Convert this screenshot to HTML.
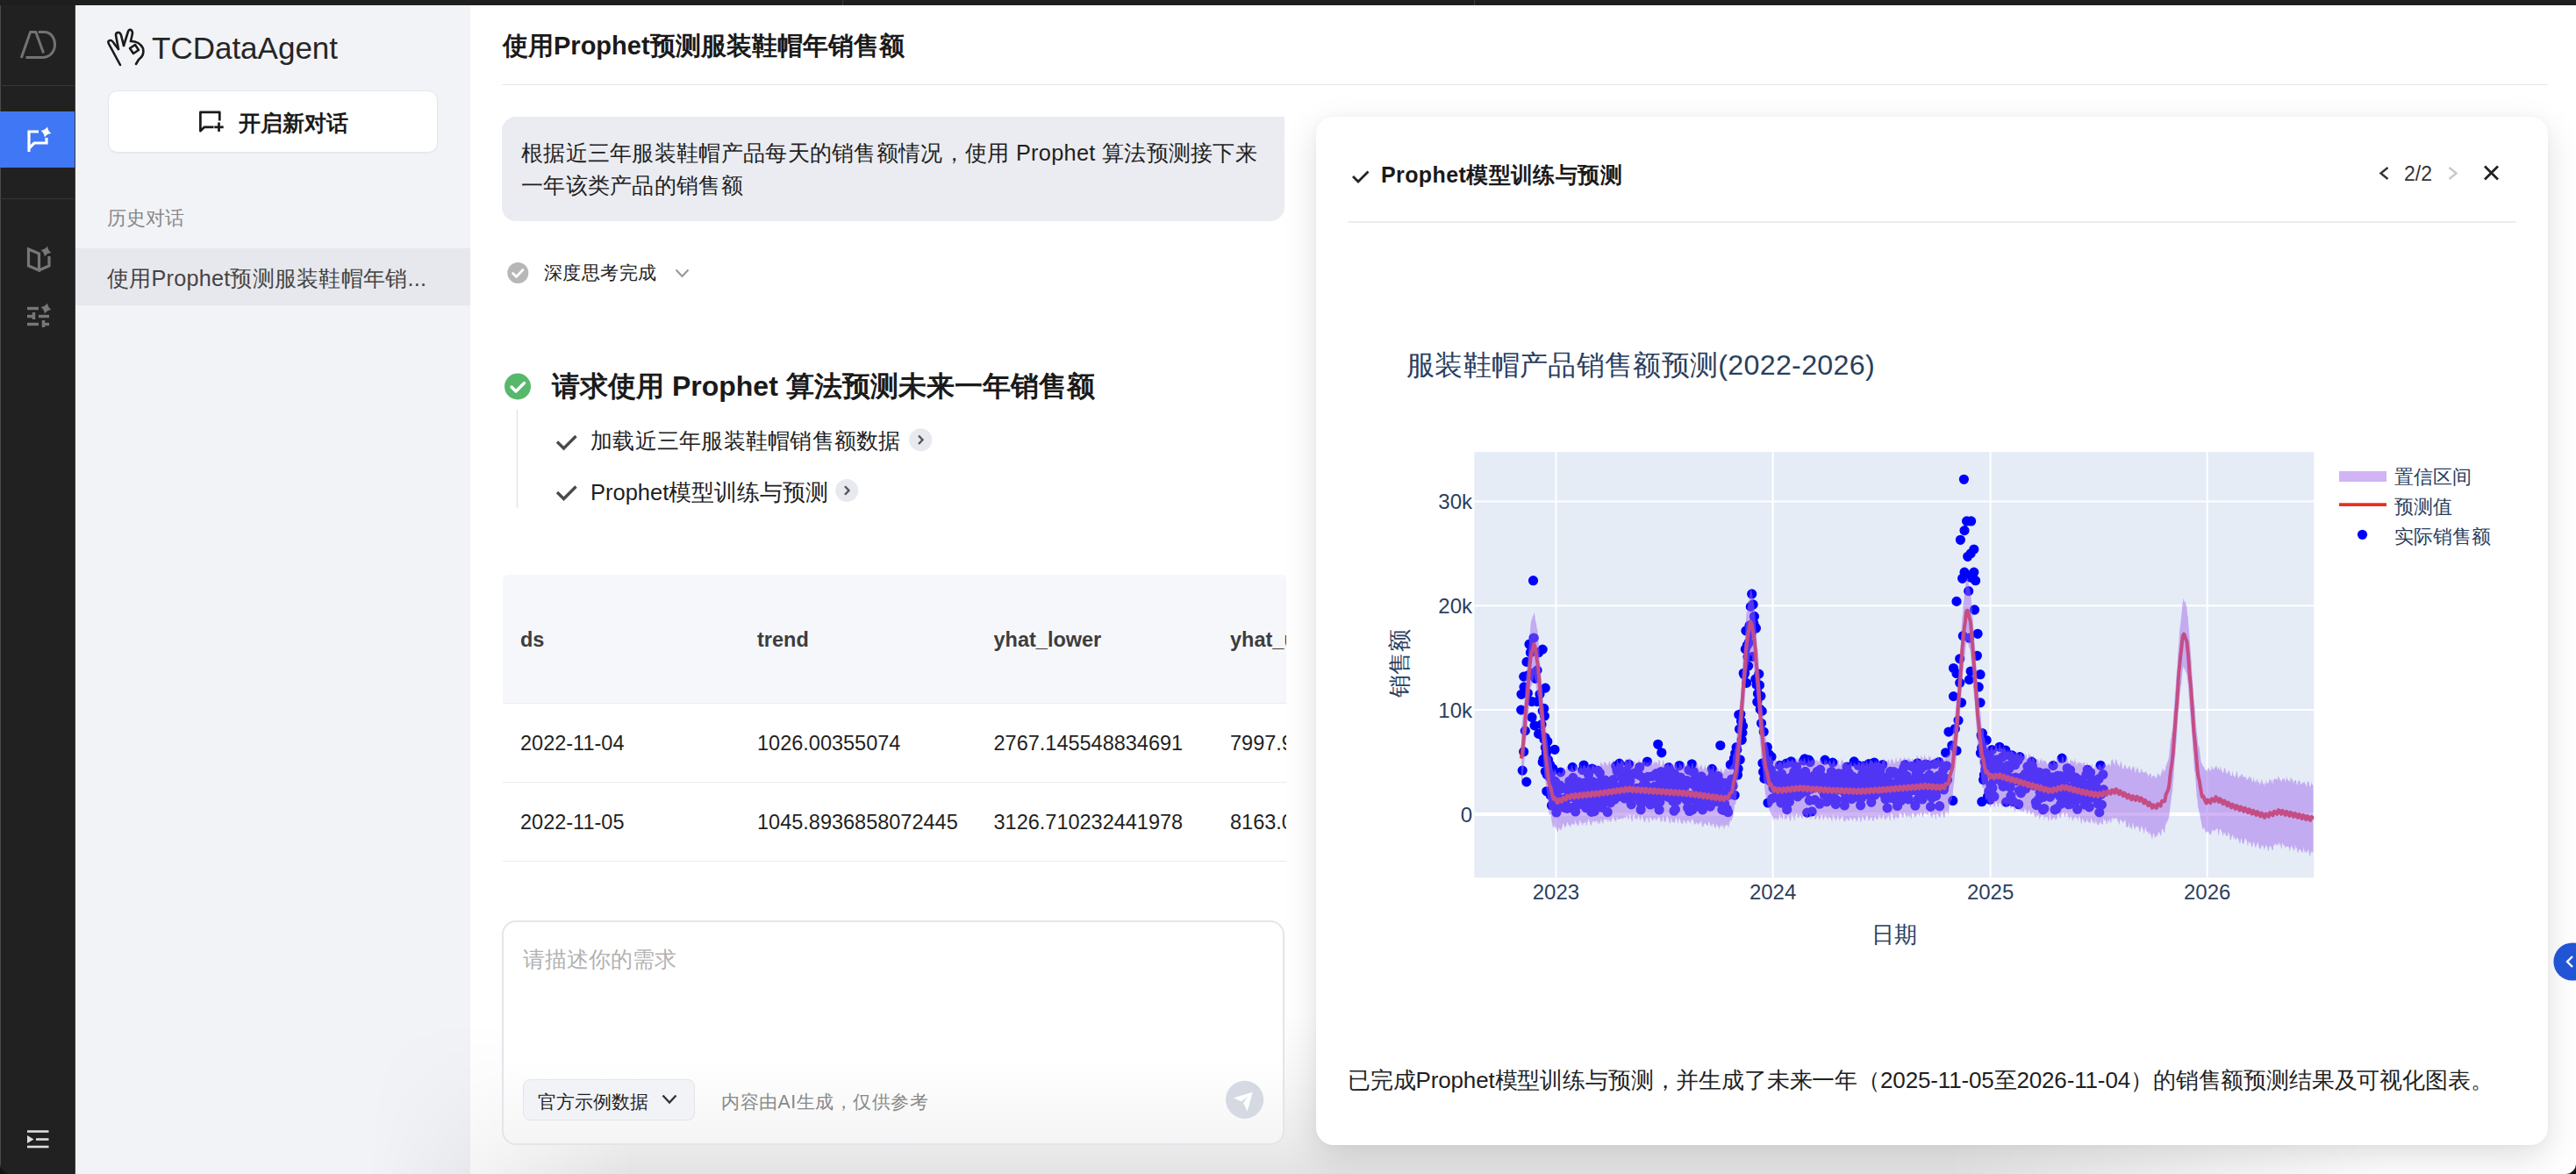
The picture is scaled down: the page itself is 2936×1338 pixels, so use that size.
<!DOCTYPE html>
<html><head><meta charset="utf-8">
<style>
*{box-sizing:border-box;margin:0;padding:0}
html,body{width:2936px;height:1338px;overflow:hidden;background:#fff;font-family:"Liberation Sans",sans-serif;color:#1f1f1f}
.abs{position:absolute}
#topbar{left:0;top:0;width:2936px;height:6px;background:#1e1e1e}
#rail{left:0;top:6px;width:86px;height:1332px;background:#212121;border-right:1px solid #3a3a3a;border-left:1px solid #4a4a4a}
#panel{left:86px;top:6px;width:450px;height:1332px;background:#f2f3f7}
.t{position:absolute;white-space:nowrap;line-height:1}
</style></head>
<body>
<div id="topbar" class="abs"></div>
<div class="abs" style="left:960px;top:0;width:1px;height:6px;background:#3a3a3a"></div>
<div class="abs" style="left:1680px;top:0;width:1px;height:6px;background:#3a3a3a"></div>
<div id="rail" class="abs"></div>
<!-- rail icons -->
<svg class="abs" style="left:0;top:0" width="86" height="1338" viewBox="0 0 86 1338">
  <!-- AD logo -->
  <g fill="none" stroke="#737373" stroke-width="3" stroke-linejoin="round">
    <path d="M24.3 66 L34.6 36.6 H40.8 L49.6 60.6"/>
    <path d="M43.8 36.6 H50 C58.5 36.6 62.5 43.5 62.5 51 C62.5 59 56.5 65.6 48.5 65.6 H29.5"/>
  </g>
  <line x1="0" y1="97.5" x2="85" y2="97.5" stroke="#353535" stroke-width="1"/>
  <rect x="0" y="127" width="85" height="64" fill="#4077f5"/>
  <!-- chat icon -->
  <path d="M33 173 V150 H44 M53 157 V163 H39 L33 169" fill="none" stroke="#fff" stroke-width="3.2" stroke-linejoin="miter"/>
  <path d="M52.5 144.3 Q54.2 148.8 58.7 150.5 Q54.2 152.2 52.5 156.7 Q50.8 152.2 46.3 150.5 Q50.8 148.8 52.5 144.3Z" fill="#fff" transform="rotate(15 52.5 150.5)"/>
  <line x1="0" y1="226.5" x2="85" y2="226.5" stroke="#353535" stroke-width="1"/>
  <!-- book icon -->
  <path d="M32.5 284 L44.5 289 V308 L32.5 303Z M44.5 308 L56 303 V292" fill="none" stroke="#777" stroke-width="3.2" stroke-linejoin="miter"/>
  <path d="M52.5 280.3 Q54.2 284.8 58.7 286.5 Q54.2 288.2 52.5 292.7 Q50.8 288.2 46.3 286.5 Q50.8 284.8 52.5 280.3Z" fill="#777" transform="rotate(15 52.5 286.5)"/>
  <!-- sliders icon -->
  <g stroke="#777" stroke-width="3.4">
    <line x1="31" y1="351.5" x2="44" y2="351.5"/>
    <line x1="31" y1="360.5" x2="39" y2="360.5"/><line x1="44" y1="360.5" x2="56" y2="360.5"/>
    <line x1="31" y1="369.5" x2="44" y2="369.5"/><line x1="49" y1="369.5" x2="56" y2="369.5"/>
    <line x1="38.5" y1="356" x2="38.5" y2="364"/><line x1="49.5" y1="365" x2="49.5" y2="373"/>
  </g>
  <path d="M52.5 345.3 Q54.2 349.8 58.7 351.5 Q54.2 353.2 52.5 357.7 Q50.8 353.2 46.3 351.5 Q50.8 349.8 52.5 345.3Z" fill="#777" transform="rotate(15 52.5 351.5)"/>
  <!-- bottom icon -->
  <g stroke="#dedede" stroke-width="2.6">
    <line x1="31" y1="1289.5" x2="55.5" y2="1289.5"/>
    <line x1="41" y1="1298.5" x2="55.5" y2="1298.5"/>
    <line x1="31" y1="1307" x2="55.5" y2="1307"/>
  </g>
  <path d="M31 1294 L38.5 1298.5 L31 1303Z" fill="#dedede"/>
</svg>
<div id="panel" class="abs"></div>
<!-- panel content -->
<svg class="abs" style="left:120px;top:30px" width="50" height="50" viewBox="120 30 50 50">
  <g fill="none" stroke="#1a1a1a" stroke-width="2.6" stroke-linecap="round" stroke-linejoin="round">
    <path d="M137 74 L124 50 Q122 46 126 46 Q128 46 131 51 L135 56"/>
    <path d="M135 56 L132 40 Q132 37 135 37 Q137 37 138 40 L141 52"/>
    <path d="M141 52 L146 36 Q147 33 149 34 Q151 35 151 38 L149 47"/>
    <path d="M149 47 Q159 47 163 55 Q165 63 158 68 L155 73"/>
    <path d="M148 55 L154 51 L158 57 L152 61Z"/>
  </g>
</svg>
<div class="t" style="left:173px;top:37px;font-size:35px;color:#262626;letter-spacing:0px">TCDataAgent</div>

<div class="abs" style="left:123px;top:103px;width:376px;height:71px;background:#fff;border:1px solid #e6e7ec;border-radius:11px;box-shadow:0 1px 2px rgba(0,0,0,0.04)"></div>
<svg class="abs" style="left:225px;top:124px" width="32" height="30" viewBox="225 124 32 30">
  <path d="M243.5 144.8 H233 L228.4 149.2 V127.8 H250.3 V137.5" fill="none" stroke="#1a1a1a" stroke-width="2.7" stroke-linejoin="round"/>
  <path d="M244.3 144.8 H254.7 M249.5 139.6 V150" fill="none" stroke="#1a1a1a" stroke-width="2.7"/>
</svg>
<div class="t" style="left:272px;top:128px;font-size:25px;font-weight:bold;color:#1a1a1a">开启新对话</div>

<div class="t" style="left:122px;top:238.5px;font-size:21.5px;color:#888">历史对话</div>
<div class="abs" style="left:86px;top:283px;width:450px;height:65px;background:#e7e8ed"></div>
<div class="t" style="left:122px;top:305px;font-size:25.2px;letter-spacing:0.25px;color:#444">使用Prophet预测服装鞋帽年销...</div>

<!-- main -->
<div class="t" style="left:573px;top:38px;font-size:29px;font-weight:bold;color:#1a1a1a">使用Prophet预测服装鞋帽年销售额</div>
<div class="abs" style="left:572px;top:96px;width:2332px;height:1px;background:#e7e7ee"></div>

<!-- bottom shadow overlay -->
<div class="abs" style="left:420px;top:1160px;width:2300px;height:178px;background:linear-gradient(to bottom, rgba(0,0,0,0) 0%, rgba(0,0,0,0.03) 40%, rgba(0,0,0,0.075) 78%, rgba(0,0,0,0.11) 100%);-webkit-mask-image:linear-gradient(to right, transparent 0px, #000 300px, #000 1800px, transparent 2300px);pointer-events:none"></div>
<div class="abs" style="left:572px;top:133px;width:892px;height:119px;background:#ebecf1;border-radius:16px 0 16px 16px"></div>
<div class="t" style="left:594px;top:156px;font-size:25.3px;letter-spacing:0.3px;line-height:37px;color:#1f1f1f;white-space:normal;width:860px">根据近三年服装鞋帽产品每天的销售额情况，使用 Prophet 算法预测接下来<br>一年该类产品的销售额</div>

<svg class="abs" style="left:576px;top:297px" width="220" height="30" viewBox="576 297 220 30">
  <circle cx="590.3" cy="311" r="12" fill="#b7b7b7"/>
  <path d="M584.5 311.5 L588.5 315.5 L596 307.5" fill="none" stroke="#fff" stroke-width="2.6" stroke-linecap="round" stroke-linejoin="round"/>
  <path d="M770.5 307.5 L777.5 315 L784.5 307.5" fill="none" stroke="#999" stroke-width="2.2"/>
</svg>
<div class="t" style="left:620px;top:299.5px;font-size:21.2px;letter-spacing:0.4px;color:#222">深度思考完成</div>

<svg class="abs" style="left:570px;top:420px" width="500" height="170" viewBox="570 420 500 170">
  <circle cx="590" cy="440.5" r="15" fill="#57b86c"/>
  <path d="M583 441 L588 446 L597.5 436.5" fill="none" stroke="#fff" stroke-width="3.4" stroke-linecap="round" stroke-linejoin="round"/>
  <line x1="589.5" y1="467" x2="589.5" y2="579" stroke="#e4e4ea" stroke-width="1.5"/>
  <path d="M635 503.5 L642.5 511 L656.5 497" fill="none" stroke="#4a4a4a" stroke-width="3.4"/>
  <path d="M635 561 L642.5 568.5 L656.5 554.5" fill="none" stroke="#4a4a4a" stroke-width="3.4"/>
  <circle cx="1049.3" cy="501.3" r="13" fill="#e8e9ee"/>
  <path d="M1047 496.5 L1051.5 501.3 L1047 506" fill="none" stroke="#555" stroke-width="2.4"/>
  <circle cx="965.2" cy="559" r="13" fill="#e8e9ee"/>
  <path d="M963 554.2 L967.5 559 L963 563.8" fill="none" stroke="#555" stroke-width="2.4"/>
</svg>
<div class="t" style="left:629px;top:424px;font-size:32px;font-weight:bold;color:#1a1a1a">请求使用 Prophet 算法预测未来一年销售额</div>
<div class="t" style="left:673px;top:490px;font-size:25px;letter-spacing:0.25px;color:#1f1f1f">加载近三年服装鞋帽销售额数据</div>
<div class="t" style="left:673px;top:549px;font-size:25.5px;color:#1f1f1f">Prophet模型训练与预测</div>

<!-- table -->
<div class="abs" style="left:573px;top:655px;width:893px;height:330px;overflow:hidden">
  <div class="abs" style="left:0;top:0;width:893px;height:146px;background:#f6f7fb;border-radius:6px 6px 0 0"></div>
  <div class="abs" style="left:0;top:146px;width:893px;height:1px;background:#ebebf0"></div>
  <div class="abs" style="left:0;top:236px;width:893px;height:1px;background:#ebebf0"></div>
  <div class="abs" style="left:0;top:326px;width:893px;height:1px;background:#ebebf0"></div>
  <div class="t" style="left:20px;top:63px;font-size:23.5px;font-weight:bold;color:#3d3d3d">ds</div>
  <div class="t" style="left:290px;top:63px;font-size:23.5px;font-weight:bold;color:#3d3d3d">trend</div>
  <div class="t" style="left:559.5px;top:63px;font-size:23.5px;font-weight:bold;color:#3d3d3d">yhat_lower</div>
  <div class="t" style="left:829px;top:63px;font-size:23.5px;font-weight:bold;color:#3d3d3d">yhat_upper</div>
  <div class="t" style="left:20px;top:181px;font-size:23.5px;color:#1f1f1f">2022-11-04</div>
  <div class="t" style="left:290px;top:181px;font-size:23.5px;color:#1f1f1f">1026.00355074</div>
  <div class="t" style="left:559.5px;top:181px;font-size:23.5px;color:#1f1f1f">2767.145548834691</div>
  <div class="t" style="left:829px;top:181px;font-size:23.5px;color:#1f1f1f">7997.912345</div>
  <div class="t" style="left:20px;top:271px;font-size:23.5px;color:#1f1f1f">2022-11-05</div>
  <div class="t" style="left:290px;top:271px;font-size:23.5px;color:#1f1f1f">1045.8936858072445</div>
  <div class="t" style="left:559.5px;top:271px;font-size:23.5px;color:#1f1f1f">3126.710232441978</div>
  <div class="t" style="left:829px;top:271px;font-size:23.5px;color:#1f1f1f">8163.012345</div>
</div>

<!-- input -->
<div class="abs" style="left:572px;top:1049px;width:892px;height:256px;background:linear-gradient(to bottom,#fff 0%,#fff 62%,#f9f9f9 85%,#f5f5f5 100%);border:2px solid #e3e5eb;border-radius:16px"></div>
<div class="t" style="left:596px;top:1081px;font-size:25px;color:#b2b2b2">请描述你的需求</div>
<div class="abs" style="left:596px;top:1230px;width:196px;height:47px;background:#f2f3f7;border:1px solid #e3e4ea;border-radius:8px"></div>
<div class="t" style="left:613px;top:1244.5px;font-size:21px;color:#1f1f1f">官方示例数据</div>
<svg class="abs" style="left:750px;top:1244px" width="26" height="20" viewBox="750 1244 26 20">
  <path d="M755.5 1248.5 L763 1256.5 L770.5 1248.5" fill="none" stroke="#333" stroke-width="2.4"/>
</svg>
<div class="t" style="left:822px;top:1244.5px;font-size:21.2px;letter-spacing:0.5px;color:#888">内容由AI生成，仅供参考</div>
<svg class="abs" style="left:1396px;top:1231px" width="46" height="46" viewBox="1396 1231 46 46">
  <circle cx="1418.6" cy="1253.35" r="21.6" fill="#d5dae2"/>
  <path d="M1427.7 1244.7 L1405.9 1251.3 L1414.6 1255.2 L1422.9 1249.2 L1417 1257 L1421.7 1266.5 Z" fill="#fff"/>
</svg>

<!-- right card -->
<div class="abs" style="left:1500px;top:133px;width:1404px;height:1172px;background:#fff;border-radius:20px;box-shadow:0 14px 40px rgba(0,0,0,0.13), 0 0 10px rgba(0,0,0,0.03)"></div>
<svg class="abs" style="left:1536px;top:185px" width="30" height="30" viewBox="1536 185 30 30">
  <path d="M1542 201 L1548 207 L1559.5 195.5" fill="none" stroke="#222" stroke-width="2.8"/>
</svg>
<div class="t" style="left:1574px;top:187px;font-size:25px;letter-spacing:0.4px;font-weight:bold;color:#1a1a1a">Prophet模型训练与预测</div>
<svg class="abs" style="left:2700px;top:180px" width="160" height="36" viewBox="2700 180 160 36">
  <path d="M2721.5 191 L2713.5 197.5 L2721.5 204" fill="none" stroke="#333" stroke-width="2.4"/>
  <path d="M2791.5 191 L2799.5 197.5 L2791.5 204" fill="none" stroke="#c8c8c8" stroke-width="2.4"/>
  <path d="M2832 189.5 L2847 204.5 M2847 189.5 L2832 204.5" fill="none" stroke="#222" stroke-width="2.8"/>
</svg>
<div class="t" style="left:2740px;top:187px;font-size:23px;color:#333">2/2</div>
<div class="abs" style="left:1536px;top:252px;width:1332px;height:2px;background:#ebebf2"></div>

<svg class="abs" style="left:1500px;top:300px" width="1404" height="800" viewBox="1500 300 1404 800">
<text x="1603" y="427" font-family="Liberation Sans,sans-serif" font-size="32.2" letter-spacing="0.3" fill="#2a3f5f">服装鞋帽产品销售额预测(2022-2026)</text>
<defs><clipPath id="pc"><rect x="1680.4" y="515" width="956.8" height="485.3"/></clipPath></defs>
<rect x="1680.4" y="515" width="956.8" height="485.3" fill="#e5ecf6"/>
<line x1="1773.4" y1="515" x2="1773.4" y2="1000.3" stroke="#fff" stroke-width="2"/>
<line x1="2020.6" y1="515" x2="2020.6" y2="1000.3" stroke="#fff" stroke-width="2"/>
<line x1="2268.6" y1="515" x2="2268.6" y2="1000.3" stroke="#fff" stroke-width="2"/>
<line x1="2515.7" y1="515" x2="2515.7" y2="1000.3" stroke="#fff" stroke-width="2"/>
<line x1="1680.4" y1="571.4" x2="2637.2" y2="571.4" stroke="#fff" stroke-width="2"/>
<line x1="1680.4" y1="690.2" x2="2637.2" y2="690.2" stroke="#fff" stroke-width="2"/>
<line x1="1680.4" y1="809.0" x2="2637.2" y2="809.0" stroke="#fff" stroke-width="2"/>
<line x1="1680.4" y1="928.0" x2="2637.2" y2="928.0" stroke="#fff" stroke-width="4"/>
<g clip-path="url(#pc)">
<path d="M1753.5,865.1a5.6,5.6 0 1,0 11.2,0a5.6,5.6 0 1,0 -11.2,0M1754.1,807.4a5.6,5.6 0 1,0 11.2,0a5.6,5.6 0 1,0 -11.2,0M1754.8,816a5.6,5.6 0 1,0 11.2,0a5.6,5.6 0 1,0 -11.2,0M1755.5,840.6a5.6,5.6 0 1,0 11.2,0a5.6,5.6 0 1,0 -11.2,0M1756.2,852.6a5.6,5.6 0 1,0 11.2,0a5.6,5.6 0 1,0 -11.2,0M1756.8,857.8a5.6,5.6 0 1,0 11.2,0a5.6,5.6 0 1,0 -11.2,0M1757.5,882.8a5.6,5.6 0 1,0 11.2,0a5.6,5.6 0 1,0 -11.2,0M1758.2,845.1a5.6,5.6 0 1,0 11.2,0a5.6,5.6 0 1,0 -11.2,0M1758.9,865.9a5.6,5.6 0 1,0 11.2,0a5.6,5.6 0 1,0 -11.2,0M1759.5,874.8a5.6,5.6 0 1,0 11.2,0a5.6,5.6 0 1,0 -11.2,0M1760.2,882.3a5.6,5.6 0 1,0 11.2,0a5.6,5.6 0 1,0 -11.2,0M1760.9,871.4a5.6,5.6 0 1,0 11.2,0a5.6,5.6 0 1,0 -11.2,0M1761.6,882.4a5.6,5.6 0 1,0 11.2,0a5.6,5.6 0 1,0 -11.2,0M1762.3,881.3a5.6,5.6 0 1,0 11.2,0a5.6,5.6 0 1,0 -11.2,0M1762.9,918a5.6,5.6 0 1,0 11.2,0a5.6,5.6 0 1,0 -11.2,0M1763.6,892.2a5.6,5.6 0 1,0 11.2,0a5.6,5.6 0 1,0 -11.2,0M1764.3,875.9a5.6,5.6 0 1,0 11.2,0a5.6,5.6 0 1,0 -11.2,0M1765,914.5a5.6,5.6 0 1,0 11.2,0a5.6,5.6 0 1,0 -11.2,0M1765.6,907.6a5.6,5.6 0 1,0 11.2,0a5.6,5.6 0 1,0 -11.2,0M1766.3,890.2a5.6,5.6 0 1,0 11.2,0a5.6,5.6 0 1,0 -11.2,0M1767,890.8a5.6,5.6 0 1,0 11.2,0a5.6,5.6 0 1,0 -11.2,0M1767.7,897.7a5.6,5.6 0 1,0 11.2,0a5.6,5.6 0 1,0 -11.2,0M1768.3,925.9a5.6,5.6 0 1,0 11.2,0a5.6,5.6 0 1,0 -11.2,0M1769,902.2a5.6,5.6 0 1,0 11.2,0a5.6,5.6 0 1,0 -11.2,0M1769.7,921.9a5.6,5.6 0 1,0 11.2,0a5.6,5.6 0 1,0 -11.2,0M1770.4,920.5a5.6,5.6 0 1,0 11.2,0a5.6,5.6 0 1,0 -11.2,0M1771.1,898a5.6,5.6 0 1,0 11.2,0a5.6,5.6 0 1,0 -11.2,0M1771.7,910.3a5.6,5.6 0 1,0 11.2,0a5.6,5.6 0 1,0 -11.2,0M1772.4,895.2a5.6,5.6 0 1,0 11.2,0a5.6,5.6 0 1,0 -11.2,0M1773.1,880.1a5.6,5.6 0 1,0 11.2,0a5.6,5.6 0 1,0 -11.2,0M1773.8,897.6a5.6,5.6 0 1,0 11.2,0a5.6,5.6 0 1,0 -11.2,0M1774.4,898.9a5.6,5.6 0 1,0 11.2,0a5.6,5.6 0 1,0 -11.2,0M1775.1,919.4a5.6,5.6 0 1,0 11.2,0a5.6,5.6 0 1,0 -11.2,0M1775.8,913.1a5.6,5.6 0 1,0 11.2,0a5.6,5.6 0 1,0 -11.2,0M1776.5,918.9a5.6,5.6 0 1,0 11.2,0a5.6,5.6 0 1,0 -11.2,0M1777.1,912.1a5.6,5.6 0 1,0 11.2,0a5.6,5.6 0 1,0 -11.2,0M1777.8,920.6a5.6,5.6 0 1,0 11.2,0a5.6,5.6 0 1,0 -11.2,0M1778.5,915.5a5.6,5.6 0 1,0 11.2,0a5.6,5.6 0 1,0 -11.2,0M1779.2,909.8a5.6,5.6 0 1,0 11.2,0a5.6,5.6 0 1,0 -11.2,0M1779.9,918.5a5.6,5.6 0 1,0 11.2,0a5.6,5.6 0 1,0 -11.2,0M1780.5,921.4a5.6,5.6 0 1,0 11.2,0a5.6,5.6 0 1,0 -11.2,0M1781.2,920.7a5.6,5.6 0 1,0 11.2,0a5.6,5.6 0 1,0 -11.2,0M1781.9,896.3a5.6,5.6 0 1,0 11.2,0a5.6,5.6 0 1,0 -11.2,0M1782.6,902.4a5.6,5.6 0 1,0 11.2,0a5.6,5.6 0 1,0 -11.2,0M1783.2,890.3a5.6,5.6 0 1,0 11.2,0a5.6,5.6 0 1,0 -11.2,0M1783.9,890.8a5.6,5.6 0 1,0 11.2,0a5.6,5.6 0 1,0 -11.2,0M1784.6,908a5.6,5.6 0 1,0 11.2,0a5.6,5.6 0 1,0 -11.2,0M1785.3,891.6a5.6,5.6 0 1,0 11.2,0a5.6,5.6 0 1,0 -11.2,0M1786,920.7a5.6,5.6 0 1,0 11.2,0a5.6,5.6 0 1,0 -11.2,0M1786.6,874.4a5.6,5.6 0 1,0 11.2,0a5.6,5.6 0 1,0 -11.2,0M1787.3,886.4a5.6,5.6 0 1,0 11.2,0a5.6,5.6 0 1,0 -11.2,0M1788,906.8a5.6,5.6 0 1,0 11.2,0a5.6,5.6 0 1,0 -11.2,0M1788.7,920.6a5.6,5.6 0 1,0 11.2,0a5.6,5.6 0 1,0 -11.2,0M1789.3,897.6a5.6,5.6 0 1,0 11.2,0a5.6,5.6 0 1,0 -11.2,0M1790,925a5.6,5.6 0 1,0 11.2,0a5.6,5.6 0 1,0 -11.2,0M1790.7,911.2a5.6,5.6 0 1,0 11.2,0a5.6,5.6 0 1,0 -11.2,0M1791.4,891a5.6,5.6 0 1,0 11.2,0a5.6,5.6 0 1,0 -11.2,0M1792,901.2a5.6,5.6 0 1,0 11.2,0a5.6,5.6 0 1,0 -11.2,0M1792.7,910.1a5.6,5.6 0 1,0 11.2,0a5.6,5.6 0 1,0 -11.2,0M1793.4,891.1a5.6,5.6 0 1,0 11.2,0a5.6,5.6 0 1,0 -11.2,0M1794.1,916.5a5.6,5.6 0 1,0 11.2,0a5.6,5.6 0 1,0 -11.2,0M1794.8,895.8a5.6,5.6 0 1,0 11.2,0a5.6,5.6 0 1,0 -11.2,0M1795.4,906.8a5.6,5.6 0 1,0 11.2,0a5.6,5.6 0 1,0 -11.2,0M1796.1,912.4a5.6,5.6 0 1,0 11.2,0a5.6,5.6 0 1,0 -11.2,0M1796.8,895.4a5.6,5.6 0 1,0 11.2,0a5.6,5.6 0 1,0 -11.2,0M1797.5,916.5a5.6,5.6 0 1,0 11.2,0a5.6,5.6 0 1,0 -11.2,0M1798.1,877.6a5.6,5.6 0 1,0 11.2,0a5.6,5.6 0 1,0 -11.2,0M1798.8,909.8a5.6,5.6 0 1,0 11.2,0a5.6,5.6 0 1,0 -11.2,0M1799.5,872a5.6,5.6 0 1,0 11.2,0a5.6,5.6 0 1,0 -11.2,0M1800.2,914.5a5.6,5.6 0 1,0 11.2,0a5.6,5.6 0 1,0 -11.2,0M1800.8,892a5.6,5.6 0 1,0 11.2,0a5.6,5.6 0 1,0 -11.2,0M1801.5,917.7a5.6,5.6 0 1,0 11.2,0a5.6,5.6 0 1,0 -11.2,0M1802.2,920.7a5.6,5.6 0 1,0 11.2,0a5.6,5.6 0 1,0 -11.2,0M1802.9,901a5.6,5.6 0 1,0 11.2,0a5.6,5.6 0 1,0 -11.2,0M1803.6,892a5.6,5.6 0 1,0 11.2,0a5.6,5.6 0 1,0 -11.2,0M1804.2,916.2a5.6,5.6 0 1,0 11.2,0a5.6,5.6 0 1,0 -11.2,0M1804.9,882.8a5.6,5.6 0 1,0 11.2,0a5.6,5.6 0 1,0 -11.2,0M1805.6,910.7a5.6,5.6 0 1,0 11.2,0a5.6,5.6 0 1,0 -11.2,0M1806.3,899a5.6,5.6 0 1,0 11.2,0a5.6,5.6 0 1,0 -11.2,0M1806.9,896.7a5.6,5.6 0 1,0 11.2,0a5.6,5.6 0 1,0 -11.2,0M1807.6,894.5a5.6,5.6 0 1,0 11.2,0a5.6,5.6 0 1,0 -11.2,0M1808.3,925.4a5.6,5.6 0 1,0 11.2,0a5.6,5.6 0 1,0 -11.2,0M1809,876.1a5.6,5.6 0 1,0 11.2,0a5.6,5.6 0 1,0 -11.2,0M1809.6,890.8a5.6,5.6 0 1,0 11.2,0a5.6,5.6 0 1,0 -11.2,0M1810.3,905.1a5.6,5.6 0 1,0 11.2,0a5.6,5.6 0 1,0 -11.2,0M1811,914.3a5.6,5.6 0 1,0 11.2,0a5.6,5.6 0 1,0 -11.2,0M1811.7,924.6a5.6,5.6 0 1,0 11.2,0a5.6,5.6 0 1,0 -11.2,0M1812.4,920.8a5.6,5.6 0 1,0 11.2,0a5.6,5.6 0 1,0 -11.2,0M1813,892.8a5.6,5.6 0 1,0 11.2,0a5.6,5.6 0 1,0 -11.2,0M1813.7,902.4a5.6,5.6 0 1,0 11.2,0a5.6,5.6 0 1,0 -11.2,0M1814.4,913.5a5.6,5.6 0 1,0 11.2,0a5.6,5.6 0 1,0 -11.2,0M1815.1,906a5.6,5.6 0 1,0 11.2,0a5.6,5.6 0 1,0 -11.2,0M1815.7,878.4a5.6,5.6 0 1,0 11.2,0a5.6,5.6 0 1,0 -11.2,0M1816.4,905.4a5.6,5.6 0 1,0 11.2,0a5.6,5.6 0 1,0 -11.2,0M1817.1,909.6a5.6,5.6 0 1,0 11.2,0a5.6,5.6 0 1,0 -11.2,0M1817.8,881.3a5.6,5.6 0 1,0 11.2,0a5.6,5.6 0 1,0 -11.2,0M1818.5,890.8a5.6,5.6 0 1,0 11.2,0a5.6,5.6 0 1,0 -11.2,0M1819.1,896.8a5.6,5.6 0 1,0 11.2,0a5.6,5.6 0 1,0 -11.2,0M1819.8,906.5a5.6,5.6 0 1,0 11.2,0a5.6,5.6 0 1,0 -11.2,0M1820.5,920.4a5.6,5.6 0 1,0 11.2,0a5.6,5.6 0 1,0 -11.2,0M1821.2,916.2a5.6,5.6 0 1,0 11.2,0a5.6,5.6 0 1,0 -11.2,0M1821.8,907.5a5.6,5.6 0 1,0 11.2,0a5.6,5.6 0 1,0 -11.2,0M1822.5,902.1a5.6,5.6 0 1,0 11.2,0a5.6,5.6 0 1,0 -11.2,0M1823.2,891.6a5.6,5.6 0 1,0 11.2,0a5.6,5.6 0 1,0 -11.2,0M1823.9,889.2a5.6,5.6 0 1,0 11.2,0a5.6,5.6 0 1,0 -11.2,0M1824.5,894.4a5.6,5.6 0 1,0 11.2,0a5.6,5.6 0 1,0 -11.2,0M1825.2,895.5a5.6,5.6 0 1,0 11.2,0a5.6,5.6 0 1,0 -11.2,0M1825.9,913.3a5.6,5.6 0 1,0 11.2,0a5.6,5.6 0 1,0 -11.2,0M1826.6,925.5a5.6,5.6 0 1,0 11.2,0a5.6,5.6 0 1,0 -11.2,0M1827.3,905.5a5.6,5.6 0 1,0 11.2,0a5.6,5.6 0 1,0 -11.2,0M1827.9,908.9a5.6,5.6 0 1,0 11.2,0a5.6,5.6 0 1,0 -11.2,0M1828.6,905a5.6,5.6 0 1,0 11.2,0a5.6,5.6 0 1,0 -11.2,0M1829.3,900.6a5.6,5.6 0 1,0 11.2,0a5.6,5.6 0 1,0 -11.2,0M1830,914.8a5.6,5.6 0 1,0 11.2,0a5.6,5.6 0 1,0 -11.2,0M1830.6,914.1a5.6,5.6 0 1,0 11.2,0a5.6,5.6 0 1,0 -11.2,0M1831.3,901a5.6,5.6 0 1,0 11.2,0a5.6,5.6 0 1,0 -11.2,0M1832,896.2a5.6,5.6 0 1,0 11.2,0a5.6,5.6 0 1,0 -11.2,0M1832.7,904.1a5.6,5.6 0 1,0 11.2,0a5.6,5.6 0 1,0 -11.2,0M1833.3,888.6a5.6,5.6 0 1,0 11.2,0a5.6,5.6 0 1,0 -11.2,0M1834,899.2a5.6,5.6 0 1,0 11.2,0a5.6,5.6 0 1,0 -11.2,0M1834.7,911.1a5.6,5.6 0 1,0 11.2,0a5.6,5.6 0 1,0 -11.2,0M1835.4,897.7a5.6,5.6 0 1,0 11.2,0a5.6,5.6 0 1,0 -11.2,0M1836.1,873.2a5.6,5.6 0 1,0 11.2,0a5.6,5.6 0 1,0 -11.2,0M1836.7,906.3a5.6,5.6 0 1,0 11.2,0a5.6,5.6 0 1,0 -11.2,0M1837.4,878.5a5.6,5.6 0 1,0 11.2,0a5.6,5.6 0 1,0 -11.2,0M1838.1,875.9a5.6,5.6 0 1,0 11.2,0a5.6,5.6 0 1,0 -11.2,0M1838.8,875a5.6,5.6 0 1,0 11.2,0a5.6,5.6 0 1,0 -11.2,0M1839.4,907.7a5.6,5.6 0 1,0 11.2,0a5.6,5.6 0 1,0 -11.2,0M1840.1,870.2a5.6,5.6 0 1,0 11.2,0a5.6,5.6 0 1,0 -11.2,0M1840.8,896.7a5.6,5.6 0 1,0 11.2,0a5.6,5.6 0 1,0 -11.2,0M1841.5,899.9a5.6,5.6 0 1,0 11.2,0a5.6,5.6 0 1,0 -11.2,0M1842.1,897a5.6,5.6 0 1,0 11.2,0a5.6,5.6 0 1,0 -11.2,0M1842.8,885.9a5.6,5.6 0 1,0 11.2,0a5.6,5.6 0 1,0 -11.2,0M1843.5,894.1a5.6,5.6 0 1,0 11.2,0a5.6,5.6 0 1,0 -11.2,0M1844.2,898.2a5.6,5.6 0 1,0 11.2,0a5.6,5.6 0 1,0 -11.2,0M1844.9,879.3a5.6,5.6 0 1,0 11.2,0a5.6,5.6 0 1,0 -11.2,0M1845.5,907.5a5.6,5.6 0 1,0 11.2,0a5.6,5.6 0 1,0 -11.2,0M1846.2,910a5.6,5.6 0 1,0 11.2,0a5.6,5.6 0 1,0 -11.2,0M1846.9,882.3a5.6,5.6 0 1,0 11.2,0a5.6,5.6 0 1,0 -11.2,0M1847.6,883.8a5.6,5.6 0 1,0 11.2,0a5.6,5.6 0 1,0 -11.2,0M1848.2,879.2a5.6,5.6 0 1,0 11.2,0a5.6,5.6 0 1,0 -11.2,0M1848.9,909.8a5.6,5.6 0 1,0 11.2,0a5.6,5.6 0 1,0 -11.2,0M1849.6,881.4a5.6,5.6 0 1,0 11.2,0a5.6,5.6 0 1,0 -11.2,0M1850.3,890.4a5.6,5.6 0 1,0 11.2,0a5.6,5.6 0 1,0 -11.2,0M1850.9,871.1a5.6,5.6 0 1,0 11.2,0a5.6,5.6 0 1,0 -11.2,0M1851.6,909.9a5.6,5.6 0 1,0 11.2,0a5.6,5.6 0 1,0 -11.2,0M1852.3,890.2a5.6,5.6 0 1,0 11.2,0a5.6,5.6 0 1,0 -11.2,0M1853,897.9a5.6,5.6 0 1,0 11.2,0a5.6,5.6 0 1,0 -11.2,0M1853.7,916.9a5.6,5.6 0 1,0 11.2,0a5.6,5.6 0 1,0 -11.2,0M1854.3,906.2a5.6,5.6 0 1,0 11.2,0a5.6,5.6 0 1,0 -11.2,0M1855,881.9a5.6,5.6 0 1,0 11.2,0a5.6,5.6 0 1,0 -11.2,0M1855.7,902a5.6,5.6 0 1,0 11.2,0a5.6,5.6 0 1,0 -11.2,0M1856.4,903a5.6,5.6 0 1,0 11.2,0a5.6,5.6 0 1,0 -11.2,0M1857,881.6a5.6,5.6 0 1,0 11.2,0a5.6,5.6 0 1,0 -11.2,0M1857.7,880.9a5.6,5.6 0 1,0 11.2,0a5.6,5.6 0 1,0 -11.2,0M1858.4,882a5.6,5.6 0 1,0 11.2,0a5.6,5.6 0 1,0 -11.2,0M1859.1,907.6a5.6,5.6 0 1,0 11.2,0a5.6,5.6 0 1,0 -11.2,0M1859.8,898.4a5.6,5.6 0 1,0 11.2,0a5.6,5.6 0 1,0 -11.2,0M1860.4,881.8a5.6,5.6 0 1,0 11.2,0a5.6,5.6 0 1,0 -11.2,0M1861.1,902.4a5.6,5.6 0 1,0 11.2,0a5.6,5.6 0 1,0 -11.2,0M1861.8,904.1a5.6,5.6 0 1,0 11.2,0a5.6,5.6 0 1,0 -11.2,0M1862.5,883.4a5.6,5.6 0 1,0 11.2,0a5.6,5.6 0 1,0 -11.2,0M1863.1,874.5a5.6,5.6 0 1,0 11.2,0a5.6,5.6 0 1,0 -11.2,0M1863.8,912.8a5.6,5.6 0 1,0 11.2,0a5.6,5.6 0 1,0 -11.2,0M1864.5,922.8a5.6,5.6 0 1,0 11.2,0a5.6,5.6 0 1,0 -11.2,0M1865.2,916.1a5.6,5.6 0 1,0 11.2,0a5.6,5.6 0 1,0 -11.2,0M1865.8,907.6a5.6,5.6 0 1,0 11.2,0a5.6,5.6 0 1,0 -11.2,0M1866.5,896.1a5.6,5.6 0 1,0 11.2,0a5.6,5.6 0 1,0 -11.2,0M1867.2,886.6a5.6,5.6 0 1,0 11.2,0a5.6,5.6 0 1,0 -11.2,0M1867.9,898.2a5.6,5.6 0 1,0 11.2,0a5.6,5.6 0 1,0 -11.2,0M1868.6,907a5.6,5.6 0 1,0 11.2,0a5.6,5.6 0 1,0 -11.2,0M1869.2,896.2a5.6,5.6 0 1,0 11.2,0a5.6,5.6 0 1,0 -11.2,0M1869.9,909.7a5.6,5.6 0 1,0 11.2,0a5.6,5.6 0 1,0 -11.2,0M1870.6,894.8a5.6,5.6 0 1,0 11.2,0a5.6,5.6 0 1,0 -11.2,0M1871.3,903.3a5.6,5.6 0 1,0 11.2,0a5.6,5.6 0 1,0 -11.2,0M1871.9,868.1a5.6,5.6 0 1,0 11.2,0a5.6,5.6 0 1,0 -11.2,0M1872.6,885.3a5.6,5.6 0 1,0 11.2,0a5.6,5.6 0 1,0 -11.2,0M1873.3,909.2a5.6,5.6 0 1,0 11.2,0a5.6,5.6 0 1,0 -11.2,0M1874,912.3a5.6,5.6 0 1,0 11.2,0a5.6,5.6 0 1,0 -11.2,0M1874.6,902.9a5.6,5.6 0 1,0 11.2,0a5.6,5.6 0 1,0 -11.2,0M1875.3,916.9a5.6,5.6 0 1,0 11.2,0a5.6,5.6 0 1,0 -11.2,0M1876,904.8a5.6,5.6 0 1,0 11.2,0a5.6,5.6 0 1,0 -11.2,0M1876.7,905.8a5.6,5.6 0 1,0 11.2,0a5.6,5.6 0 1,0 -11.2,0M1877.4,884.8a5.6,5.6 0 1,0 11.2,0a5.6,5.6 0 1,0 -11.2,0M1878,903.9a5.6,5.6 0 1,0 11.2,0a5.6,5.6 0 1,0 -11.2,0M1878.7,909.8a5.6,5.6 0 1,0 11.2,0a5.6,5.6 0 1,0 -11.2,0M1879.4,915.6a5.6,5.6 0 1,0 11.2,0a5.6,5.6 0 1,0 -11.2,0M1880.1,910.9a5.6,5.6 0 1,0 11.2,0a5.6,5.6 0 1,0 -11.2,0M1880.7,896.1a5.6,5.6 0 1,0 11.2,0a5.6,5.6 0 1,0 -11.2,0M1881.4,899a5.6,5.6 0 1,0 11.2,0a5.6,5.6 0 1,0 -11.2,0M1882.1,881.7a5.6,5.6 0 1,0 11.2,0a5.6,5.6 0 1,0 -11.2,0M1882.8,907a5.6,5.6 0 1,0 11.2,0a5.6,5.6 0 1,0 -11.2,0M1883.4,884.8a5.6,5.6 0 1,0 11.2,0a5.6,5.6 0 1,0 -11.2,0M1884.1,848.3a5.6,5.6 0 1,0 11.2,0a5.6,5.6 0 1,0 -11.2,0M1884.8,895.2a5.6,5.6 0 1,0 11.2,0a5.6,5.6 0 1,0 -11.2,0M1885.5,923a5.6,5.6 0 1,0 11.2,0a5.6,5.6 0 1,0 -11.2,0M1886.2,914a5.6,5.6 0 1,0 11.2,0a5.6,5.6 0 1,0 -11.2,0M1886.8,887.4a5.6,5.6 0 1,0 11.2,0a5.6,5.6 0 1,0 -11.2,0M1887.5,879.6a5.6,5.6 0 1,0 11.2,0a5.6,5.6 0 1,0 -11.2,0M1888.2,857.8a5.6,5.6 0 1,0 11.2,0a5.6,5.6 0 1,0 -11.2,0M1888.9,887.5a5.6,5.6 0 1,0 11.2,0a5.6,5.6 0 1,0 -11.2,0M1889.5,901a5.6,5.6 0 1,0 11.2,0a5.6,5.6 0 1,0 -11.2,0M1890.2,900.9a5.6,5.6 0 1,0 11.2,0a5.6,5.6 0 1,0 -11.2,0M1890.9,905.8a5.6,5.6 0 1,0 11.2,0a5.6,5.6 0 1,0 -11.2,0M1891.6,884.5a5.6,5.6 0 1,0 11.2,0a5.6,5.6 0 1,0 -11.2,0M1892.3,894.4a5.6,5.6 0 1,0 11.2,0a5.6,5.6 0 1,0 -11.2,0M1892.9,903.2a5.6,5.6 0 1,0 11.2,0a5.6,5.6 0 1,0 -11.2,0M1893.6,902.7a5.6,5.6 0 1,0 11.2,0a5.6,5.6 0 1,0 -11.2,0M1894.3,888.2a5.6,5.6 0 1,0 11.2,0a5.6,5.6 0 1,0 -11.2,0M1895,891.8a5.6,5.6 0 1,0 11.2,0a5.6,5.6 0 1,0 -11.2,0M1895.6,908.4a5.6,5.6 0 1,0 11.2,0a5.6,5.6 0 1,0 -11.2,0M1896.3,874.7a5.6,5.6 0 1,0 11.2,0a5.6,5.6 0 1,0 -11.2,0M1897,895.9a5.6,5.6 0 1,0 11.2,0a5.6,5.6 0 1,0 -11.2,0M1897.7,900.2a5.6,5.6 0 1,0 11.2,0a5.6,5.6 0 1,0 -11.2,0M1898.3,878.4a5.6,5.6 0 1,0 11.2,0a5.6,5.6 0 1,0 -11.2,0M1899,882.1a5.6,5.6 0 1,0 11.2,0a5.6,5.6 0 1,0 -11.2,0M1899.7,897.7a5.6,5.6 0 1,0 11.2,0a5.6,5.6 0 1,0 -11.2,0M1900.4,890.1a5.6,5.6 0 1,0 11.2,0a5.6,5.6 0 1,0 -11.2,0M1901.1,913.1a5.6,5.6 0 1,0 11.2,0a5.6,5.6 0 1,0 -11.2,0M1901.7,908.5a5.6,5.6 0 1,0 11.2,0a5.6,5.6 0 1,0 -11.2,0M1902.4,924.2a5.6,5.6 0 1,0 11.2,0a5.6,5.6 0 1,0 -11.2,0M1903.1,882.2a5.6,5.6 0 1,0 11.2,0a5.6,5.6 0 1,0 -11.2,0M1903.8,922.4a5.6,5.6 0 1,0 11.2,0a5.6,5.6 0 1,0 -11.2,0M1904.4,887.5a5.6,5.6 0 1,0 11.2,0a5.6,5.6 0 1,0 -11.2,0M1905.1,909.1a5.6,5.6 0 1,0 11.2,0a5.6,5.6 0 1,0 -11.2,0M1905.8,912.2a5.6,5.6 0 1,0 11.2,0a5.6,5.6 0 1,0 -11.2,0M1906.5,902.7a5.6,5.6 0 1,0 11.2,0a5.6,5.6 0 1,0 -11.2,0M1907.1,897.3a5.6,5.6 0 1,0 11.2,0a5.6,5.6 0 1,0 -11.2,0M1907.8,890.9a5.6,5.6 0 1,0 11.2,0a5.6,5.6 0 1,0 -11.2,0M1908.5,872.6a5.6,5.6 0 1,0 11.2,0a5.6,5.6 0 1,0 -11.2,0M1909.2,892.3a5.6,5.6 0 1,0 11.2,0a5.6,5.6 0 1,0 -11.2,0M1909.9,886a5.6,5.6 0 1,0 11.2,0a5.6,5.6 0 1,0 -11.2,0M1910.5,907.4a5.6,5.6 0 1,0 11.2,0a5.6,5.6 0 1,0 -11.2,0M1911.2,890.7a5.6,5.6 0 1,0 11.2,0a5.6,5.6 0 1,0 -11.2,0M1911.9,899.2a5.6,5.6 0 1,0 11.2,0a5.6,5.6 0 1,0 -11.2,0M1912.6,905.9a5.6,5.6 0 1,0 11.2,0a5.6,5.6 0 1,0 -11.2,0M1913.2,898.4a5.6,5.6 0 1,0 11.2,0a5.6,5.6 0 1,0 -11.2,0M1913.9,898.4a5.6,5.6 0 1,0 11.2,0a5.6,5.6 0 1,0 -11.2,0M1914.6,895.8a5.6,5.6 0 1,0 11.2,0a5.6,5.6 0 1,0 -11.2,0M1915.3,894a5.6,5.6 0 1,0 11.2,0a5.6,5.6 0 1,0 -11.2,0M1915.9,907.7a5.6,5.6 0 1,0 11.2,0a5.6,5.6 0 1,0 -11.2,0M1916.6,911.8a5.6,5.6 0 1,0 11.2,0a5.6,5.6 0 1,0 -11.2,0M1917.3,889.7a5.6,5.6 0 1,0 11.2,0a5.6,5.6 0 1,0 -11.2,0M1918,920.6a5.6,5.6 0 1,0 11.2,0a5.6,5.6 0 1,0 -11.2,0M1918.7,906.3a5.6,5.6 0 1,0 11.2,0a5.6,5.6 0 1,0 -11.2,0M1919.3,877.6a5.6,5.6 0 1,0 11.2,0a5.6,5.6 0 1,0 -11.2,0M1920,924.5a5.6,5.6 0 1,0 11.2,0a5.6,5.6 0 1,0 -11.2,0M1920.7,910.7a5.6,5.6 0 1,0 11.2,0a5.6,5.6 0 1,0 -11.2,0M1921.4,892.8a5.6,5.6 0 1,0 11.2,0a5.6,5.6 0 1,0 -11.2,0M1922,921.5a5.6,5.6 0 1,0 11.2,0a5.6,5.6 0 1,0 -11.2,0M1922.7,870.8a5.6,5.6 0 1,0 11.2,0a5.6,5.6 0 1,0 -11.2,0M1923.4,922.8a5.6,5.6 0 1,0 11.2,0a5.6,5.6 0 1,0 -11.2,0M1924.1,879.8a5.6,5.6 0 1,0 11.2,0a5.6,5.6 0 1,0 -11.2,0M1924.8,879.4a5.6,5.6 0 1,0 11.2,0a5.6,5.6 0 1,0 -11.2,0M1925.4,889.4a5.6,5.6 0 1,0 11.2,0a5.6,5.6 0 1,0 -11.2,0M1926.1,905.9a5.6,5.6 0 1,0 11.2,0a5.6,5.6 0 1,0 -11.2,0M1926.8,896.3a5.6,5.6 0 1,0 11.2,0a5.6,5.6 0 1,0 -11.2,0M1927.5,911a5.6,5.6 0 1,0 11.2,0a5.6,5.6 0 1,0 -11.2,0M1928.1,888.2a5.6,5.6 0 1,0 11.2,0a5.6,5.6 0 1,0 -11.2,0M1928.8,915.5a5.6,5.6 0 1,0 11.2,0a5.6,5.6 0 1,0 -11.2,0M1929.5,905.1a5.6,5.6 0 1,0 11.2,0a5.6,5.6 0 1,0 -11.2,0M1930.2,889a5.6,5.6 0 1,0 11.2,0a5.6,5.6 0 1,0 -11.2,0M1930.8,918.8a5.6,5.6 0 1,0 11.2,0a5.6,5.6 0 1,0 -11.2,0M1931.5,906.8a5.6,5.6 0 1,0 11.2,0a5.6,5.6 0 1,0 -11.2,0M1932.2,897.2a5.6,5.6 0 1,0 11.2,0a5.6,5.6 0 1,0 -11.2,0M1932.9,918.2a5.6,5.6 0 1,0 11.2,0a5.6,5.6 0 1,0 -11.2,0M1933.6,884.9a5.6,5.6 0 1,0 11.2,0a5.6,5.6 0 1,0 -11.2,0M1934.2,897.3a5.6,5.6 0 1,0 11.2,0a5.6,5.6 0 1,0 -11.2,0M1934.9,922.8a5.6,5.6 0 1,0 11.2,0a5.6,5.6 0 1,0 -11.2,0M1935.6,904.8a5.6,5.6 0 1,0 11.2,0a5.6,5.6 0 1,0 -11.2,0M1936.3,913.1a5.6,5.6 0 1,0 11.2,0a5.6,5.6 0 1,0 -11.2,0M1936.9,909.1a5.6,5.6 0 1,0 11.2,0a5.6,5.6 0 1,0 -11.2,0M1937.6,899.5a5.6,5.6 0 1,0 11.2,0a5.6,5.6 0 1,0 -11.2,0M1938.3,911.2a5.6,5.6 0 1,0 11.2,0a5.6,5.6 0 1,0 -11.2,0M1939,889.5a5.6,5.6 0 1,0 11.2,0a5.6,5.6 0 1,0 -11.2,0M1939.6,913.6a5.6,5.6 0 1,0 11.2,0a5.6,5.6 0 1,0 -11.2,0M1940.3,891.4a5.6,5.6 0 1,0 11.2,0a5.6,5.6 0 1,0 -11.2,0M1941,903.8a5.6,5.6 0 1,0 11.2,0a5.6,5.6 0 1,0 -11.2,0M1941.7,889.1a5.6,5.6 0 1,0 11.2,0a5.6,5.6 0 1,0 -11.2,0M1942.4,908.6a5.6,5.6 0 1,0 11.2,0a5.6,5.6 0 1,0 -11.2,0M1943,909.1a5.6,5.6 0 1,0 11.2,0a5.6,5.6 0 1,0 -11.2,0M1943.7,919.1a5.6,5.6 0 1,0 11.2,0a5.6,5.6 0 1,0 -11.2,0M1944.4,896.7a5.6,5.6 0 1,0 11.2,0a5.6,5.6 0 1,0 -11.2,0M1945.1,892.7a5.6,5.6 0 1,0 11.2,0a5.6,5.6 0 1,0 -11.2,0M1945.7,876.5a5.6,5.6 0 1,0 11.2,0a5.6,5.6 0 1,0 -11.2,0M1946.4,883.8a5.6,5.6 0 1,0 11.2,0a5.6,5.6 0 1,0 -11.2,0M1947.1,898.5a5.6,5.6 0 1,0 11.2,0a5.6,5.6 0 1,0 -11.2,0M1947.8,905.7a5.6,5.6 0 1,0 11.2,0a5.6,5.6 0 1,0 -11.2,0M1948.4,898.7a5.6,5.6 0 1,0 11.2,0a5.6,5.6 0 1,0 -11.2,0M1949.1,905.6a5.6,5.6 0 1,0 11.2,0a5.6,5.6 0 1,0 -11.2,0M1949.8,886.1a5.6,5.6 0 1,0 11.2,0a5.6,5.6 0 1,0 -11.2,0M1950.5,891.6a5.6,5.6 0 1,0 11.2,0a5.6,5.6 0 1,0 -11.2,0M1951.2,913.6a5.6,5.6 0 1,0 11.2,0a5.6,5.6 0 1,0 -11.2,0M1951.8,912a5.6,5.6 0 1,0 11.2,0a5.6,5.6 0 1,0 -11.2,0M1952.5,884.7a5.6,5.6 0 1,0 11.2,0a5.6,5.6 0 1,0 -11.2,0M1953.2,900.4a5.6,5.6 0 1,0 11.2,0a5.6,5.6 0 1,0 -11.2,0M1953.9,909.1a5.6,5.6 0 1,0 11.2,0a5.6,5.6 0 1,0 -11.2,0M1954.5,890.5a5.6,5.6 0 1,0 11.2,0a5.6,5.6 0 1,0 -11.2,0M1955.2,849.5a5.6,5.6 0 1,0 11.2,0a5.6,5.6 0 1,0 -11.2,0M1955.9,906.7a5.6,5.6 0 1,0 11.2,0a5.6,5.6 0 1,0 -11.2,0M1956.6,909.6a5.6,5.6 0 1,0 11.2,0a5.6,5.6 0 1,0 -11.2,0M1957.2,922.8a5.6,5.6 0 1,0 11.2,0a5.6,5.6 0 1,0 -11.2,0M1957.9,893.2a5.6,5.6 0 1,0 11.2,0a5.6,5.6 0 1,0 -11.2,0M1958.6,923.4a5.6,5.6 0 1,0 11.2,0a5.6,5.6 0 1,0 -11.2,0M1959.3,915.3a5.6,5.6 0 1,0 11.2,0a5.6,5.6 0 1,0 -11.2,0M1960,916a5.6,5.6 0 1,0 11.2,0a5.6,5.6 0 1,0 -11.2,0M1960.6,892.6a5.6,5.6 0 1,0 11.2,0a5.6,5.6 0 1,0 -11.2,0M1961.3,904.1a5.6,5.6 0 1,0 11.2,0a5.6,5.6 0 1,0 -11.2,0M1962,903.6a5.6,5.6 0 1,0 11.2,0a5.6,5.6 0 1,0 -11.2,0M1962.7,922.1a5.6,5.6 0 1,0 11.2,0a5.6,5.6 0 1,0 -11.2,0M1963.3,906.8a5.6,5.6 0 1,0 11.2,0a5.6,5.6 0 1,0 -11.2,0M1964,925.7a5.6,5.6 0 1,0 11.2,0a5.6,5.6 0 1,0 -11.2,0M1964.7,898.9a5.6,5.6 0 1,0 11.2,0a5.6,5.6 0 1,0 -11.2,0M1965.4,894.7a5.6,5.6 0 1,0 11.2,0a5.6,5.6 0 1,0 -11.2,0M1966.1,899.8a5.6,5.6 0 1,0 11.2,0a5.6,5.6 0 1,0 -11.2,0M1966.7,871.4a5.6,5.6 0 1,0 11.2,0a5.6,5.6 0 1,0 -11.2,0M1967.4,890a5.6,5.6 0 1,0 11.2,0a5.6,5.6 0 1,0 -11.2,0M1968.1,888.1a5.6,5.6 0 1,0 11.2,0a5.6,5.6 0 1,0 -11.2,0M1968.8,894.3a5.6,5.6 0 1,0 11.2,0a5.6,5.6 0 1,0 -11.2,0M1969.4,895.9a5.6,5.6 0 1,0 11.2,0a5.6,5.6 0 1,0 -11.2,0M1970.1,870.1a5.6,5.6 0 1,0 11.2,0a5.6,5.6 0 1,0 -11.2,0M1970.8,864.4a5.6,5.6 0 1,0 11.2,0a5.6,5.6 0 1,0 -11.2,0M1971.5,906.3a5.6,5.6 0 1,0 11.2,0a5.6,5.6 0 1,0 -11.2,0M1972.1,858.5a5.6,5.6 0 1,0 11.2,0a5.6,5.6 0 1,0 -11.2,0M1972.8,865.4a5.6,5.6 0 1,0 11.2,0a5.6,5.6 0 1,0 -11.2,0M1973.5,851.7a5.6,5.6 0 1,0 11.2,0a5.6,5.6 0 1,0 -11.2,0M1974.2,854.4a5.6,5.6 0 1,0 11.2,0a5.6,5.6 0 1,0 -11.2,0M1974.9,883.2a5.6,5.6 0 1,0 11.2,0a5.6,5.6 0 1,0 -11.2,0M1975.5,876.3a5.6,5.6 0 1,0 11.2,0a5.6,5.6 0 1,0 -11.2,0M1976.2,814.5a5.6,5.6 0 1,0 11.2,0a5.6,5.6 0 1,0 -11.2,0M1976.9,831a5.6,5.6 0 1,0 11.2,0a5.6,5.6 0 1,0 -11.2,0M1977.6,865.8a5.6,5.6 0 1,0 11.2,0a5.6,5.6 0 1,0 -11.2,0M1978.2,813.8a5.6,5.6 0 1,0 11.2,0a5.6,5.6 0 1,0 -11.2,0M1978.9,822a5.6,5.6 0 1,0 11.2,0a5.6,5.6 0 1,0 -11.2,0M1979.6,843.3a5.6,5.6 0 1,0 11.2,0a5.6,5.6 0 1,0 -11.2,0M1980.3,835.2a5.6,5.6 0 1,0 11.2,0a5.6,5.6 0 1,0 -11.2,0M1980.9,827.4a5.6,5.6 0 1,0 11.2,0a5.6,5.6 0 1,0 -11.2,0M1981.6,767.3a5.6,5.6 0 1,0 11.2,0a5.6,5.6 0 1,0 -11.2,0M1982.3,768.9a5.6,5.6 0 1,0 11.2,0a5.6,5.6 0 1,0 -11.2,0M1983,767.2a5.6,5.6 0 1,0 11.2,0a5.6,5.6 0 1,0 -11.2,0M1983.7,739.9a5.6,5.6 0 1,0 11.2,0a5.6,5.6 0 1,0 -11.2,0M1984.3,718.9a5.6,5.6 0 1,0 11.2,0a5.6,5.6 0 1,0 -11.2,0M1985,778.4a5.6,5.6 0 1,0 11.2,0a5.6,5.6 0 1,0 -11.2,0M1985.7,735.5a5.6,5.6 0 1,0 11.2,0a5.6,5.6 0 1,0 -11.2,0M1986.4,748.6a5.6,5.6 0 1,0 11.2,0a5.6,5.6 0 1,0 -11.2,0M1987,759a5.6,5.6 0 1,0 11.2,0a5.6,5.6 0 1,0 -11.2,0M1987.7,732.3a5.6,5.6 0 1,0 11.2,0a5.6,5.6 0 1,0 -11.2,0M1988.4,712.9a5.6,5.6 0 1,0 11.2,0a5.6,5.6 0 1,0 -11.2,0M1989.1,713.5a5.6,5.6 0 1,0 11.2,0a5.6,5.6 0 1,0 -11.2,0M1989.7,691.4a5.6,5.6 0 1,0 11.2,0a5.6,5.6 0 1,0 -11.2,0M1990.4,722.1a5.6,5.6 0 1,0 11.2,0a5.6,5.6 0 1,0 -11.2,0M1991.1,676.9a5.6,5.6 0 1,0 11.2,0a5.6,5.6 0 1,0 -11.2,0M1991.8,748.3a5.6,5.6 0 1,0 11.2,0a5.6,5.6 0 1,0 -11.2,0M1992.5,689a5.6,5.6 0 1,0 11.2,0a5.6,5.6 0 1,0 -11.2,0M1993.1,709.9a5.6,5.6 0 1,0 11.2,0a5.6,5.6 0 1,0 -11.2,0M1993.8,702.4a5.6,5.6 0 1,0 11.2,0a5.6,5.6 0 1,0 -11.2,0M1994.5,714a5.6,5.6 0 1,0 11.2,0a5.6,5.6 0 1,0 -11.2,0M1995.2,773.9a5.6,5.6 0 1,0 11.2,0a5.6,5.6 0 1,0 -11.2,0M1995.8,715.9a5.6,5.6 0 1,0 11.2,0a5.6,5.6 0 1,0 -11.2,0M1996.5,780.4a5.6,5.6 0 1,0 11.2,0a5.6,5.6 0 1,0 -11.2,0M1997.2,800a5.6,5.6 0 1,0 11.2,0a5.6,5.6 0 1,0 -11.2,0M1997.9,790.6a5.6,5.6 0 1,0 11.2,0a5.6,5.6 0 1,0 -11.2,0M1998.6,782.1a5.6,5.6 0 1,0 11.2,0a5.6,5.6 0 1,0 -11.2,0M1999.2,768.1a5.6,5.6 0 1,0 11.2,0a5.6,5.6 0 1,0 -11.2,0M1999.9,780.9a5.6,5.6 0 1,0 11.2,0a5.6,5.6 0 1,0 -11.2,0M2000.6,808.4a5.6,5.6 0 1,0 11.2,0a5.6,5.6 0 1,0 -11.2,0M2001.3,793.3a5.6,5.6 0 1,0 11.2,0a5.6,5.6 0 1,0 -11.2,0M2001.9,824.3a5.6,5.6 0 1,0 11.2,0a5.6,5.6 0 1,0 -11.2,0M2002.6,810.4a5.6,5.6 0 1,0 11.2,0a5.6,5.6 0 1,0 -11.2,0M2003.3,869.8a5.6,5.6 0 1,0 11.2,0a5.6,5.6 0 1,0 -11.2,0M2004,879.7a5.6,5.6 0 1,0 11.2,0a5.6,5.6 0 1,0 -11.2,0M2004.6,834a5.6,5.6 0 1,0 11.2,0a5.6,5.6 0 1,0 -11.2,0M2005.3,887.4a5.6,5.6 0 1,0 11.2,0a5.6,5.6 0 1,0 -11.2,0M2006,870.4a5.6,5.6 0 1,0 11.2,0a5.6,5.6 0 1,0 -11.2,0M2006.7,871.7a5.6,5.6 0 1,0 11.2,0a5.6,5.6 0 1,0 -11.2,0M2007.4,881.6a5.6,5.6 0 1,0 11.2,0a5.6,5.6 0 1,0 -11.2,0M2008,881.9a5.6,5.6 0 1,0 11.2,0a5.6,5.6 0 1,0 -11.2,0M2008.7,851.5a5.6,5.6 0 1,0 11.2,0a5.6,5.6 0 1,0 -11.2,0M2009.4,915a5.6,5.6 0 1,0 11.2,0a5.6,5.6 0 1,0 -11.2,0M2010.1,868.8a5.6,5.6 0 1,0 11.2,0a5.6,5.6 0 1,0 -11.2,0M2010.7,859.6a5.6,5.6 0 1,0 11.2,0a5.6,5.6 0 1,0 -11.2,0M2011.4,889.7a5.6,5.6 0 1,0 11.2,0a5.6,5.6 0 1,0 -11.2,0M2012.1,890.2a5.6,5.6 0 1,0 11.2,0a5.6,5.6 0 1,0 -11.2,0M2012.8,877.1a5.6,5.6 0 1,0 11.2,0a5.6,5.6 0 1,0 -11.2,0M2013.4,862.4a5.6,5.6 0 1,0 11.2,0a5.6,5.6 0 1,0 -11.2,0M2014.1,910.1a5.6,5.6 0 1,0 11.2,0a5.6,5.6 0 1,0 -11.2,0M2014.8,892.4a5.6,5.6 0 1,0 11.2,0a5.6,5.6 0 1,0 -11.2,0M2015.5,898.3a5.6,5.6 0 1,0 11.2,0a5.6,5.6 0 1,0 -11.2,0M2016.2,888.5a5.6,5.6 0 1,0 11.2,0a5.6,5.6 0 1,0 -11.2,0M2016.8,893.1a5.6,5.6 0 1,0 11.2,0a5.6,5.6 0 1,0 -11.2,0M2017.5,883.7a5.6,5.6 0 1,0 11.2,0a5.6,5.6 0 1,0 -11.2,0M2018.2,899.8a5.6,5.6 0 1,0 11.2,0a5.6,5.6 0 1,0 -11.2,0M2018.9,894.1a5.6,5.6 0 1,0 11.2,0a5.6,5.6 0 1,0 -11.2,0M2019.5,905.5a5.6,5.6 0 1,0 11.2,0a5.6,5.6 0 1,0 -11.2,0M2020.2,906.6a5.6,5.6 0 1,0 11.2,0a5.6,5.6 0 1,0 -11.2,0M2020.9,900.1a5.6,5.6 0 1,0 11.2,0a5.6,5.6 0 1,0 -11.2,0M2021.6,898.3a5.6,5.6 0 1,0 11.2,0a5.6,5.6 0 1,0 -11.2,0M2022.2,910.2a5.6,5.6 0 1,0 11.2,0a5.6,5.6 0 1,0 -11.2,0M2022.9,872.4a5.6,5.6 0 1,0 11.2,0a5.6,5.6 0 1,0 -11.2,0M2023.6,896.9a5.6,5.6 0 1,0 11.2,0a5.6,5.6 0 1,0 -11.2,0M2024.3,915.1a5.6,5.6 0 1,0 11.2,0a5.6,5.6 0 1,0 -11.2,0M2025,882a5.6,5.6 0 1,0 11.2,0a5.6,5.6 0 1,0 -11.2,0M2025.6,908.2a5.6,5.6 0 1,0 11.2,0a5.6,5.6 0 1,0 -11.2,0M2026.3,889.1a5.6,5.6 0 1,0 11.2,0a5.6,5.6 0 1,0 -11.2,0M2027,893.8a5.6,5.6 0 1,0 11.2,0a5.6,5.6 0 1,0 -11.2,0M2027.7,890.4a5.6,5.6 0 1,0 11.2,0a5.6,5.6 0 1,0 -11.2,0M2028.3,892.3a5.6,5.6 0 1,0 11.2,0a5.6,5.6 0 1,0 -11.2,0M2029,903.5a5.6,5.6 0 1,0 11.2,0a5.6,5.6 0 1,0 -11.2,0M2029.7,896.2a5.6,5.6 0 1,0 11.2,0a5.6,5.6 0 1,0 -11.2,0M2030.4,870.1a5.6,5.6 0 1,0 11.2,0a5.6,5.6 0 1,0 -11.2,0M2031.1,922.6a5.6,5.6 0 1,0 11.2,0a5.6,5.6 0 1,0 -11.2,0M2031.7,892.2a5.6,5.6 0 1,0 11.2,0a5.6,5.6 0 1,0 -11.2,0M2032.4,887.4a5.6,5.6 0 1,0 11.2,0a5.6,5.6 0 1,0 -11.2,0M2033.1,908.5a5.6,5.6 0 1,0 11.2,0a5.6,5.6 0 1,0 -11.2,0M2033.8,913.9a5.6,5.6 0 1,0 11.2,0a5.6,5.6 0 1,0 -11.2,0M2034.4,868.9a5.6,5.6 0 1,0 11.2,0a5.6,5.6 0 1,0 -11.2,0M2035.1,902.1a5.6,5.6 0 1,0 11.2,0a5.6,5.6 0 1,0 -11.2,0M2035.8,867.8a5.6,5.6 0 1,0 11.2,0a5.6,5.6 0 1,0 -11.2,0M2036.5,885.2a5.6,5.6 0 1,0 11.2,0a5.6,5.6 0 1,0 -11.2,0M2037.1,891.8a5.6,5.6 0 1,0 11.2,0a5.6,5.6 0 1,0 -11.2,0M2037.8,887.1a5.6,5.6 0 1,0 11.2,0a5.6,5.6 0 1,0 -11.2,0M2038.5,885.9a5.6,5.6 0 1,0 11.2,0a5.6,5.6 0 1,0 -11.2,0M2039.2,879.6a5.6,5.6 0 1,0 11.2,0a5.6,5.6 0 1,0 -11.2,0M2039.9,890.5a5.6,5.6 0 1,0 11.2,0a5.6,5.6 0 1,0 -11.2,0M2040.5,892.7a5.6,5.6 0 1,0 11.2,0a5.6,5.6 0 1,0 -11.2,0M2041.2,889.7a5.6,5.6 0 1,0 11.2,0a5.6,5.6 0 1,0 -11.2,0M2041.9,873.9a5.6,5.6 0 1,0 11.2,0a5.6,5.6 0 1,0 -11.2,0M2042.6,881.9a5.6,5.6 0 1,0 11.2,0a5.6,5.6 0 1,0 -11.2,0M2043.2,907.8a5.6,5.6 0 1,0 11.2,0a5.6,5.6 0 1,0 -11.2,0M2043.9,903.9a5.6,5.6 0 1,0 11.2,0a5.6,5.6 0 1,0 -11.2,0M2044.6,891.5a5.6,5.6 0 1,0 11.2,0a5.6,5.6 0 1,0 -11.2,0M2045.3,902.7a5.6,5.6 0 1,0 11.2,0a5.6,5.6 0 1,0 -11.2,0M2045.9,896.7a5.6,5.6 0 1,0 11.2,0a5.6,5.6 0 1,0 -11.2,0M2046.6,904.9a5.6,5.6 0 1,0 11.2,0a5.6,5.6 0 1,0 -11.2,0M2047.3,896.3a5.6,5.6 0 1,0 11.2,0a5.6,5.6 0 1,0 -11.2,0M2048,888.1a5.6,5.6 0 1,0 11.2,0a5.6,5.6 0 1,0 -11.2,0M2048.7,881.5a5.6,5.6 0 1,0 11.2,0a5.6,5.6 0 1,0 -11.2,0M2049.3,895.8a5.6,5.6 0 1,0 11.2,0a5.6,5.6 0 1,0 -11.2,0M2050,866.9a5.6,5.6 0 1,0 11.2,0a5.6,5.6 0 1,0 -11.2,0M2050.7,892.8a5.6,5.6 0 1,0 11.2,0a5.6,5.6 0 1,0 -11.2,0M2051.4,864.8a5.6,5.6 0 1,0 11.2,0a5.6,5.6 0 1,0 -11.2,0M2052,879.4a5.6,5.6 0 1,0 11.2,0a5.6,5.6 0 1,0 -11.2,0M2052.7,887.4a5.6,5.6 0 1,0 11.2,0a5.6,5.6 0 1,0 -11.2,0M2053.4,902.2a5.6,5.6 0 1,0 11.2,0a5.6,5.6 0 1,0 -11.2,0M2054.1,926.1a5.6,5.6 0 1,0 11.2,0a5.6,5.6 0 1,0 -11.2,0M2054.7,896.7a5.6,5.6 0 1,0 11.2,0a5.6,5.6 0 1,0 -11.2,0M2055.4,889.7a5.6,5.6 0 1,0 11.2,0a5.6,5.6 0 1,0 -11.2,0M2056.1,866.2a5.6,5.6 0 1,0 11.2,0a5.6,5.6 0 1,0 -11.2,0M2056.8,912.3a5.6,5.6 0 1,0 11.2,0a5.6,5.6 0 1,0 -11.2,0M2057.5,868.5a5.6,5.6 0 1,0 11.2,0a5.6,5.6 0 1,0 -11.2,0M2058.1,899.2a5.6,5.6 0 1,0 11.2,0a5.6,5.6 0 1,0 -11.2,0M2058.8,886.7a5.6,5.6 0 1,0 11.2,0a5.6,5.6 0 1,0 -11.2,0M2059.5,924.9a5.6,5.6 0 1,0 11.2,0a5.6,5.6 0 1,0 -11.2,0M2060.2,890.5a5.6,5.6 0 1,0 11.2,0a5.6,5.6 0 1,0 -11.2,0M2060.8,897.6a5.6,5.6 0 1,0 11.2,0a5.6,5.6 0 1,0 -11.2,0M2061.5,884.4a5.6,5.6 0 1,0 11.2,0a5.6,5.6 0 1,0 -11.2,0M2062.2,893.6a5.6,5.6 0 1,0 11.2,0a5.6,5.6 0 1,0 -11.2,0M2062.9,911.7a5.6,5.6 0 1,0 11.2,0a5.6,5.6 0 1,0 -11.2,0M2063.5,884a5.6,5.6 0 1,0 11.2,0a5.6,5.6 0 1,0 -11.2,0M2064.2,885.7a5.6,5.6 0 1,0 11.2,0a5.6,5.6 0 1,0 -11.2,0M2064.9,884.6a5.6,5.6 0 1,0 11.2,0a5.6,5.6 0 1,0 -11.2,0M2065.6,879.4a5.6,5.6 0 1,0 11.2,0a5.6,5.6 0 1,0 -11.2,0M2066.3,879a5.6,5.6 0 1,0 11.2,0a5.6,5.6 0 1,0 -11.2,0M2066.9,895.5a5.6,5.6 0 1,0 11.2,0a5.6,5.6 0 1,0 -11.2,0M2067.6,915a5.6,5.6 0 1,0 11.2,0a5.6,5.6 0 1,0 -11.2,0M2068.3,916.2a5.6,5.6 0 1,0 11.2,0a5.6,5.6 0 1,0 -11.2,0M2069,877.1a5.6,5.6 0 1,0 11.2,0a5.6,5.6 0 1,0 -11.2,0M2069.6,883.4a5.6,5.6 0 1,0 11.2,0a5.6,5.6 0 1,0 -11.2,0M2070.3,892.1a5.6,5.6 0 1,0 11.2,0a5.6,5.6 0 1,0 -11.2,0M2071,900.3a5.6,5.6 0 1,0 11.2,0a5.6,5.6 0 1,0 -11.2,0M2071.7,895.1a5.6,5.6 0 1,0 11.2,0a5.6,5.6 0 1,0 -11.2,0M2072.4,896.4a5.6,5.6 0 1,0 11.2,0a5.6,5.6 0 1,0 -11.2,0M2073,902.2a5.6,5.6 0 1,0 11.2,0a5.6,5.6 0 1,0 -11.2,0M2073.7,905.5a5.6,5.6 0 1,0 11.2,0a5.6,5.6 0 1,0 -11.2,0M2074.4,866.1a5.6,5.6 0 1,0 11.2,0a5.6,5.6 0 1,0 -11.2,0M2075.1,890.7a5.6,5.6 0 1,0 11.2,0a5.6,5.6 0 1,0 -11.2,0M2075.7,903a5.6,5.6 0 1,0 11.2,0a5.6,5.6 0 1,0 -11.2,0M2076.4,913.7a5.6,5.6 0 1,0 11.2,0a5.6,5.6 0 1,0 -11.2,0M2077.1,907a5.6,5.6 0 1,0 11.2,0a5.6,5.6 0 1,0 -11.2,0M2077.8,888.1a5.6,5.6 0 1,0 11.2,0a5.6,5.6 0 1,0 -11.2,0M2078.4,885.9a5.6,5.6 0 1,0 11.2,0a5.6,5.6 0 1,0 -11.2,0M2079.1,896.8a5.6,5.6 0 1,0 11.2,0a5.6,5.6 0 1,0 -11.2,0M2079.8,893.5a5.6,5.6 0 1,0 11.2,0a5.6,5.6 0 1,0 -11.2,0M2080.5,899.2a5.6,5.6 0 1,0 11.2,0a5.6,5.6 0 1,0 -11.2,0M2081.2,911.3a5.6,5.6 0 1,0 11.2,0a5.6,5.6 0 1,0 -11.2,0M2081.8,879.6a5.6,5.6 0 1,0 11.2,0a5.6,5.6 0 1,0 -11.2,0M2082.5,893.1a5.6,5.6 0 1,0 11.2,0a5.6,5.6 0 1,0 -11.2,0M2083.2,869.1a5.6,5.6 0 1,0 11.2,0a5.6,5.6 0 1,0 -11.2,0M2083.9,904.3a5.6,5.6 0 1,0 11.2,0a5.6,5.6 0 1,0 -11.2,0M2084.5,896.3a5.6,5.6 0 1,0 11.2,0a5.6,5.6 0 1,0 -11.2,0M2085.2,883.2a5.6,5.6 0 1,0 11.2,0a5.6,5.6 0 1,0 -11.2,0M2085.9,899.7a5.6,5.6 0 1,0 11.2,0a5.6,5.6 0 1,0 -11.2,0M2086.6,916.5a5.6,5.6 0 1,0 11.2,0a5.6,5.6 0 1,0 -11.2,0M2087.2,911.4a5.6,5.6 0 1,0 11.2,0a5.6,5.6 0 1,0 -11.2,0M2087.9,895.3a5.6,5.6 0 1,0 11.2,0a5.6,5.6 0 1,0 -11.2,0M2088.6,889.5a5.6,5.6 0 1,0 11.2,0a5.6,5.6 0 1,0 -11.2,0M2089.3,895.8a5.6,5.6 0 1,0 11.2,0a5.6,5.6 0 1,0 -11.2,0M2090,881.7a5.6,5.6 0 1,0 11.2,0a5.6,5.6 0 1,0 -11.2,0M2090.6,882.9a5.6,5.6 0 1,0 11.2,0a5.6,5.6 0 1,0 -11.2,0M2091.3,893.3a5.6,5.6 0 1,0 11.2,0a5.6,5.6 0 1,0 -11.2,0M2092,898.2a5.6,5.6 0 1,0 11.2,0a5.6,5.6 0 1,0 -11.2,0M2092.7,900.3a5.6,5.6 0 1,0 11.2,0a5.6,5.6 0 1,0 -11.2,0M2093.3,886.8a5.6,5.6 0 1,0 11.2,0a5.6,5.6 0 1,0 -11.2,0M2094,882.1a5.6,5.6 0 1,0 11.2,0a5.6,5.6 0 1,0 -11.2,0M2094.7,894.7a5.6,5.6 0 1,0 11.2,0a5.6,5.6 0 1,0 -11.2,0M2095.4,890.5a5.6,5.6 0 1,0 11.2,0a5.6,5.6 0 1,0 -11.2,0M2096,902.3a5.6,5.6 0 1,0 11.2,0a5.6,5.6 0 1,0 -11.2,0M2096.7,918a5.6,5.6 0 1,0 11.2,0a5.6,5.6 0 1,0 -11.2,0M2097.4,910.7a5.6,5.6 0 1,0 11.2,0a5.6,5.6 0 1,0 -11.2,0M2098.1,884a5.6,5.6 0 1,0 11.2,0a5.6,5.6 0 1,0 -11.2,0M2098.8,888.8a5.6,5.6 0 1,0 11.2,0a5.6,5.6 0 1,0 -11.2,0M2099.4,874a5.6,5.6 0 1,0 11.2,0a5.6,5.6 0 1,0 -11.2,0M2100.1,896.1a5.6,5.6 0 1,0 11.2,0a5.6,5.6 0 1,0 -11.2,0M2100.8,886.2a5.6,5.6 0 1,0 11.2,0a5.6,5.6 0 1,0 -11.2,0M2101.5,880.8a5.6,5.6 0 1,0 11.2,0a5.6,5.6 0 1,0 -11.2,0M2102.1,883.5a5.6,5.6 0 1,0 11.2,0a5.6,5.6 0 1,0 -11.2,0M2102.8,903a5.6,5.6 0 1,0 11.2,0a5.6,5.6 0 1,0 -11.2,0M2103.5,897.6a5.6,5.6 0 1,0 11.2,0a5.6,5.6 0 1,0 -11.2,0M2104.2,894.1a5.6,5.6 0 1,0 11.2,0a5.6,5.6 0 1,0 -11.2,0M2104.9,910.5a5.6,5.6 0 1,0 11.2,0a5.6,5.6 0 1,0 -11.2,0M2105.5,891.7a5.6,5.6 0 1,0 11.2,0a5.6,5.6 0 1,0 -11.2,0M2106.2,885.1a5.6,5.6 0 1,0 11.2,0a5.6,5.6 0 1,0 -11.2,0M2106.9,903.9a5.6,5.6 0 1,0 11.2,0a5.6,5.6 0 1,0 -11.2,0M2107.6,867.9a5.6,5.6 0 1,0 11.2,0a5.6,5.6 0 1,0 -11.2,0M2108.2,899.2a5.6,5.6 0 1,0 11.2,0a5.6,5.6 0 1,0 -11.2,0M2108.9,898.8a5.6,5.6 0 1,0 11.2,0a5.6,5.6 0 1,0 -11.2,0M2109.6,900.4a5.6,5.6 0 1,0 11.2,0a5.6,5.6 0 1,0 -11.2,0M2110.3,908.1a5.6,5.6 0 1,0 11.2,0a5.6,5.6 0 1,0 -11.2,0M2110.9,893.5a5.6,5.6 0 1,0 11.2,0a5.6,5.6 0 1,0 -11.2,0M2111.6,897.2a5.6,5.6 0 1,0 11.2,0a5.6,5.6 0 1,0 -11.2,0M2112.3,872.3a5.6,5.6 0 1,0 11.2,0a5.6,5.6 0 1,0 -11.2,0M2113,887.1a5.6,5.6 0 1,0 11.2,0a5.6,5.6 0 1,0 -11.2,0M2113.7,888.9a5.6,5.6 0 1,0 11.2,0a5.6,5.6 0 1,0 -11.2,0M2114.3,900.4a5.6,5.6 0 1,0 11.2,0a5.6,5.6 0 1,0 -11.2,0M2115,917.8a5.6,5.6 0 1,0 11.2,0a5.6,5.6 0 1,0 -11.2,0M2115.7,900.5a5.6,5.6 0 1,0 11.2,0a5.6,5.6 0 1,0 -11.2,0M2116.4,909a5.6,5.6 0 1,0 11.2,0a5.6,5.6 0 1,0 -11.2,0M2117,881.9a5.6,5.6 0 1,0 11.2,0a5.6,5.6 0 1,0 -11.2,0M2117.7,895.6a5.6,5.6 0 1,0 11.2,0a5.6,5.6 0 1,0 -11.2,0M2118.4,873.2a5.6,5.6 0 1,0 11.2,0a5.6,5.6 0 1,0 -11.2,0M2119.1,886.9a5.6,5.6 0 1,0 11.2,0a5.6,5.6 0 1,0 -11.2,0M2119.7,886.7a5.6,5.6 0 1,0 11.2,0a5.6,5.6 0 1,0 -11.2,0M2120.4,895.8a5.6,5.6 0 1,0 11.2,0a5.6,5.6 0 1,0 -11.2,0M2121.1,894.2a5.6,5.6 0 1,0 11.2,0a5.6,5.6 0 1,0 -11.2,0M2121.8,885.6a5.6,5.6 0 1,0 11.2,0a5.6,5.6 0 1,0 -11.2,0M2122.5,882.2a5.6,5.6 0 1,0 11.2,0a5.6,5.6 0 1,0 -11.2,0M2123.1,905.4a5.6,5.6 0 1,0 11.2,0a5.6,5.6 0 1,0 -11.2,0M2123.8,889.9a5.6,5.6 0 1,0 11.2,0a5.6,5.6 0 1,0 -11.2,0M2124.5,870.5a5.6,5.6 0 1,0 11.2,0a5.6,5.6 0 1,0 -11.2,0M2125.2,899.8a5.6,5.6 0 1,0 11.2,0a5.6,5.6 0 1,0 -11.2,0M2125.8,900.2a5.6,5.6 0 1,0 11.2,0a5.6,5.6 0 1,0 -11.2,0M2126.5,903.7a5.6,5.6 0 1,0 11.2,0a5.6,5.6 0 1,0 -11.2,0M2127.2,914.3a5.6,5.6 0 1,0 11.2,0a5.6,5.6 0 1,0 -11.2,0M2127.9,879a5.6,5.6 0 1,0 11.2,0a5.6,5.6 0 1,0 -11.2,0M2128.5,895.5a5.6,5.6 0 1,0 11.2,0a5.6,5.6 0 1,0 -11.2,0M2129.2,893.4a5.6,5.6 0 1,0 11.2,0a5.6,5.6 0 1,0 -11.2,0M2129.9,873a5.6,5.6 0 1,0 11.2,0a5.6,5.6 0 1,0 -11.2,0M2130.6,869.1a5.6,5.6 0 1,0 11.2,0a5.6,5.6 0 1,0 -11.2,0M2131.3,906a5.6,5.6 0 1,0 11.2,0a5.6,5.6 0 1,0 -11.2,0M2131.9,879.8a5.6,5.6 0 1,0 11.2,0a5.6,5.6 0 1,0 -11.2,0M2132.6,886.4a5.6,5.6 0 1,0 11.2,0a5.6,5.6 0 1,0 -11.2,0M2133.3,890.5a5.6,5.6 0 1,0 11.2,0a5.6,5.6 0 1,0 -11.2,0M2134,890.6a5.6,5.6 0 1,0 11.2,0a5.6,5.6 0 1,0 -11.2,0M2134.6,898.2a5.6,5.6 0 1,0 11.2,0a5.6,5.6 0 1,0 -11.2,0M2135.3,874.3a5.6,5.6 0 1,0 11.2,0a5.6,5.6 0 1,0 -11.2,0M2136,885.1a5.6,5.6 0 1,0 11.2,0a5.6,5.6 0 1,0 -11.2,0M2136.7,889.1a5.6,5.6 0 1,0 11.2,0a5.6,5.6 0 1,0 -11.2,0M2137.4,877.6a5.6,5.6 0 1,0 11.2,0a5.6,5.6 0 1,0 -11.2,0M2138,883.4a5.6,5.6 0 1,0 11.2,0a5.6,5.6 0 1,0 -11.2,0M2138.7,890.5a5.6,5.6 0 1,0 11.2,0a5.6,5.6 0 1,0 -11.2,0M2139.4,893.1a5.6,5.6 0 1,0 11.2,0a5.6,5.6 0 1,0 -11.2,0M2140.1,871.7a5.6,5.6 0 1,0 11.2,0a5.6,5.6 0 1,0 -11.2,0M2140.7,886.2a5.6,5.6 0 1,0 11.2,0a5.6,5.6 0 1,0 -11.2,0M2141.4,894.7a5.6,5.6 0 1,0 11.2,0a5.6,5.6 0 1,0 -11.2,0M2142.1,906a5.6,5.6 0 1,0 11.2,0a5.6,5.6 0 1,0 -11.2,0M2142.8,900a5.6,5.6 0 1,0 11.2,0a5.6,5.6 0 1,0 -11.2,0M2143.4,910.8a5.6,5.6 0 1,0 11.2,0a5.6,5.6 0 1,0 -11.2,0M2144.1,895.7a5.6,5.6 0 1,0 11.2,0a5.6,5.6 0 1,0 -11.2,0M2144.8,891.9a5.6,5.6 0 1,0 11.2,0a5.6,5.6 0 1,0 -11.2,0M2145.5,920.9a5.6,5.6 0 1,0 11.2,0a5.6,5.6 0 1,0 -11.2,0M2146.2,892.9a5.6,5.6 0 1,0 11.2,0a5.6,5.6 0 1,0 -11.2,0M2146.8,885.1a5.6,5.6 0 1,0 11.2,0a5.6,5.6 0 1,0 -11.2,0M2147.5,892.7a5.6,5.6 0 1,0 11.2,0a5.6,5.6 0 1,0 -11.2,0M2148.2,909.2a5.6,5.6 0 1,0 11.2,0a5.6,5.6 0 1,0 -11.2,0M2148.9,879.5a5.6,5.6 0 1,0 11.2,0a5.6,5.6 0 1,0 -11.2,0M2149.5,904.6a5.6,5.6 0 1,0 11.2,0a5.6,5.6 0 1,0 -11.2,0M2150.2,909.3a5.6,5.6 0 1,0 11.2,0a5.6,5.6 0 1,0 -11.2,0M2150.9,907.5a5.6,5.6 0 1,0 11.2,0a5.6,5.6 0 1,0 -11.2,0M2151.6,893.7a5.6,5.6 0 1,0 11.2,0a5.6,5.6 0 1,0 -11.2,0M2152.2,881.1a5.6,5.6 0 1,0 11.2,0a5.6,5.6 0 1,0 -11.2,0M2152.9,879.7a5.6,5.6 0 1,0 11.2,0a5.6,5.6 0 1,0 -11.2,0M2153.6,893.6a5.6,5.6 0 1,0 11.2,0a5.6,5.6 0 1,0 -11.2,0M2154.3,910.9a5.6,5.6 0 1,0 11.2,0a5.6,5.6 0 1,0 -11.2,0M2155,901a5.6,5.6 0 1,0 11.2,0a5.6,5.6 0 1,0 -11.2,0M2155.6,904.6a5.6,5.6 0 1,0 11.2,0a5.6,5.6 0 1,0 -11.2,0M2156.3,895.6a5.6,5.6 0 1,0 11.2,0a5.6,5.6 0 1,0 -11.2,0M2157,918.4a5.6,5.6 0 1,0 11.2,0a5.6,5.6 0 1,0 -11.2,0M2157.7,893.8a5.6,5.6 0 1,0 11.2,0a5.6,5.6 0 1,0 -11.2,0M2158.3,887.2a5.6,5.6 0 1,0 11.2,0a5.6,5.6 0 1,0 -11.2,0M2159,896.3a5.6,5.6 0 1,0 11.2,0a5.6,5.6 0 1,0 -11.2,0M2159.7,885.4a5.6,5.6 0 1,0 11.2,0a5.6,5.6 0 1,0 -11.2,0M2160.4,904.8a5.6,5.6 0 1,0 11.2,0a5.6,5.6 0 1,0 -11.2,0M2161,912.6a5.6,5.6 0 1,0 11.2,0a5.6,5.6 0 1,0 -11.2,0M2161.7,902.5a5.6,5.6 0 1,0 11.2,0a5.6,5.6 0 1,0 -11.2,0M2162.4,879.1a5.6,5.6 0 1,0 11.2,0a5.6,5.6 0 1,0 -11.2,0M2163.1,881.6a5.6,5.6 0 1,0 11.2,0a5.6,5.6 0 1,0 -11.2,0M2163.8,900.1a5.6,5.6 0 1,0 11.2,0a5.6,5.6 0 1,0 -11.2,0M2164.4,874.8a5.6,5.6 0 1,0 11.2,0a5.6,5.6 0 1,0 -11.2,0M2165.1,896a5.6,5.6 0 1,0 11.2,0a5.6,5.6 0 1,0 -11.2,0M2165.8,871.6a5.6,5.6 0 1,0 11.2,0a5.6,5.6 0 1,0 -11.2,0M2166.5,886.7a5.6,5.6 0 1,0 11.2,0a5.6,5.6 0 1,0 -11.2,0M2167.1,900.6a5.6,5.6 0 1,0 11.2,0a5.6,5.6 0 1,0 -11.2,0M2167.8,884.4a5.6,5.6 0 1,0 11.2,0a5.6,5.6 0 1,0 -11.2,0M2168.5,904a5.6,5.6 0 1,0 11.2,0a5.6,5.6 0 1,0 -11.2,0M2169.2,903.6a5.6,5.6 0 1,0 11.2,0a5.6,5.6 0 1,0 -11.2,0M2169.8,911a5.6,5.6 0 1,0 11.2,0a5.6,5.6 0 1,0 -11.2,0M2170.5,888.4a5.6,5.6 0 1,0 11.2,0a5.6,5.6 0 1,0 -11.2,0M2171.2,893.7a5.6,5.6 0 1,0 11.2,0a5.6,5.6 0 1,0 -11.2,0M2171.9,895.1a5.6,5.6 0 1,0 11.2,0a5.6,5.6 0 1,0 -11.2,0M2172.6,900.4a5.6,5.6 0 1,0 11.2,0a5.6,5.6 0 1,0 -11.2,0M2173.2,873.3a5.6,5.6 0 1,0 11.2,0a5.6,5.6 0 1,0 -11.2,0M2173.9,896.2a5.6,5.6 0 1,0 11.2,0a5.6,5.6 0 1,0 -11.2,0M2174.6,900.6a5.6,5.6 0 1,0 11.2,0a5.6,5.6 0 1,0 -11.2,0M2175.3,874.5a5.6,5.6 0 1,0 11.2,0a5.6,5.6 0 1,0 -11.2,0M2175.9,873.1a5.6,5.6 0 1,0 11.2,0a5.6,5.6 0 1,0 -11.2,0M2176.6,889a5.6,5.6 0 1,0 11.2,0a5.6,5.6 0 1,0 -11.2,0M2177.3,918.2a5.6,5.6 0 1,0 11.2,0a5.6,5.6 0 1,0 -11.2,0M2178,900.8a5.6,5.6 0 1,0 11.2,0a5.6,5.6 0 1,0 -11.2,0M2178.7,881.6a5.6,5.6 0 1,0 11.2,0a5.6,5.6 0 1,0 -11.2,0M2179.3,890.1a5.6,5.6 0 1,0 11.2,0a5.6,5.6 0 1,0 -11.2,0M2180,869.8a5.6,5.6 0 1,0 11.2,0a5.6,5.6 0 1,0 -11.2,0M2180.7,910.8a5.6,5.6 0 1,0 11.2,0a5.6,5.6 0 1,0 -11.2,0M2181.4,883.9a5.6,5.6 0 1,0 11.2,0a5.6,5.6 0 1,0 -11.2,0M2182,902.6a5.6,5.6 0 1,0 11.2,0a5.6,5.6 0 1,0 -11.2,0M2182.7,874.1a5.6,5.6 0 1,0 11.2,0a5.6,5.6 0 1,0 -11.2,0M2183.4,890.6a5.6,5.6 0 1,0 11.2,0a5.6,5.6 0 1,0 -11.2,0M2184.1,875.8a5.6,5.6 0 1,0 11.2,0a5.6,5.6 0 1,0 -11.2,0M2184.7,899.5a5.6,5.6 0 1,0 11.2,0a5.6,5.6 0 1,0 -11.2,0M2185.4,910.9a5.6,5.6 0 1,0 11.2,0a5.6,5.6 0 1,0 -11.2,0M2186.1,908a5.6,5.6 0 1,0 11.2,0a5.6,5.6 0 1,0 -11.2,0M2186.8,901.9a5.6,5.6 0 1,0 11.2,0a5.6,5.6 0 1,0 -11.2,0M2187.5,905.7a5.6,5.6 0 1,0 11.2,0a5.6,5.6 0 1,0 -11.2,0M2188.1,872.8a5.6,5.6 0 1,0 11.2,0a5.6,5.6 0 1,0 -11.2,0M2188.8,871.2a5.6,5.6 0 1,0 11.2,0a5.6,5.6 0 1,0 -11.2,0M2189.5,886.6a5.6,5.6 0 1,0 11.2,0a5.6,5.6 0 1,0 -11.2,0M2190.2,905.6a5.6,5.6 0 1,0 11.2,0a5.6,5.6 0 1,0 -11.2,0M2190.8,894.4a5.6,5.6 0 1,0 11.2,0a5.6,5.6 0 1,0 -11.2,0M2191.5,903a5.6,5.6 0 1,0 11.2,0a5.6,5.6 0 1,0 -11.2,0M2192.2,872a5.6,5.6 0 1,0 11.2,0a5.6,5.6 0 1,0 -11.2,0M2192.9,885.2a5.6,5.6 0 1,0 11.2,0a5.6,5.6 0 1,0 -11.2,0M2193.5,883.2a5.6,5.6 0 1,0 11.2,0a5.6,5.6 0 1,0 -11.2,0M2194.2,896.3a5.6,5.6 0 1,0 11.2,0a5.6,5.6 0 1,0 -11.2,0M2194.9,919.4a5.6,5.6 0 1,0 11.2,0a5.6,5.6 0 1,0 -11.2,0M2195.6,903.7a5.6,5.6 0 1,0 11.2,0a5.6,5.6 0 1,0 -11.2,0M2196.3,909.3a5.6,5.6 0 1,0 11.2,0a5.6,5.6 0 1,0 -11.2,0M2196.9,887.3a5.6,5.6 0 1,0 11.2,0a5.6,5.6 0 1,0 -11.2,0M2197.6,888.6a5.6,5.6 0 1,0 11.2,0a5.6,5.6 0 1,0 -11.2,0M2198.3,901.3a5.6,5.6 0 1,0 11.2,0a5.6,5.6 0 1,0 -11.2,0M2199,896.5a5.6,5.6 0 1,0 11.2,0a5.6,5.6 0 1,0 -11.2,0M2199.6,870.8a5.6,5.6 0 1,0 11.2,0a5.6,5.6 0 1,0 -11.2,0M2200.3,906.7a5.6,5.6 0 1,0 11.2,0a5.6,5.6 0 1,0 -11.2,0M2201,907.1a5.6,5.6 0 1,0 11.2,0a5.6,5.6 0 1,0 -11.2,0M2201.7,895.9a5.6,5.6 0 1,0 11.2,0a5.6,5.6 0 1,0 -11.2,0M2202.3,899.9a5.6,5.6 0 1,0 11.2,0a5.6,5.6 0 1,0 -11.2,0M2203,896.6a5.6,5.6 0 1,0 11.2,0a5.6,5.6 0 1,0 -11.2,0M2203.7,884.2a5.6,5.6 0 1,0 11.2,0a5.6,5.6 0 1,0 -11.2,0M2204.4,868.5a5.6,5.6 0 1,0 11.2,0a5.6,5.6 0 1,0 -11.2,0M2205.1,918.7a5.6,5.6 0 1,0 11.2,0a5.6,5.6 0 1,0 -11.2,0M2205.7,894.9a5.6,5.6 0 1,0 11.2,0a5.6,5.6 0 1,0 -11.2,0M2206.4,892.3a5.6,5.6 0 1,0 11.2,0a5.6,5.6 0 1,0 -11.2,0M2207.1,891.5a5.6,5.6 0 1,0 11.2,0a5.6,5.6 0 1,0 -11.2,0M2207.8,893.3a5.6,5.6 0 1,0 11.2,0a5.6,5.6 0 1,0 -11.2,0M2208.4,896.2a5.6,5.6 0 1,0 11.2,0a5.6,5.6 0 1,0 -11.2,0M2209.1,877.7a5.6,5.6 0 1,0 11.2,0a5.6,5.6 0 1,0 -11.2,0M2209.8,900a5.6,5.6 0 1,0 11.2,0a5.6,5.6 0 1,0 -11.2,0M2210.5,895.7a5.6,5.6 0 1,0 11.2,0a5.6,5.6 0 1,0 -11.2,0M2211.2,891.6a5.6,5.6 0 1,0 11.2,0a5.6,5.6 0 1,0 -11.2,0M2211.8,887.1a5.6,5.6 0 1,0 11.2,0a5.6,5.6 0 1,0 -11.2,0M2212.5,891.1a5.6,5.6 0 1,0 11.2,0a5.6,5.6 0 1,0 -11.2,0M2213.2,872.9a5.6,5.6 0 1,0 11.2,0a5.6,5.6 0 1,0 -11.2,0M2213.9,888.9a5.6,5.6 0 1,0 11.2,0a5.6,5.6 0 1,0 -11.2,0M2251.8,858.3a5.6,5.6 0 1,0 11.2,0a5.6,5.6 0 1,0 -11.2,0M2252.5,837.8a5.6,5.6 0 1,0 11.2,0a5.6,5.6 0 1,0 -11.2,0M2253.1,852.2a5.6,5.6 0 1,0 11.2,0a5.6,5.6 0 1,0 -11.2,0M2253.8,835.6a5.6,5.6 0 1,0 11.2,0a5.6,5.6 0 1,0 -11.2,0M2254.5,859.1a5.6,5.6 0 1,0 11.2,0a5.6,5.6 0 1,0 -11.2,0M2255.2,843.2a5.6,5.6 0 1,0 11.2,0a5.6,5.6 0 1,0 -11.2,0M2255.8,883.1a5.6,5.6 0 1,0 11.2,0a5.6,5.6 0 1,0 -11.2,0M2256.5,858.9a5.6,5.6 0 1,0 11.2,0a5.6,5.6 0 1,0 -11.2,0M2257.2,877a5.6,5.6 0 1,0 11.2,0a5.6,5.6 0 1,0 -11.2,0M2257.9,872.4a5.6,5.6 0 1,0 11.2,0a5.6,5.6 0 1,0 -11.2,0M2258.5,874.3a5.6,5.6 0 1,0 11.2,0a5.6,5.6 0 1,0 -11.2,0M2259.2,859a5.6,5.6 0 1,0 11.2,0a5.6,5.6 0 1,0 -11.2,0M2259.9,907.7a5.6,5.6 0 1,0 11.2,0a5.6,5.6 0 1,0 -11.2,0M2260.6,872.2a5.6,5.6 0 1,0 11.2,0a5.6,5.6 0 1,0 -11.2,0M2261.3,901.9a5.6,5.6 0 1,0 11.2,0a5.6,5.6 0 1,0 -11.2,0M2261.9,862.3a5.6,5.6 0 1,0 11.2,0a5.6,5.6 0 1,0 -11.2,0M2262.6,911.3a5.6,5.6 0 1,0 11.2,0a5.6,5.6 0 1,0 -11.2,0M2263.3,895.1a5.6,5.6 0 1,0 11.2,0a5.6,5.6 0 1,0 -11.2,0M2264,902.5a5.6,5.6 0 1,0 11.2,0a5.6,5.6 0 1,0 -11.2,0M2264.6,854.7a5.6,5.6 0 1,0 11.2,0a5.6,5.6 0 1,0 -11.2,0M2265.3,897.9a5.6,5.6 0 1,0 11.2,0a5.6,5.6 0 1,0 -11.2,0M2266,878.8a5.6,5.6 0 1,0 11.2,0a5.6,5.6 0 1,0 -11.2,0M2266.7,889.2a5.6,5.6 0 1,0 11.2,0a5.6,5.6 0 1,0 -11.2,0M2267.3,907.7a5.6,5.6 0 1,0 11.2,0a5.6,5.6 0 1,0 -11.2,0M2268,885.3a5.6,5.6 0 1,0 11.2,0a5.6,5.6 0 1,0 -11.2,0M2268.7,868.7a5.6,5.6 0 1,0 11.2,0a5.6,5.6 0 1,0 -11.2,0M2269.4,880.8a5.6,5.6 0 1,0 11.2,0a5.6,5.6 0 1,0 -11.2,0M2270.1,865.9a5.6,5.6 0 1,0 11.2,0a5.6,5.6 0 1,0 -11.2,0M2270.7,884.9a5.6,5.6 0 1,0 11.2,0a5.6,5.6 0 1,0 -11.2,0M2271.4,880.8a5.6,5.6 0 1,0 11.2,0a5.6,5.6 0 1,0 -11.2,0M2272.1,886.9a5.6,5.6 0 1,0 11.2,0a5.6,5.6 0 1,0 -11.2,0M2272.8,875a5.6,5.6 0 1,0 11.2,0a5.6,5.6 0 1,0 -11.2,0M2273.4,851.3a5.6,5.6 0 1,0 11.2,0a5.6,5.6 0 1,0 -11.2,0M2274.1,873a5.6,5.6 0 1,0 11.2,0a5.6,5.6 0 1,0 -11.2,0M2274.8,876.4a5.6,5.6 0 1,0 11.2,0a5.6,5.6 0 1,0 -11.2,0M2275.5,888.8a5.6,5.6 0 1,0 11.2,0a5.6,5.6 0 1,0 -11.2,0M2276.2,892.1a5.6,5.6 0 1,0 11.2,0a5.6,5.6 0 1,0 -11.2,0M2276.8,862.7a5.6,5.6 0 1,0 11.2,0a5.6,5.6 0 1,0 -11.2,0M2277.5,896.4a5.6,5.6 0 1,0 11.2,0a5.6,5.6 0 1,0 -11.2,0M2278.2,891.4a5.6,5.6 0 1,0 11.2,0a5.6,5.6 0 1,0 -11.2,0M2278.9,880.8a5.6,5.6 0 1,0 11.2,0a5.6,5.6 0 1,0 -11.2,0M2279.5,886.3a5.6,5.6 0 1,0 11.2,0a5.6,5.6 0 1,0 -11.2,0M2280.2,855a5.6,5.6 0 1,0 11.2,0a5.6,5.6 0 1,0 -11.2,0M2280.9,914.1a5.6,5.6 0 1,0 11.2,0a5.6,5.6 0 1,0 -11.2,0M2281.6,879.3a5.6,5.6 0 1,0 11.2,0a5.6,5.6 0 1,0 -11.2,0M2282.2,872.9a5.6,5.6 0 1,0 11.2,0a5.6,5.6 0 1,0 -11.2,0M2282.9,895.7a5.6,5.6 0 1,0 11.2,0a5.6,5.6 0 1,0 -11.2,0M2283.6,889.7a5.6,5.6 0 1,0 11.2,0a5.6,5.6 0 1,0 -11.2,0M2284.3,876a5.6,5.6 0 1,0 11.2,0a5.6,5.6 0 1,0 -11.2,0M2285,860.9a5.6,5.6 0 1,0 11.2,0a5.6,5.6 0 1,0 -11.2,0M2285.6,897.2a5.6,5.6 0 1,0 11.2,0a5.6,5.6 0 1,0 -11.2,0M2286.3,907.2a5.6,5.6 0 1,0 11.2,0a5.6,5.6 0 1,0 -11.2,0M2287,870.8a5.6,5.6 0 1,0 11.2,0a5.6,5.6 0 1,0 -11.2,0M2287.7,860.9a5.6,5.6 0 1,0 11.2,0a5.6,5.6 0 1,0 -11.2,0M2288.3,886.9a5.6,5.6 0 1,0 11.2,0a5.6,5.6 0 1,0 -11.2,0M2289,913.7a5.6,5.6 0 1,0 11.2,0a5.6,5.6 0 1,0 -11.2,0M2289.7,864.8a5.6,5.6 0 1,0 11.2,0a5.6,5.6 0 1,0 -11.2,0M2290.4,888.8a5.6,5.6 0 1,0 11.2,0a5.6,5.6 0 1,0 -11.2,0M2291,871.7a5.6,5.6 0 1,0 11.2,0a5.6,5.6 0 1,0 -11.2,0M2291.7,886.1a5.6,5.6 0 1,0 11.2,0a5.6,5.6 0 1,0 -11.2,0M2292.4,888.4a5.6,5.6 0 1,0 11.2,0a5.6,5.6 0 1,0 -11.2,0M2293.1,890a5.6,5.6 0 1,0 11.2,0a5.6,5.6 0 1,0 -11.2,0M2293.8,864.7a5.6,5.6 0 1,0 11.2,0a5.6,5.6 0 1,0 -11.2,0M2294.4,866.5a5.6,5.6 0 1,0 11.2,0a5.6,5.6 0 1,0 -11.2,0M2295.1,916.7a5.6,5.6 0 1,0 11.2,0a5.6,5.6 0 1,0 -11.2,0M2295.8,901.3a5.6,5.6 0 1,0 11.2,0a5.6,5.6 0 1,0 -11.2,0M2296.5,862.7a5.6,5.6 0 1,0 11.2,0a5.6,5.6 0 1,0 -11.2,0M2297.1,889.7a5.6,5.6 0 1,0 11.2,0a5.6,5.6 0 1,0 -11.2,0M2297.8,903.8a5.6,5.6 0 1,0 11.2,0a5.6,5.6 0 1,0 -11.2,0M2298.5,886.2a5.6,5.6 0 1,0 11.2,0a5.6,5.6 0 1,0 -11.2,0M2299.2,889a5.6,5.6 0 1,0 11.2,0a5.6,5.6 0 1,0 -11.2,0M2299.8,890.3a5.6,5.6 0 1,0 11.2,0a5.6,5.6 0 1,0 -11.2,0M2300.5,896.5a5.6,5.6 0 1,0 11.2,0a5.6,5.6 0 1,0 -11.2,0M2301.2,892.7a5.6,5.6 0 1,0 11.2,0a5.6,5.6 0 1,0 -11.2,0M2301.9,892.4a5.6,5.6 0 1,0 11.2,0a5.6,5.6 0 1,0 -11.2,0M2302.6,882.1a5.6,5.6 0 1,0 11.2,0a5.6,5.6 0 1,0 -11.2,0M2303.2,898.8a5.6,5.6 0 1,0 11.2,0a5.6,5.6 0 1,0 -11.2,0M2303.9,893a5.6,5.6 0 1,0 11.2,0a5.6,5.6 0 1,0 -11.2,0M2304.6,892.4a5.6,5.6 0 1,0 11.2,0a5.6,5.6 0 1,0 -11.2,0M2305.3,873.6a5.6,5.6 0 1,0 11.2,0a5.6,5.6 0 1,0 -11.2,0M2305.9,884.7a5.6,5.6 0 1,0 11.2,0a5.6,5.6 0 1,0 -11.2,0M2306.6,889a5.6,5.6 0 1,0 11.2,0a5.6,5.6 0 1,0 -11.2,0M2307.3,880.7a5.6,5.6 0 1,0 11.2,0a5.6,5.6 0 1,0 -11.2,0M2308,883.5a5.6,5.6 0 1,0 11.2,0a5.6,5.6 0 1,0 -11.2,0M2308.6,875.5a5.6,5.6 0 1,0 11.2,0a5.6,5.6 0 1,0 -11.2,0M2309.3,884.8a5.6,5.6 0 1,0 11.2,0a5.6,5.6 0 1,0 -11.2,0M2310,868.2a5.6,5.6 0 1,0 11.2,0a5.6,5.6 0 1,0 -11.2,0M2310.7,872.8a5.6,5.6 0 1,0 11.2,0a5.6,5.6 0 1,0 -11.2,0M2311.4,889.4a5.6,5.6 0 1,0 11.2,0a5.6,5.6 0 1,0 -11.2,0M2312,895.1a5.6,5.6 0 1,0 11.2,0a5.6,5.6 0 1,0 -11.2,0M2312.7,878.4a5.6,5.6 0 1,0 11.2,0a5.6,5.6 0 1,0 -11.2,0M2313.4,884.6a5.6,5.6 0 1,0 11.2,0a5.6,5.6 0 1,0 -11.2,0M2314.1,894.4a5.6,5.6 0 1,0 11.2,0a5.6,5.6 0 1,0 -11.2,0M2314.7,914.3a5.6,5.6 0 1,0 11.2,0a5.6,5.6 0 1,0 -11.2,0M2315.4,917.6a5.6,5.6 0 1,0 11.2,0a5.6,5.6 0 1,0 -11.2,0M2316.1,885.5a5.6,5.6 0 1,0 11.2,0a5.6,5.6 0 1,0 -11.2,0M2316.8,880.2a5.6,5.6 0 1,0 11.2,0a5.6,5.6 0 1,0 -11.2,0M2317.5,880.8a5.6,5.6 0 1,0 11.2,0a5.6,5.6 0 1,0 -11.2,0M2318.1,910.7a5.6,5.6 0 1,0 11.2,0a5.6,5.6 0 1,0 -11.2,0M2318.8,880.3a5.6,5.6 0 1,0 11.2,0a5.6,5.6 0 1,0 -11.2,0M2319.5,902.8a5.6,5.6 0 1,0 11.2,0a5.6,5.6 0 1,0 -11.2,0M2320.2,888.6a5.6,5.6 0 1,0 11.2,0a5.6,5.6 0 1,0 -11.2,0M2320.8,885.9a5.6,5.6 0 1,0 11.2,0a5.6,5.6 0 1,0 -11.2,0M2321.5,903.1a5.6,5.6 0 1,0 11.2,0a5.6,5.6 0 1,0 -11.2,0M2322.2,901.2a5.6,5.6 0 1,0 11.2,0a5.6,5.6 0 1,0 -11.2,0M2322.9,922.8a5.6,5.6 0 1,0 11.2,0a5.6,5.6 0 1,0 -11.2,0M2323.5,908.3a5.6,5.6 0 1,0 11.2,0a5.6,5.6 0 1,0 -11.2,0M2324.2,921.5a5.6,5.6 0 1,0 11.2,0a5.6,5.6 0 1,0 -11.2,0M2324.9,889.2a5.6,5.6 0 1,0 11.2,0a5.6,5.6 0 1,0 -11.2,0M2325.6,892.1a5.6,5.6 0 1,0 11.2,0a5.6,5.6 0 1,0 -11.2,0M2326.3,881a5.6,5.6 0 1,0 11.2,0a5.6,5.6 0 1,0 -11.2,0M2326.9,889.6a5.6,5.6 0 1,0 11.2,0a5.6,5.6 0 1,0 -11.2,0M2327.6,904.4a5.6,5.6 0 1,0 11.2,0a5.6,5.6 0 1,0 -11.2,0M2328.3,892.4a5.6,5.6 0 1,0 11.2,0a5.6,5.6 0 1,0 -11.2,0M2329,903.5a5.6,5.6 0 1,0 11.2,0a5.6,5.6 0 1,0 -11.2,0M2329.6,888.3a5.6,5.6 0 1,0 11.2,0a5.6,5.6 0 1,0 -11.2,0M2330.3,890a5.6,5.6 0 1,0 11.2,0a5.6,5.6 0 1,0 -11.2,0M2331,908.3a5.6,5.6 0 1,0 11.2,0a5.6,5.6 0 1,0 -11.2,0M2331.7,895.4a5.6,5.6 0 1,0 11.2,0a5.6,5.6 0 1,0 -11.2,0M2332.3,895.6a5.6,5.6 0 1,0 11.2,0a5.6,5.6 0 1,0 -11.2,0M2333,901.6a5.6,5.6 0 1,0 11.2,0a5.6,5.6 0 1,0 -11.2,0M2333.7,885.8a5.6,5.6 0 1,0 11.2,0a5.6,5.6 0 1,0 -11.2,0M2334.4,872.6a5.6,5.6 0 1,0 11.2,0a5.6,5.6 0 1,0 -11.2,0M2335.1,898.4a5.6,5.6 0 1,0 11.2,0a5.6,5.6 0 1,0 -11.2,0M2335.7,898.4a5.6,5.6 0 1,0 11.2,0a5.6,5.6 0 1,0 -11.2,0M2336.4,922.8a5.6,5.6 0 1,0 11.2,0a5.6,5.6 0 1,0 -11.2,0M2337.1,896.9a5.6,5.6 0 1,0 11.2,0a5.6,5.6 0 1,0 -11.2,0M2337.8,902.1a5.6,5.6 0 1,0 11.2,0a5.6,5.6 0 1,0 -11.2,0M2338.4,921.7a5.6,5.6 0 1,0 11.2,0a5.6,5.6 0 1,0 -11.2,0M2339.1,890.9a5.6,5.6 0 1,0 11.2,0a5.6,5.6 0 1,0 -11.2,0M2339.8,884a5.6,5.6 0 1,0 11.2,0a5.6,5.6 0 1,0 -11.2,0M2340.5,902.3a5.6,5.6 0 1,0 11.2,0a5.6,5.6 0 1,0 -11.2,0M2341.1,898a5.6,5.6 0 1,0 11.2,0a5.6,5.6 0 1,0 -11.2,0M2341.8,907a5.6,5.6 0 1,0 11.2,0a5.6,5.6 0 1,0 -11.2,0M2342.5,884.4a5.6,5.6 0 1,0 11.2,0a5.6,5.6 0 1,0 -11.2,0M2343.2,916.2a5.6,5.6 0 1,0 11.2,0a5.6,5.6 0 1,0 -11.2,0M2343.9,897.8a5.6,5.6 0 1,0 11.2,0a5.6,5.6 0 1,0 -11.2,0M2344.5,864.2a5.6,5.6 0 1,0 11.2,0a5.6,5.6 0 1,0 -11.2,0M2345.2,890.3a5.6,5.6 0 1,0 11.2,0a5.6,5.6 0 1,0 -11.2,0M2345.9,885.3a5.6,5.6 0 1,0 11.2,0a5.6,5.6 0 1,0 -11.2,0M2346.6,894.6a5.6,5.6 0 1,0 11.2,0a5.6,5.6 0 1,0 -11.2,0M2347.2,910a5.6,5.6 0 1,0 11.2,0a5.6,5.6 0 1,0 -11.2,0M2347.9,895.4a5.6,5.6 0 1,0 11.2,0a5.6,5.6 0 1,0 -11.2,0M2348.6,887.8a5.6,5.6 0 1,0 11.2,0a5.6,5.6 0 1,0 -11.2,0M2349.3,905a5.6,5.6 0 1,0 11.2,0a5.6,5.6 0 1,0 -11.2,0M2350,886.9a5.6,5.6 0 1,0 11.2,0a5.6,5.6 0 1,0 -11.2,0M2350.6,875.5a5.6,5.6 0 1,0 11.2,0a5.6,5.6 0 1,0 -11.2,0M2351.3,879.2a5.6,5.6 0 1,0 11.2,0a5.6,5.6 0 1,0 -11.2,0M2352,916.8a5.6,5.6 0 1,0 11.2,0a5.6,5.6 0 1,0 -11.2,0M2352.7,909.5a5.6,5.6 0 1,0 11.2,0a5.6,5.6 0 1,0 -11.2,0M2353.3,916.6a5.6,5.6 0 1,0 11.2,0a5.6,5.6 0 1,0 -11.2,0M2354,877.6a5.6,5.6 0 1,0 11.2,0a5.6,5.6 0 1,0 -11.2,0M2354.7,884.4a5.6,5.6 0 1,0 11.2,0a5.6,5.6 0 1,0 -11.2,0M2355.4,884.2a5.6,5.6 0 1,0 11.2,0a5.6,5.6 0 1,0 -11.2,0M2356,907a5.6,5.6 0 1,0 11.2,0a5.6,5.6 0 1,0 -11.2,0M2356.7,912.4a5.6,5.6 0 1,0 11.2,0a5.6,5.6 0 1,0 -11.2,0M2357.4,896.4a5.6,5.6 0 1,0 11.2,0a5.6,5.6 0 1,0 -11.2,0M2358.1,894.4a5.6,5.6 0 1,0 11.2,0a5.6,5.6 0 1,0 -11.2,0M2358.8,905.2a5.6,5.6 0 1,0 11.2,0a5.6,5.6 0 1,0 -11.2,0M2359.4,892.1a5.6,5.6 0 1,0 11.2,0a5.6,5.6 0 1,0 -11.2,0M2360.1,886.2a5.6,5.6 0 1,0 11.2,0a5.6,5.6 0 1,0 -11.2,0M2360.8,893.1a5.6,5.6 0 1,0 11.2,0a5.6,5.6 0 1,0 -11.2,0M2361.5,911.8a5.6,5.6 0 1,0 11.2,0a5.6,5.6 0 1,0 -11.2,0M2362.1,922.2a5.6,5.6 0 1,0 11.2,0a5.6,5.6 0 1,0 -11.2,0M2362.8,900.6a5.6,5.6 0 1,0 11.2,0a5.6,5.6 0 1,0 -11.2,0M2363.5,892.5a5.6,5.6 0 1,0 11.2,0a5.6,5.6 0 1,0 -11.2,0M2364.2,898.8a5.6,5.6 0 1,0 11.2,0a5.6,5.6 0 1,0 -11.2,0M2364.8,902.1a5.6,5.6 0 1,0 11.2,0a5.6,5.6 0 1,0 -11.2,0M2365.5,906.9a5.6,5.6 0 1,0 11.2,0a5.6,5.6 0 1,0 -11.2,0M2366.2,889a5.6,5.6 0 1,0 11.2,0a5.6,5.6 0 1,0 -11.2,0M2366.9,900.5a5.6,5.6 0 1,0 11.2,0a5.6,5.6 0 1,0 -11.2,0M2367.6,896.4a5.6,5.6 0 1,0 11.2,0a5.6,5.6 0 1,0 -11.2,0M2368.2,909a5.6,5.6 0 1,0 11.2,0a5.6,5.6 0 1,0 -11.2,0M2368.9,904.7a5.6,5.6 0 1,0 11.2,0a5.6,5.6 0 1,0 -11.2,0M2369.6,895a5.6,5.6 0 1,0 11.2,0a5.6,5.6 0 1,0 -11.2,0M2370.3,912.2a5.6,5.6 0 1,0 11.2,0a5.6,5.6 0 1,0 -11.2,0M2370.9,917a5.6,5.6 0 1,0 11.2,0a5.6,5.6 0 1,0 -11.2,0M2371.6,905.2a5.6,5.6 0 1,0 11.2,0a5.6,5.6 0 1,0 -11.2,0M2372.3,882.7a5.6,5.6 0 1,0 11.2,0a5.6,5.6 0 1,0 -11.2,0M2373,894.1a5.6,5.6 0 1,0 11.2,0a5.6,5.6 0 1,0 -11.2,0M2373.6,877.3a5.6,5.6 0 1,0 11.2,0a5.6,5.6 0 1,0 -11.2,0M2374.3,900a5.6,5.6 0 1,0 11.2,0a5.6,5.6 0 1,0 -11.2,0M2375,903.6a5.6,5.6 0 1,0 11.2,0a5.6,5.6 0 1,0 -11.2,0M2375.7,919.8a5.6,5.6 0 1,0 11.2,0a5.6,5.6 0 1,0 -11.2,0M2376.4,909.6a5.6,5.6 0 1,0 11.2,0a5.6,5.6 0 1,0 -11.2,0M2377,880.4a5.6,5.6 0 1,0 11.2,0a5.6,5.6 0 1,0 -11.2,0M2377.7,893.2a5.6,5.6 0 1,0 11.2,0a5.6,5.6 0 1,0 -11.2,0M2378.4,888.2a5.6,5.6 0 1,0 11.2,0a5.6,5.6 0 1,0 -11.2,0M2379.1,889.5a5.6,5.6 0 1,0 11.2,0a5.6,5.6 0 1,0 -11.2,0M2379.7,900.5a5.6,5.6 0 1,0 11.2,0a5.6,5.6 0 1,0 -11.2,0M2380.4,904.5a5.6,5.6 0 1,0 11.2,0a5.6,5.6 0 1,0 -11.2,0M2381.1,901a5.6,5.6 0 1,0 11.2,0a5.6,5.6 0 1,0 -11.2,0M2381.8,891.9a5.6,5.6 0 1,0 11.2,0a5.6,5.6 0 1,0 -11.2,0M2382.5,892.4a5.6,5.6 0 1,0 11.2,0a5.6,5.6 0 1,0 -11.2,0M2383.1,892.4a5.6,5.6 0 1,0 11.2,0a5.6,5.6 0 1,0 -11.2,0M2383.8,898a5.6,5.6 0 1,0 11.2,0a5.6,5.6 0 1,0 -11.2,0M2384.5,911.9a5.6,5.6 0 1,0 11.2,0a5.6,5.6 0 1,0 -11.2,0M2385.2,906.3a5.6,5.6 0 1,0 11.2,0a5.6,5.6 0 1,0 -11.2,0M2385.8,916.2a5.6,5.6 0 1,0 11.2,0a5.6,5.6 0 1,0 -11.2,0M2386.5,887.7a5.6,5.6 0 1,0 11.2,0a5.6,5.6 0 1,0 -11.2,0M2387.2,925.9a5.6,5.6 0 1,0 11.2,0a5.6,5.6 0 1,0 -11.2,0M2387.9,901.9a5.6,5.6 0 1,0 11.2,0a5.6,5.6 0 1,0 -11.2,0M2388.5,872.3a5.6,5.6 0 1,0 11.2,0a5.6,5.6 0 1,0 -11.2,0M2389.2,905.2a5.6,5.6 0 1,0 11.2,0a5.6,5.6 0 1,0 -11.2,0M2389.9,917.1a5.6,5.6 0 1,0 11.2,0a5.6,5.6 0 1,0 -11.2,0M2390.6,902.5a5.6,5.6 0 1,0 11.2,0a5.6,5.6 0 1,0 -11.2,0M2391.3,882.7a5.6,5.6 0 1,0 11.2,0a5.6,5.6 0 1,0 -11.2,0M2391.9,899.9a5.6,5.6 0 1,0 11.2,0a5.6,5.6 0 1,0 -11.2,0M1741.9,661.7a5.6,5.6 0 1,0 11.2,0a5.6,5.6 0 1,0 -11.2,0M1742.5,727.1a5.6,5.6 0 1,0 11.2,0a5.6,5.6 0 1,0 -11.2,0M1738.8,743.7a5.6,5.6 0 1,0 11.2,0a5.6,5.6 0 1,0 -11.2,0M1748,743.7a5.6,5.6 0 1,0 11.2,0a5.6,5.6 0 1,0 -11.2,0M1752.6,740.1a5.6,5.6 0 1,0 11.2,0a5.6,5.6 0 1,0 -11.2,0M1731.1,771.1a5.6,5.6 0 1,0 11.2,0a5.6,5.6 0 1,0 -11.2,0M1735.7,769.9a5.6,5.6 0 1,0 11.2,0a5.6,5.6 0 1,0 -11.2,0M1740.4,767.5a5.6,5.6 0 1,0 11.2,0a5.6,5.6 0 1,0 -11.2,0M1746.4,763.9a5.6,5.6 0 1,0 11.2,0a5.6,5.6 0 1,0 -11.2,0M1735.7,790.1a5.6,5.6 0 1,0 11.2,0a5.6,5.6 0 1,0 -11.2,0M1740.4,799.6a5.6,5.6 0 1,0 11.2,0a5.6,5.6 0 1,0 -11.2,0M1746.4,799.6a5.6,5.6 0 1,0 11.2,0a5.6,5.6 0 1,0 -11.2,0M1755.7,784.1a5.6,5.6 0 1,0 11.2,0a5.6,5.6 0 1,0 -11.2,0M1728.1,809.1a5.6,5.6 0 1,0 11.2,0a5.6,5.6 0 1,0 -11.2,0M1740.4,817.4a5.6,5.6 0 1,0 11.2,0a5.6,5.6 0 1,0 -11.2,0M1752.6,810.3a5.6,5.6 0 1,0 11.2,0a5.6,5.6 0 1,0 -11.2,0M1732.7,832.9a5.6,5.6 0 1,0 11.2,0a5.6,5.6 0 1,0 -11.2,0M1748,836.4a5.6,5.6 0 1,0 11.2,0a5.6,5.6 0 1,0 -11.2,0M1743.4,826.9a5.6,5.6 0 1,0 11.2,0a5.6,5.6 0 1,0 -11.2,0M1731.1,856.7a5.6,5.6 0 1,0 11.2,0a5.6,5.6 0 1,0 -11.2,0M1729.6,878.1a5.6,5.6 0 1,0 11.2,0a5.6,5.6 0 1,0 -11.2,0M1734.2,891.1a5.6,5.6 0 1,0 11.2,0a5.6,5.6 0 1,0 -11.2,0M1755.7,851.9a5.6,5.6 0 1,0 11.2,0a5.6,5.6 0 1,0 -11.2,0M1766.4,854.3a5.6,5.6 0 1,0 11.2,0a5.6,5.6 0 1,0 -11.2,0M1752.6,868.5a5.6,5.6 0 1,0 11.2,0a5.6,5.6 0 1,0 -11.2,0M1755.7,879.3a5.6,5.6 0 1,0 11.2,0a5.6,5.6 0 1,0 -11.2,0M1760.3,885.2a5.6,5.6 0 1,0 11.2,0a5.6,5.6 0 1,0 -11.2,0M1757.2,901.8a5.6,5.6 0 1,0 11.2,0a5.6,5.6 0 1,0 -11.2,0M1761.8,906.6a5.6,5.6 0 1,0 11.2,0a5.6,5.6 0 1,0 -11.2,0M1728.4,791.3a5.6,5.6 0 1,0 11.2,0a5.6,5.6 0 1,0 -11.2,0M1731.4,782.9a5.6,5.6 0 1,0 11.2,0a5.6,5.6 0 1,0 -11.2,0M1734.4,754.4a5.6,5.6 0 1,0 11.2,0a5.6,5.6 0 1,0 -11.2,0M1737.4,734.2a5.6,5.6 0 1,0 11.2,0a5.6,5.6 0 1,0 -11.2,0M1744.4,773.4a5.6,5.6 0 1,0 11.2,0a5.6,5.6 0 1,0 -11.2,0M1749.4,791.3a5.6,5.6 0 1,0 11.2,0a5.6,5.6 0 1,0 -11.2,0M1751.4,825.7a5.6,5.6 0 1,0 11.2,0a5.6,5.6 0 1,0 -11.2,0M1754.4,842.4a5.6,5.6 0 1,0 11.2,0a5.6,5.6 0 1,0 -11.2,0M1758.4,866.2a5.6,5.6 0 1,0 11.2,0a5.6,5.6 0 1,0 -11.2,0M1762.4,875.7a5.6,5.6 0 1,0 11.2,0a5.6,5.6 0 1,0 -11.2,0M1764.4,890a5.6,5.6 0 1,0 11.2,0a5.6,5.6 0 1,0 -11.2,0M2232.8,546.3a5.6,5.6 0 1,0 11.2,0a5.6,5.6 0 1,0 -11.2,0M2236,593.9a5.6,5.6 0 1,0 11.2,0a5.6,5.6 0 1,0 -11.2,0M2241,593.9a5.6,5.6 0 1,0 11.2,0a5.6,5.6 0 1,0 -11.2,0M2233.4,604.6a5.6,5.6 0 1,0 11.2,0a5.6,5.6 0 1,0 -11.2,0M2228.8,615.3a5.6,5.6 0 1,0 11.2,0a5.6,5.6 0 1,0 -11.2,0M2244.2,626a5.6,5.6 0 1,0 11.2,0a5.6,5.6 0 1,0 -11.2,0M2240.6,630.8a5.6,5.6 0 1,0 11.2,0a5.6,5.6 0 1,0 -11.2,0M2237.1,634.3a5.6,5.6 0 1,0 11.2,0a5.6,5.6 0 1,0 -11.2,0M2233.4,652.2a5.6,5.6 0 1,0 11.2,0a5.6,5.6 0 1,0 -11.2,0M2244.2,652.2a5.6,5.6 0 1,0 11.2,0a5.6,5.6 0 1,0 -11.2,0M2231,659.3a5.6,5.6 0 1,0 11.2,0a5.6,5.6 0 1,0 -11.2,0M2240.4,658.1a5.6,5.6 0 1,0 11.2,0a5.6,5.6 0 1,0 -11.2,0M2246,661.7a5.6,5.6 0 1,0 11.2,0a5.6,5.6 0 1,0 -11.2,0M2238.1,673.6a5.6,5.6 0 1,0 11.2,0a5.6,5.6 0 1,0 -11.2,0M2224.4,685.4a5.6,5.6 0 1,0 11.2,0a5.6,5.6 0 1,0 -11.2,0M2244.9,695a5.6,5.6 0 1,0 11.2,0a5.6,5.6 0 1,0 -11.2,0M2231.7,724.7a5.6,5.6 0 1,0 11.2,0a5.6,5.6 0 1,0 -11.2,0M2248.5,722.3a5.6,5.6 0 1,0 11.2,0a5.6,5.6 0 1,0 -11.2,0M2238.8,727.1a5.6,5.6 0 1,0 11.2,0a5.6,5.6 0 1,0 -11.2,0M2228.1,750.8a5.6,5.6 0 1,0 11.2,0a5.6,5.6 0 1,0 -11.2,0M2247.8,747.3a5.6,5.6 0 1,0 11.2,0a5.6,5.6 0 1,0 -11.2,0M2220.9,761.5a5.6,5.6 0 1,0 11.2,0a5.6,5.6 0 1,0 -11.2,0M2224.4,767.5a5.6,5.6 0 1,0 11.2,0a5.6,5.6 0 1,0 -11.2,0M2240.6,765.1a5.6,5.6 0 1,0 11.2,0a5.6,5.6 0 1,0 -11.2,0M2251.4,768.7a5.6,5.6 0 1,0 11.2,0a5.6,5.6 0 1,0 -11.2,0M2228.1,778.2a5.6,5.6 0 1,0 11.2,0a5.6,5.6 0 1,0 -11.2,0M2238.8,774.6a5.6,5.6 0 1,0 11.2,0a5.6,5.6 0 1,0 -11.2,0M2249.6,782.9a5.6,5.6 0 1,0 11.2,0a5.6,5.6 0 1,0 -11.2,0M2220.9,793.6a5.6,5.6 0 1,0 11.2,0a5.6,5.6 0 1,0 -11.2,0M2229.9,800.8a5.6,5.6 0 1,0 11.2,0a5.6,5.6 0 1,0 -11.2,0M2251.4,800.8a5.6,5.6 0 1,0 11.2,0a5.6,5.6 0 1,0 -11.2,0M2226.4,821a5.6,5.6 0 1,0 11.2,0a5.6,5.6 0 1,0 -11.2,0M2215.4,834.1a5.6,5.6 0 1,0 11.2,0a5.6,5.6 0 1,0 -11.2,0M2222.7,830.5a5.6,5.6 0 1,0 11.2,0a5.6,5.6 0 1,0 -11.2,0M2253.2,840a5.6,5.6 0 1,0 11.2,0a5.6,5.6 0 1,0 -11.2,0M2258.5,843.6a5.6,5.6 0 1,0 11.2,0a5.6,5.6 0 1,0 -11.2,0M2219.2,849.5a5.6,5.6 0 1,0 11.2,0a5.6,5.6 0 1,0 -11.2,0M2224.4,855.5a5.6,5.6 0 1,0 11.2,0a5.6,5.6 0 1,0 -11.2,0M2212,857.8a5.6,5.6 0 1,0 11.2,0a5.6,5.6 0 1,0 -11.2,0M2255,856.7a5.6,5.6 0 1,0 11.2,0a5.6,5.6 0 1,0 -11.2,0M2260.4,863.8a5.6,5.6 0 1,0 11.2,0a5.6,5.6 0 1,0 -11.2,0M2256.7,868.5a5.6,5.6 0 1,0 11.2,0a5.6,5.6 0 1,0 -11.2,0M2255,888.8a5.6,5.6 0 1,0 11.2,0a5.6,5.6 0 1,0 -11.2,0M2220.2,912.5a5.6,5.6 0 1,0 11.2,0a5.6,5.6 0 1,0 -11.2,0M2253.2,913.7a5.6,5.6 0 1,0 11.2,0a5.6,5.6 0 1,0 -11.2,0" fill="#0000ff"/>
<path d="M1734,864.6 L1734.7,859.1 L1735.4,853.5 L1736,847.7 L1736.7,841.7 L1737.4,834.9 L1738.1,825.1 L1738.7,814.4 L1739.4,806.5 L1740.1,798.9 L1740.8,791.6 L1741.4,784.7 L1742.1,777.6 L1742.8,768.4 L1743.5,759 L1744.2,753.1 L1744.8,748.4 L1745.5,744.8 L1746.2,742.3 L1746.9,740.4 L1747.5,737 L1748.2,734 L1748.9,734.9 L1749.6,737.4 L1750.2,741.3 L1750.9,746.2 L1751.6,751.8 L1752.3,755.5 L1753,759.4 L1753.6,766.7 L1754.3,775.1 L1755,784.1 L1755.7,793.5 L1756.3,802.7 L1757,809.4 L1757.7,815.3 L1758.4,823.9 L1759.1,832.7 L1759.7,841.5 L1760.4,850 L1761.1,857.7 L1761.8,862.6 L1762.4,866.3 L1763.1,872.4 L1763.8,878.4 L1764.5,884.2 L1765.1,889.7 L1765.8,894.3 L1766.5,895.9 L1767.2,896.4 L1767.9,899.4 L1768.5,902.5 L1769.2,905.6 L1769.9,908.5 L1770.6,910.8 L1771.2,910.3 L1771.9,908.9 L1772.6,910.2 L1773.3,911.9 L1773.9,913.1 L1774.6,914.4 L1775.3,915.2 L1776,913.3 L1776.7,910.7 L1777.3,910.8 L1778,911.5 L1778.7,912.3 L1779.4,913.2 L1780,913.8 L1780.7,911.7 L1781.4,908.9 L1782.1,909 L1782.7,909.5 L1783.4,910.3 L1784.1,911.1 L1784.8,911.7 L1785.5,909.5 L1786.1,906.7 L1786.8,906.8 L1787.5,907.3 L1788.2,908 L1788.8,909.1 L1789.5,909.9 L1790.2,908 L1790.9,905.5 L1791.6,905.8 L1792.2,906.5 L1792.9,907.5 L1793.6,908.6 L1794.3,909.4 L1794.9,907.5 L1795.6,905 L1796.3,905.3 L1797,906 L1797.6,907 L1798.3,908.1 L1799,908.9 L1799.7,907 L1800.4,904.5 L1801,904.8 L1801.7,905.5 L1802.4,906.5 L1803.1,907.6 L1803.7,908.4 L1804.4,906.6 L1805.1,904 L1805.8,904.3 L1806.4,905 L1807.1,906 L1807.8,907.1 L1808.5,907.9 L1809.2,906.1 L1809.8,903.5 L1810.5,903.8 L1811.2,904.5 L1811.9,905.5 L1812.5,906.6 L1813.2,907.4 L1813.9,905.6 L1814.6,903 L1815.2,903.3 L1815.9,904 L1816.6,905 L1817.3,906.1 L1818,906.9 L1818.6,905.1 L1819.3,902.5 L1820,902.8 L1820.7,903.5 L1821.3,904.5 L1822,905.6 L1822.7,906.4 L1823.4,904.5 L1824.1,901.9 L1824.7,902.2 L1825.4,902.9 L1826.1,903.9 L1826.8,905 L1827.4,905.7 L1828.1,903.8 L1828.8,901.2 L1829.5,901.5 L1830.1,902.2 L1830.8,903.2 L1831.5,904.3 L1832.2,905.1 L1832.9,903.2 L1833.5,900.6 L1834.2,900.8 L1834.9,901.6 L1835.6,902.6 L1836.2,903.6 L1836.9,904.4 L1837.6,902.5 L1838.3,899.9 L1838.9,900.2 L1839.6,900.9 L1840.3,901.9 L1841,903 L1841.7,903.7 L1842.3,901.8 L1843,899.2 L1843.7,899.5 L1844.4,900.2 L1845,901.2 L1845.7,902.3 L1846.4,903.1 L1847.1,901.2 L1847.7,898.6 L1848.4,898.8 L1849.1,899.6 L1849.8,900.6 L1850.5,901.7 L1851.1,902.4 L1851.8,900.5 L1852.5,897.9 L1853.2,898.2 L1853.8,898.9 L1854.5,899.9 L1855.2,901 L1855.9,901.7 L1856.5,900 L1857.2,897.5 L1857.9,897.9 L1858.6,898.8 L1859.3,899.9 L1859.9,901.2 L1860.6,902.1 L1861.3,900.3 L1862,897.9 L1862.6,898.3 L1863.3,899.2 L1864,900.3 L1864.7,901.5 L1865.4,902.4 L1866,900.7 L1866.7,898.2 L1867.4,898.6 L1868.1,899.5 L1868.7,900.6 L1869.4,901.8 L1870.1,902.7 L1870.8,901 L1871.4,898.5 L1872.1,898.9 L1872.8,899.8 L1873.5,900.9 L1874.2,902.2 L1874.8,903.1 L1875.5,901.3 L1876.2,898.9 L1876.9,899.3 L1877.5,900.2 L1878.2,901.3 L1878.9,902.5 L1879.6,903.4 L1880.2,901.7 L1880.9,899.2 L1881.6,899.6 L1882.3,900.5 L1883,901.6 L1883.6,902.8 L1884.3,903.7 L1885,902 L1885.7,899.5 L1886.3,899.9 L1887,900.8 L1887.7,901.9 L1888.4,903.2 L1889,904.1 L1889.7,902.3 L1890.4,899.9 L1891.1,900.3 L1891.8,901.2 L1892.4,902.3 L1893.1,903.5 L1893.8,904.4 L1894.5,902.7 L1895.1,900.2 L1895.8,900.6 L1896.5,901.5 L1897.2,902.6 L1897.9,903.8 L1898.5,904.7 L1899.2,903 L1899.9,900.5 L1900.6,900.9 L1901.2,901.8 L1901.9,902.9 L1902.6,904.2 L1903.3,905.1 L1903.9,903.3 L1904.6,900.9 L1905.3,901.3 L1906,902.2 L1906.7,903.3 L1907.3,904.5 L1908,905.4 L1908.7,903.6 L1909.4,901.2 L1910,901.6 L1910.7,902.5 L1911.4,903.6 L1912.1,904.8 L1912.7,905.7 L1913.4,904 L1914.1,901.5 L1914.8,901.9 L1915.5,902.8 L1916.1,903.9 L1916.8,905.2 L1917.5,906.1 L1918.2,904.3 L1918.8,901.9 L1919.5,902.3 L1920.2,903.1 L1920.9,904.3 L1921.5,905.5 L1922.2,906.4 L1922.9,904.6 L1923.6,902.2 L1924.3,902.7 L1924.9,903.6 L1925.6,904.7 L1926.3,906 L1927,907 L1927.6,905.3 L1928.3,902.9 L1929,903.3 L1929.7,904.2 L1930.4,905.4 L1931,906.7 L1931.7,907.6 L1932.4,905.9 L1933.1,903.5 L1933.7,904 L1934.4,904.9 L1935.1,906.1 L1935.8,907.4 L1936.4,908.3 L1937.1,906.6 L1937.8,904.2 L1938.5,904.6 L1939.2,905.6 L1939.8,906.7 L1940.5,908 L1941.2,909 L1941.9,907.3 L1942.5,904.9 L1943.2,905.3 L1943.9,906.2 L1944.6,907.4 L1945.2,908.7 L1945.9,909.6 L1946.6,907.9 L1947.3,905.5 L1948,906 L1948.6,906.9 L1949.3,908.1 L1950,909.4 L1950.7,910.3 L1951.3,908.6 L1952,906.2 L1952.7,906.6 L1953.4,907.6 L1954,908.7 L1954.7,910 L1955.4,910.9 L1956.1,909.3 L1956.8,906.8 L1957.4,907.3 L1958.1,908.2 L1958.8,909.4 L1959.5,910.7 L1960.1,911.6 L1960.8,910 L1961.5,907.5 L1962.2,908 L1962.8,908.9 L1963.5,910 L1964.2,911.2 L1964.9,912.1 L1965.6,910.2 L1966.2,907.7 L1966.9,907.9 L1967.6,908.6 L1968.3,909.4 L1968.9,910.2 L1969.6,910.6 L1970.3,908.3 L1971,905.1 L1971.7,904.3 L1972.3,903.8 L1973,903.4 L1973.7,902.8 L1974.4,901.5 L1975,897.3 L1975.7,892.1 L1976.4,889.3 L1977.1,886.6 L1977.7,883.7 L1978.4,880.4 L1979.1,876.3 L1979.8,869 L1980.5,860.6 L1981.1,854.4 L1981.8,848.3 L1982.5,841.9 L1983.2,835.1 L1983.8,827.6 L1984.5,817.1 L1985.2,805.7 L1985.9,796.8 L1986.5,788.4 L1987.2,780.2 L1987.9,772.2 L1988.6,764.1 L1989.3,753.8 L1989.9,743.2 L1990.6,736 L1991.3,730.1 L1992,725.2 L1992.6,721.3 L1993.3,718.1 L1994,713.3 L1994.7,709 L1995.3,708.6 L1996,709.9 L1996.7,712.6 L1997.4,716.5 L1998.1,721.1 L1998.7,724.1 L1999.4,727.3 L2000.1,734.1 L2000.8,742.2 L2001.4,751.1 L2002.1,760.6 L2002.8,770.1 L2003.5,777.2 L2004.2,783.7 L2004.8,793 L2005.5,802.8 L2006.2,812.5 L2006.9,822.1 L2007.5,831.1 L2008.2,836.9 L2008.9,841.6 L2009.6,848.7 L2010.2,855.8 L2010.9,862.6 L2011.6,868.9 L2012.3,874.4 L2013,876.9 L2013.6,878.1 L2014.3,881.7 L2015,885.4 L2015.7,888.9 L2016.3,892.3 L2017,894.9 L2017.7,894.6 L2018.4,893.4 L2019,894.9 L2019.7,896.6 L2020.4,898.4 L2021.1,900.2 L2021.8,901.6 L2022.4,900.2 L2023.1,898 L2023.8,898.5 L2024.5,899.5 L2025.1,900.7 L2025.8,902 L2026.5,902.9 L2027.2,901.1 L2027.8,898.6 L2028.5,898.9 L2029.2,899.7 L2029.9,900.8 L2030.6,901.9 L2031.2,902.7 L2031.9,900.9 L2032.6,898.3 L2033.3,898.6 L2033.9,899.4 L2034.6,900.4 L2035.3,901.5 L2036,902.2 L2036.7,900.4 L2037.3,897.8 L2038,898.1 L2038.7,898.9 L2039.4,899.9 L2040,901 L2040.7,901.7 L2041.4,899.9 L2042.1,897.3 L2042.7,897.6 L2043.4,898.4 L2044.1,899.4 L2044.8,900.5 L2045.5,901.2 L2046.1,899.4 L2046.8,896.8 L2047.5,897.1 L2048.2,897.9 L2048.8,898.9 L2049.5,900 L2050.2,900.7 L2050.9,898.9 L2051.5,896.3 L2052.2,896.6 L2052.9,897.5 L2053.6,898.6 L2054.3,899.8 L2054.9,900.7 L2055.6,899 L2056.3,896.5 L2057,896.9 L2057.6,897.8 L2058.3,898.9 L2059,900.2 L2059.7,901.1 L2060.3,899.3 L2061,896.9 L2061.7,897.3 L2062.4,898.2 L2063.1,899.3 L2063.7,900.5 L2064.4,901.4 L2065.1,899.7 L2065.8,897.2 L2066.4,897.6 L2067.1,898.5 L2067.8,899.6 L2068.5,900.8 L2069.1,901.7 L2069.8,900 L2070.5,897.5 L2071.2,897.9 L2071.9,898.8 L2072.5,899.9 L2073.2,901.2 L2073.9,902.1 L2074.6,900.3 L2075.2,897.9 L2075.9,898.3 L2076.6,899.2 L2077.3,900.3 L2078,901.5 L2078.6,902.4 L2079.3,900.7 L2080,898.2 L2080.7,898.6 L2081.3,899.5 L2082,900.6 L2082.7,901.8 L2083.4,902.7 L2084,901 L2084.7,898.5 L2085.4,898.9 L2086.1,899.8 L2086.8,900.9 L2087.4,902.1 L2088.1,903 L2088.8,901.2 L2089.5,898.8 L2090.1,899.1 L2090.8,900 L2091.5,901.1 L2092.2,902.3 L2092.8,903.1 L2093.5,901.4 L2094.2,898.9 L2094.9,899.3 L2095.6,900.2 L2096.2,901.2 L2096.9,902.5 L2097.6,903.3 L2098.3,901.6 L2098.9,899.1 L2099.6,899.5 L2100.3,900.3 L2101,901.4 L2101.6,902.6 L2102.3,903.5 L2103,901.7 L2103.7,899.2 L2104.4,899.6 L2105,900.5 L2105.7,901.6 L2106.4,902.8 L2107.1,903.6 L2107.7,901.9 L2108.4,899.4 L2109.1,899.8 L2109.8,900.7 L2110.5,901.7 L2111.1,903 L2111.8,903.8 L2112.5,902.1 L2113.2,899.6 L2113.8,900 L2114.5,900.8 L2115.2,901.9 L2115.9,903.1 L2116.5,904 L2117.2,902.2 L2117.9,899.7 L2118.6,900.1 L2119.3,901 L2119.9,902.1 L2120.6,903.2 L2121.3,904 L2122,902.2 L2122.6,899.6 L2123.3,899.9 L2124,900.7 L2124.7,901.7 L2125.3,902.9 L2126,903.7 L2126.7,901.8 L2127.4,899.3 L2128.1,899.6 L2128.7,900.4 L2129.4,901.4 L2130.1,902.6 L2130.8,903.3 L2131.4,901.5 L2132.1,899 L2132.8,899.3 L2133.5,900.1 L2134.1,901.1 L2134.8,902.2 L2135.5,903 L2136.2,901.2 L2136.9,898.6 L2137.5,898.9 L2138.2,899.7 L2138.9,900.7 L2139.6,901.9 L2140.2,902.7 L2140.9,900.8 L2141.6,898.3 L2142.3,898.6 L2143,899.4 L2143.6,900.4 L2144.3,901.6 L2145,902.3 L2145.7,900.5 L2146.3,898 L2147,898.3 L2147.7,899.1 L2148.4,900.1 L2149,901.2 L2149.7,902 L2150.4,900.2 L2151.1,897.6 L2151.8,897.9 L2152.4,898.7 L2153.1,899.7 L2153.8,900.9 L2154.5,901.7 L2155.1,899.8 L2155.8,897.3 L2156.5,897.6 L2157.2,898.3 L2157.8,899.3 L2158.5,900.5 L2159.2,901.2 L2159.9,899.4 L2160.6,896.8 L2161.2,897.1 L2161.9,897.9 L2162.6,898.9 L2163.3,900.1 L2163.9,900.8 L2164.6,899 L2165.3,896.4 L2166,896.7 L2166.6,897.5 L2167.3,898.5 L2168,899.6 L2168.7,900.4 L2169.4,898.6 L2170,896 L2170.7,896.3 L2171.4,897.1 L2172.1,898.1 L2172.7,899.2 L2173.4,900 L2174.1,898.2 L2174.8,895.6 L2175.4,895.9 L2176.1,896.7 L2176.8,897.7 L2177.5,898.8 L2178.2,899.6 L2178.8,897.7 L2179.5,895.2 L2180.2,895.5 L2180.9,896.3 L2181.5,897.3 L2182.2,898.4 L2182.9,899.2 L2183.6,897.3 L2184.3,894.8 L2184.9,895.1 L2185.6,895.8 L2186.3,896.8 L2187,898 L2187.6,898.8 L2188.3,896.9 L2189,894.4 L2189.7,894.6 L2190.3,895.4 L2191,896.4 L2191.7,897.6 L2192.4,898.3 L2193.1,896.5 L2193.7,893.9 L2194.4,894.2 L2195.1,895.1 L2195.8,896.3 L2196.4,897.5 L2197.1,898.4 L2197.8,896.7 L2198.5,894.2 L2199.1,894.6 L2199.8,895.5 L2200.5,896.7 L2201.2,897.9 L2201.9,898.8 L2202.5,897.1 L2203.2,894.6 L2203.9,895.1 L2204.6,895.9 L2205.2,897.1 L2205.9,898.3 L2206.6,899.2 L2207.3,897.5 L2207.9,895 L2208.6,895.4 L2209.3,896.3 L2210,897.4 L2210.7,898.6 L2211.3,899.4 L2212,897.6 L2212.7,895.1 L2213.4,895.4 L2214,896.1 L2214.7,897 L2215.4,898 L2216.1,898.5 L2216.8,896.4 L2217.4,893.4 L2218.1,893.2 L2218.8,893.3 L2219.5,893.5 L2220.1,893.6 L2220.8,893.1 L2221.5,889.7 L2222.2,885.1 L2222.8,883 L2223.5,880.9 L2224.2,878.8 L2224.9,876.3 L2225.6,872.9 L2226.2,866.4 L2226.9,858.7 L2227.6,853.3 L2228.3,847.8 L2228.9,842 L2229.6,835.8 L2230.3,828.7 L2231,818.4 L2231.6,807.1 L2232.3,798.3 L2233,789.6 L2233.7,781.1 L2234.4,772.6 L2235,763.8 L2235.7,752.5 L2236.4,740.9 L2237.1,732.7 L2237.7,725.4 L2238.4,719.2 L2239.1,714 L2239.8,709.3 L2240.4,703.1 L2241.1,697.4 L2241.8,695.7 L2242.5,695.7 L2243.2,697.2 L2243.8,700.1 L2244.5,703.9 L2245.2,706.1 L2245.9,708.7 L2246.5,715.2 L2247.2,723 L2247.9,731.7 L2248.6,741.2 L2249.3,750.8 L2249.9,758.1 L2250.6,764.8 L2251.3,774.5 L2252,784.6 L2252.6,794.8 L2253.3,804.8 L2254,814.2 L2254.7,820.4 L2255.3,825.5 L2256,833 L2256.7,840.3 L2257.4,847.4 L2258.1,854 L2258.7,859.7 L2259.4,862.2 L2260.1,863.5 L2260.8,867.2 L2261.4,871 L2262.1,874.5 L2262.8,877.8 L2263.5,880.5 L2264.1,880.2 L2264.8,878.9 L2265.5,880.3 L2266.2,882 L2266.9,883.7 L2267.5,885.4 L2268.2,886.6 L2268.9,885.1 L2269.6,882.7 L2270.2,883.2 L2270.9,884.1 L2271.6,885.2 L2272.3,886.4 L2272.9,887.2 L2273.6,885.3 L2274.3,882.7 L2275,883 L2275.7,883.7 L2276.3,884.6 L2277,885.7 L2277.7,886.4 L2278.4,884.5 L2279,882.2 L2279.7,882.7 L2280.4,883.8 L2281.1,885.1 L2281.8,886.5 L2282.4,887.5 L2283.1,885.9 L2283.8,883.6 L2284.5,884.2 L2285.1,885.2 L2285.8,886.5 L2286.5,887.9 L2287.2,889 L2287.8,887.4 L2288.5,885.1 L2289.2,885.7 L2289.9,886.7 L2290.6,888 L2291.2,889.4 L2291.9,890.4 L2292.6,888.8 L2293.3,886.5 L2293.9,887.1 L2294.6,888.1 L2295.3,889.4 L2296,890.8 L2296.6,891.8 L2297.3,890.3 L2298,888 L2298.7,888.5 L2299.4,889.6 L2300,890.9 L2300.7,892.3 L2301.4,893.3 L2302.1,891.7 L2302.7,889.4 L2303.4,890 L2304.1,891 L2304.8,892.3 L2305.4,893.7 L2306.1,894.7 L2306.8,893.2 L2307.5,890.9 L2308.2,891.4 L2308.8,892.5 L2309.5,893.8 L2310.2,895.1 L2310.9,896.2 L2311.5,894.6 L2312.2,892.3 L2312.9,892.8 L2313.6,893.8 L2314.2,895.1 L2314.9,896.5 L2315.6,897.5 L2316.3,895.9 L2317,893.6 L2317.6,894.2 L2318.3,895.2 L2319,896.5 L2319.7,897.8 L2320.3,898.9 L2321,897.3 L2321.7,895 L2322.4,895.5 L2323.1,896.6 L2323.7,897.8 L2324.4,899.2 L2325.1,900.2 L2325.8,898.6 L2326.4,896.3 L2327.1,896.9 L2327.8,897.9 L2328.5,899.2 L2329.1,900.5 L2329.8,901.6 L2330.5,900 L2331.2,897.7 L2331.9,898.2 L2332.5,899.3 L2333.2,900.5 L2333.9,901.9 L2334.6,902.9 L2335.2,901.3 L2335.9,899 L2336.6,899.6 L2337.3,900.2 L2337.9,901.1 L2338.6,902.1 L2339.3,902.8 L2340,900.8 L2340.7,898.1 L2341.3,898.3 L2342,899 L2342.7,899.9 L2343.4,900.9 L2344,901.5 L2344.7,899.6 L2345.4,896.9 L2346.1,897 L2346.7,897.7 L2347.4,898.6 L2348.1,899.6 L2348.8,900.2 L2349.5,898.3 L2350.1,895.6 L2350.8,895.8 L2351.5,896.4 L2352.2,897.3 L2352.8,898.7 L2353.5,899.7 L2354.2,898.1 L2354.9,895.8 L2355.6,896.3 L2356.2,897.3 L2356.9,898.6 L2357.6,899.9 L2358.3,900.9 L2358.9,899.3 L2359.6,897 L2360.3,897.5 L2361,898.5 L2361.6,899.8 L2362.3,901.2 L2363,902.2 L2363.7,900.6 L2364.4,898.2 L2365,898.8 L2365.7,899.8 L2366.4,901 L2367.1,902.4 L2367.7,903.4 L2368.4,901.8 L2369.1,899.5 L2369.8,900 L2370.4,901 L2371.1,902.2 L2371.8,903.5 L2372.5,904.5 L2373.2,902.9 L2373.8,900.5 L2374.5,901 L2375.2,902 L2375.9,903.2 L2376.5,904.5 L2377.2,905.5 L2377.9,903.8 L2378.6,901.5 L2379.2,902 L2379.9,903 L2380.6,904.2 L2381.3,905.5 L2382,906.5 L2382.6,904.8 L2383.3,902.5 L2384,903 L2384.7,903.9 L2385.3,905.1 L2386,906.5 L2386.7,907.4 L2387.4,905.8 L2388.1,903.4 L2388.7,903.9 L2389.4,904.9 L2390.1,906.1 L2390.8,907.4 L2391.4,908.1 L2392.1,906.2 L2392.8,903.5 L2393.5,903.7 L2394.1,904.4 L2394.8,905.3 L2395.5,906.4 L2396.2,907 L2396.9,905.1 L2397.5,902.4 L2398.2,902.7 L2398.9,903.3 L2399.6,904.2 L2400.2,905.3 L2400.9,906 L2401.6,904 L2402.3,901.4 L2402.9,901.6 L2403.6,902.3 L2404.3,903.2 L2405,904.2 L2405.7,904.9 L2406.3,903 L2407,900.3 L2407.7,900.5 L2408.4,901.2 L2409,902.1 L2409.7,903.1 L2410.4,903.8 L2411.1,901.9 L2411.7,899.2 L2412.4,899.9 L2413.1,901 L2413.8,902.4 L2414.5,903.9 L2415.1,905.1 L2415.8,903.6 L2416.5,901.4 L2417.2,902.1 L2417.8,903.2 L2418.5,904.6 L2419.2,906.1 L2419.9,907.2 L2420.5,905.7 L2421.2,903.6 L2421.9,904.2 L2422.6,905.4 L2423.3,906.7 L2423.9,908.2 L2424.6,909.4 L2425.3,907.9 L2426,905.7 L2426.6,906.4 L2427.3,907.5 L2428,908.9 L2428.7,910.4 L2429.4,911.3 L2430,909.6 L2430.7,907.2 L2431.4,907.7 L2432.1,908.6 L2432.7,909.7 L2433.4,911 L2434.1,911.9 L2434.8,910.2 L2435.4,907.8 L2436.1,908.2 L2436.8,909.2 L2437.5,910.3 L2438.2,911.6 L2438.8,912.8 L2439.5,911.4 L2440.2,909.3 L2440.9,910 L2441.5,911.2 L2442.2,912.7 L2442.9,914.3 L2443.6,915.5 L2444.2,914.1 L2444.9,911.9 L2445.6,912.7 L2446.3,913.9 L2447,915.3 L2447.6,916.9 L2448.3,918.1 L2449,916.7 L2449.7,914.6 L2450.3,915.3 L2451,916.6 L2451.7,918 L2452.4,919.6 L2453,920.8 L2453.7,919.4 L2454.4,917.2 L2455.1,918 L2455.8,918.6 L2456.4,919.4 L2457.1,920.4 L2457.8,921 L2458.5,918.9 L2459.1,916.2 L2459.8,916.2 L2460.5,916.7 L2461.2,917.4 L2461.9,918.2 L2462.5,918.6 L2463.2,916.3 L2463.9,913.2 L2464.6,912.8 L2465.2,912.8 L2465.9,913.1 L2466.6,913.3 L2467.3,913 L2467.9,909.9 L2468.6,905.7 L2469.3,904.2 L2470,902.7 L2470.7,901.2 L2471.3,899.3 L2472,896.7 L2472.7,891 L2473.4,884 L2474,879.4 L2474.7,874.7 L2475.4,869.7 L2476.1,864.2 L2476.7,857.9 L2477.4,848.5 L2478.1,837.8 L2478.8,829.6 L2479.5,821.5 L2480.1,813.4 L2480.8,805.3 L2481.5,796.7 L2482.2,785.6 L2482.8,774 L2483.5,765.5 L2484.2,758 L2484.9,751.3 L2485.5,745.4 L2486.2,740.1 L2486.9,733 L2487.6,726.4 L2488.3,723.7 L2488.9,722.7 L2489.6,723.1 L2490.3,724.9 L2491,727.6 L2491.6,728.9 L2492.3,730.5 L2493,736.1 L2493.7,743.2 L2494.4,751.3 L2495,760.2 L2495.7,769.4 L2496.4,776.4 L2497.1,783.1 L2497.7,792.8 L2498.4,803 L2499.1,813.4 L2499.8,823.8 L2500.4,833.5 L2501.1,840.3 L2501.8,846 L2502.5,854 L2503.2,862 L2503.8,869.7 L2504.5,876.9 L2505.2,883.3 L2505.9,886.5 L2506.5,888.5 L2507.2,892.8 L2507.9,897.1 L2508.6,901.2 L2509.2,905 L2509.9,908.1 L2510.6,908.2 L2511.3,907.4 L2512,909.1 L2512.6,911.1 L2513.3,912.8 L2514,914.4 L2514.7,915.5 L2515.3,913.9 L2516,911.5 L2516.7,911.8 L2517.4,912.6 L2518,913.5 L2518.7,914.5 L2519.4,915.1 L2520.1,913.1 L2520.8,910.3 L2521.4,910.4 L2522.1,910.9 L2522.8,911.7 L2523.5,912.6 L2524.1,913.1 L2524.8,911 L2525.5,908.1 L2526.2,908.8 L2526.8,909.9 L2527.5,911.3 L2528.2,912.8 L2528.9,914 L2529.6,912.5 L2530.2,910.3 L2530.9,911 L2531.6,912.1 L2532.3,913.5 L2532.9,915 L2533.6,916.1 L2534.3,914.6 L2535,912.5 L2535.7,913.1 L2536.3,914.3 L2537,915.6 L2537.7,917.1 L2538.4,918.3 L2539,916.8 L2539.7,914.6 L2540.4,915.3 L2541.1,916.4 L2541.7,917.8 L2542.4,919.3 L2543.1,920.4 L2543.8,919 L2544.5,916.7 L2545.1,917.2 L2545.8,918.3 L2546.5,919.5 L2547.2,920.9 L2547.8,922 L2548.5,920.4 L2549.2,918.1 L2549.9,918.6 L2550.5,919.7 L2551.2,920.9 L2551.9,922.3 L2552.6,923.4 L2553.3,921.8 L2553.9,919.5 L2554.6,920.1 L2555.3,921.1 L2556,922.4 L2556.6,923.7 L2557.3,924.8 L2558,923.2 L2558.7,920.9 L2559.3,921.5 L2560,922.5 L2560.7,923.8 L2561.4,925.2 L2562.1,926.2 L2562.7,924.6 L2563.4,922.3 L2564.1,922.9 L2564.8,923.9 L2565.4,925.2 L2566.1,926.6 L2566.8,927.6 L2567.5,926 L2568.2,923.7 L2568.8,924.3 L2569.5,925.3 L2570.2,926.6 L2570.9,928 L2571.5,929 L2572.2,927.4 L2572.9,925.1 L2573.6,925.7 L2574.2,926.7 L2574.9,928 L2575.6,929.4 L2576.3,930.4 L2577,928.8 L2577.6,926.6 L2578.3,927.1 L2579,928.1 L2579.7,929.4 L2580.3,930.8 L2581,931.8 L2581.7,930.3 L2582.4,927.6 L2583,927.7 L2583.7,928.3 L2584.4,929.2 L2585.1,930.2 L2585.8,930.8 L2586.4,928.8 L2587.1,926.1 L2587.8,926.3 L2588.5,926.9 L2589.1,927.7 L2589.8,928.7 L2590.5,929.4 L2591.2,927.4 L2591.8,924.7 L2592.5,924.8 L2593.2,925.4 L2593.9,926.3 L2594.6,927.3 L2595.2,927.9 L2595.9,925.9 L2596.6,923.2 L2597.3,923.4 L2597.9,924.3 L2598.6,925.6 L2599.3,926.9 L2600,927.9 L2600.7,926.2 L2601.3,923.9 L2602,924.4 L2602.7,925.4 L2603.4,926.6 L2604,927.9 L2604.7,928.9 L2605.4,927.2 L2606.1,924.9 L2606.7,925.4 L2607.4,926.4 L2608.1,927.6 L2608.8,928.9 L2609.5,929.9 L2610.1,928.3 L2610.8,925.9 L2611.5,926.4 L2612.2,927.4 L2612.8,928.6 L2613.5,929.9 L2614.2,930.9 L2614.9,929.3 L2615.5,926.9 L2616.2,927.4 L2616.9,928.4 L2617.6,929.6 L2618.3,931 L2618.9,931.9 L2619.6,930.3 L2620.3,928 L2621,928.5 L2621.6,929.4 L2622.3,930.7 L2623,932 L2623.7,933 L2624.3,931.3 L2625,929 L2625.7,929.5 L2626.4,930.5 L2627.1,931.7 L2627.7,933 L2628.4,934 L2629.1,932.3 L2629.8,930 L2630.4,930.5 L2631.1,931.5 L2631.8,932.7 L2632.5,934 L2633.1,935 L2633.8,933.4 L2634.5,931 L2635.2,931.5 L2635.9,932.5 L2636.5,933.7" fill="none" stroke="#e8301f" stroke-width="4" stroke-linejoin="round"/>
<path d="M1734,830.9 L1734.7,823.6 L1735.4,818.6 L1736,815.9 L1736.7,809.2 L1737.4,798.8 L1738.1,794.1 L1738.7,778.3 L1739.4,770.3 L1740.1,764.5 L1740.8,758 L1741.4,750.9 L1742.1,743.8 L1742.8,733.3 L1743.5,723.3 L1744.2,717 L1744.8,709.5 L1745.5,707 L1746.2,705.4 L1746.9,701.3 L1747.5,702.4 L1748.2,699.7 L1748.9,698 L1749.6,703.9 L1750.2,707.9 L1750.9,710.1 L1751.6,716 L1752.3,717.3 L1753,723 L1753.6,731.2 L1754.3,739.9 L1755,750.5 L1755.7,761.6 L1756.3,769.9 L1757,773.8 L1757.7,782.9 L1758.4,790.7 L1759.1,801.9 L1759.7,805.9 L1760.4,818.6 L1761.1,825.8 L1761.8,827.2 L1762.4,833.3 L1763.1,837.5 L1763.8,844.9 L1764.5,850.1 L1765.1,859.5 L1765.8,861.6 L1766.5,863.4 L1767.2,861.8 L1767.9,867.9 L1768.5,869.6 L1769.2,875.9 L1769.9,876.9 L1770.6,879.7 L1771.2,880.2 L1771.9,874.9 L1772.6,878.8 L1773.3,876.9 L1773.9,880.5 L1774.6,881.6 L1775.3,882.2 L1776,880.1 L1776.7,880.6 L1777.3,879.1 L1778,880.9 L1778.7,880.8 L1779.4,883.5 L1780,878.9 L1780.7,881.3 L1781.4,875.8 L1782.1,878.1 L1782.7,875.2 L1783.4,877.2 L1784.1,881.2 L1784.8,877.5 L1785.5,874.8 L1786.1,872.2 L1786.8,874.2 L1787.5,877.3 L1788.2,877.7 L1788.8,874.5 L1789.5,877.5 L1790.2,877.8 L1790.9,871.1 L1791.6,872.8 L1792.2,874 L1792.9,876.2 L1793.6,877.1 L1794.3,878.8 L1794.9,878.2 L1795.6,870.6 L1796.3,873.4 L1797,873.6 L1797.6,876 L1798.3,874.5 L1799,879.6 L1799.7,875.7 L1800.4,875.2 L1801,874.9 L1801.7,870.6 L1802.4,873.5 L1803.1,876 L1803.7,876.2 L1804.4,872.2 L1805.1,872.8 L1805.8,871.6 L1806.4,871.8 L1807.1,874.8 L1807.8,874.9 L1808.5,874.2 L1809.2,871.5 L1809.8,873.5 L1810.5,869.1 L1811.2,875.4 L1811.9,871.9 L1812.5,872.7 L1813.2,877.5 L1813.9,873.9 L1814.6,869 L1815.2,874.1 L1815.9,871.2 L1816.6,871.2 L1817.3,874 L1818,873.5 L1818.6,874.6 L1819.3,872.2 L1820,871.5 L1820.7,873.3 L1821.3,873.3 L1822,870.9 L1822.7,873.8 L1823.4,873.4 L1824.1,871.2 L1824.7,867.4 L1825.4,871.1 L1826.1,868.9 L1826.8,872.8 L1827.4,873.5 L1828.1,869.4 L1828.8,867.7 L1829.5,868.9 L1830.1,870.6 L1830.8,868.9 L1831.5,872.7 L1832.2,870.4 L1832.9,873.6 L1833.5,868.9 L1834.2,868.6 L1834.9,866.8 L1835.6,871.9 L1836.2,869.7 L1836.9,871.2 L1837.6,869.1 L1838.3,867 L1838.9,865.3 L1839.6,869.8 L1840.3,870.4 L1841,872.6 L1841.7,874.3 L1842.3,871.4 L1843,864.7 L1843.7,865.4 L1844.4,870.4 L1845,868.5 L1845.7,870.3 L1846.4,870.4 L1847.1,868.1 L1847.7,867.6 L1848.4,864 L1849.1,867.7 L1849.8,867.7 L1850.5,868.7 L1851.1,872.2 L1851.8,871 L1852.5,866.3 L1853.2,864.5 L1853.8,864.9 L1854.5,866.4 L1855.2,871.2 L1855.9,867.2 L1856.5,866.1 L1857.2,863.2 L1857.9,865.7 L1858.6,864.2 L1859.3,870.5 L1859.9,871.9 L1860.6,872.8 L1861.3,869.7 L1862,867.3 L1862.6,868 L1863.3,866.7 L1864,870.9 L1864.7,868.9 L1865.4,872.3 L1866,867.5 L1866.7,868.9 L1867.4,867.6 L1868.1,864.8 L1868.7,868.3 L1869.4,867.9 L1870.1,869.7 L1870.8,868.2 L1871.4,868.3 L1872.1,866.4 L1872.8,870.5 L1873.5,867 L1874.2,867.3 L1874.8,868.8 L1875.5,871.9 L1876.2,867.7 L1876.9,868.3 L1877.5,870.4 L1878.2,868.4 L1878.9,868.6 L1879.6,872.4 L1880.2,867.4 L1880.9,865.3 L1881.6,869.7 L1882.3,866.8 L1883,867.2 L1883.6,872.5 L1884.3,871.2 L1885,869.1 L1885.7,866.8 L1886.3,870.2 L1887,867.8 L1887.7,869 L1888.4,869.1 L1889,870.1 L1889.7,871.2 L1890.4,866.4 L1891.1,866 L1891.8,866.7 L1892.4,872.2 L1893.1,874.2 L1893.8,871.4 L1894.5,872.2 L1895.1,867.7 L1895.8,865.9 L1896.5,870.1 L1897.2,872 L1897.9,872 L1898.5,871.7 L1899.2,873.3 L1899.9,869.1 L1900.6,871 L1901.2,868.7 L1901.9,868.9 L1902.6,872.8 L1903.3,873.7 L1903.9,871 L1904.6,870.5 L1905.3,870.7 L1906,871.1 L1906.7,871.4 L1907.3,874.9 L1908,871.8 L1908.7,871.1 L1909.4,870.3 L1910,872 L1910.7,868.8 L1911.4,873.7 L1912.1,874.9 L1912.7,875.8 L1913.4,874.4 L1914.1,867 L1914.8,871.2 L1915.5,871.9 L1916.1,869.9 L1916.8,872.4 L1917.5,875.8 L1918.2,872.6 L1918.8,867.5 L1919.5,870.9 L1920.2,869.8 L1920.9,874.6 L1921.5,872 L1922.2,872.6 L1922.9,870.6 L1923.6,869.1 L1924.3,871.3 L1924.9,874.1 L1925.6,872.5 L1926.3,872.4 L1927,876.7 L1927.6,874.6 L1928.3,870.5 L1929,869.7 L1929.7,869.8 L1930.4,875.5 L1931,876.5 L1931.7,873.7 L1932.4,873 L1933.1,870.1 L1933.7,868.9 L1934.4,870.2 L1935.1,871.9 L1935.8,873.6 L1936.4,876.8 L1937.1,873.7 L1937.8,874 L1938.5,871 L1939.2,871.9 L1939.8,873.3 L1940.5,876.2 L1941.2,877.6 L1941.9,875.6 L1942.5,875.5 L1943.2,871.2 L1943.9,873.9 L1944.6,876 L1945.2,876.3 L1945.9,876.2 L1946.6,876.5 L1947.3,871.5 L1948,871.4 L1948.6,875.5 L1949.3,878.1 L1950,875.7 L1950.7,875.2 L1951.3,878.6 L1952,872.8 L1952.7,872.6 L1953.4,873 L1954,878.9 L1954.7,880.3 L1955.4,875.9 L1956.1,879.4 L1956.8,876.7 L1957.4,874.7 L1958.1,876.5 L1958.8,875.8 L1959.5,880.4 L1960.1,877.1 L1960.8,879.5 L1961.5,873.8 L1962.2,878.4 L1962.8,876.9 L1963.5,880.7 L1964.2,880.2 L1964.9,881.1 L1965.6,876.8 L1966.2,875.8 L1966.9,878.4 L1967.6,873.5 L1968.3,875 L1968.9,875.6 L1969.6,880 L1970.3,876.8 L1971,874.6 L1971.7,874.4 L1972.3,874.4 L1973,871.1 L1973.7,872.8 L1974.4,871.2 L1975,862.9 L1975.7,859.9 L1976.4,858.8 L1977.1,853.2 L1977.7,852.6 L1978.4,847.7 L1979.1,844.9 L1979.8,836.2 L1980.5,826.9 L1981.1,821.2 L1981.8,815.8 L1982.5,806.8 L1983.2,799.4 L1983.8,795.9 L1984.5,785.5 L1985.2,773.9 L1985.9,759.8 L1986.5,751.4 L1987.2,747.2 L1987.9,734.6 L1988.6,730.8 L1989.3,718.5 L1989.9,707.8 L1990.6,698 L1991.3,697 L1992,690.4 L1992.6,684.7 L1993.3,684.5 L1994,678.7 L1994.7,672.9 L1995.3,670.1 L1996,672.1 L1996.7,674.4 L1997.4,678.8 L1998.1,683.8 L1998.7,686.1 L1999.4,690.4 L2000.1,697.1 L2000.8,707.9 L2001.4,717.8 L2002.1,724 L2002.8,737.2 L2003.5,740.1 L2004.2,748.7 L2004.8,759.8 L2005.5,766.2 L2006.2,780.8 L2006.9,788.4 L2007.5,800 L2008.2,800.9 L2008.9,808.1 L2009.6,813.9 L2010.2,824.2 L2010.9,828 L2011.6,835.1 L2012.3,841 L2013,841.7 L2013.6,846 L2014.3,849.8 L2015,851.9 L2015.7,854.7 L2016.3,861 L2017,861.7 L2017.7,864.2 L2018.4,860.9 L2019,861.1 L2019.7,867.1 L2020.4,865 L2021.1,871 L2021.8,866.7 L2022.4,868.2 L2023.1,866.4 L2023.8,865.1 L2024.5,867.3 L2025.1,867.2 L2025.8,872.4 L2026.5,870.4 L2027.2,868.7 L2027.8,863.9 L2028.5,869.6 L2029.2,867.9 L2029.9,867.9 L2030.6,869.5 L2031.2,873.1 L2031.9,868.2 L2032.6,867.8 L2033.3,868.3 L2033.9,865 L2034.6,870.1 L2035.3,869.6 L2036,868.7 L2036.7,867.1 L2037.3,865.4 L2038,864.2 L2038.7,867 L2039.4,867 L2040,867 L2040.7,868.6 L2041.4,866.9 L2042.1,865.8 L2042.7,865.2 L2043.4,866.9 L2044.1,865.8 L2044.8,869.1 L2045.5,869.3 L2046.1,865.8 L2046.8,864.7 L2047.5,866 L2048.2,863.8 L2048.8,867.5 L2049.5,865.8 L2050.2,866.9 L2050.9,867.1 L2051.5,863 L2052.2,867.3 L2052.9,866 L2053.6,864.4 L2054.3,867.3 L2054.9,868.3 L2055.6,865.9 L2056.3,863.4 L2057,864.3 L2057.6,866.2 L2058.3,868.7 L2059,869.3 L2059.7,870.2 L2060.3,867.6 L2061,861.8 L2061.7,866 L2062.4,866.4 L2063.1,867.9 L2063.7,867.9 L2064.4,866.6 L2065.1,865.2 L2065.8,865.8 L2066.4,866.9 L2067.1,864.1 L2067.8,867.5 L2068.5,867.6 L2069.1,872.2 L2069.8,865.7 L2070.5,866.5 L2071.2,865.9 L2071.9,868.5 L2072.5,868.3 L2073.2,867.1 L2073.9,868 L2074.6,868.4 L2075.2,864.2 L2075.9,866.4 L2076.6,867.8 L2077.3,867.9 L2078,871.2 L2078.6,871.4 L2079.3,867.3 L2080,864.5 L2080.7,869.1 L2081.3,866 L2082,866.6 L2082.7,870.1 L2083.4,873.2 L2084,867.8 L2084.7,867.9 L2085.4,866 L2086.1,868.5 L2086.8,868 L2087.4,871.5 L2088.1,871 L2088.8,869 L2089.5,865.9 L2090.1,868.8 L2090.8,865.1 L2091.5,870.2 L2092.2,871.3 L2092.8,872.5 L2093.5,871.9 L2094.2,867.3 L2094.9,865.6 L2095.6,866.8 L2096.2,871 L2096.9,872.5 L2097.6,872.3 L2098.3,867.9 L2098.9,867.1 L2099.6,864.8 L2100.3,867.3 L2101,868.6 L2101.6,868.9 L2102.3,869.9 L2103,870.5 L2103.7,868.6 L2104.4,867.9 L2105,868.4 L2105.7,871.6 L2106.4,871 L2107.1,870.7 L2107.7,872 L2108.4,869.5 L2109.1,869.6 L2109.8,869.8 L2110.5,866.9 L2111.1,873.7 L2111.8,873.6 L2112.5,871.9 L2113.2,867.6 L2113.8,870.7 L2114.5,869 L2115.2,871.8 L2115.9,872.4 L2116.5,870.1 L2117.2,872 L2117.9,867 L2118.6,868.6 L2119.3,869.4 L2119.9,868.1 L2120.6,873.1 L2121.3,869.4 L2122,867.7 L2122.6,866.5 L2123.3,870.5 L2124,867.7 L2124.7,869 L2125.3,869.2 L2126,873.3 L2126.7,867 L2127.4,864.9 L2128.1,869.8 L2128.7,869.4 L2129.4,872.1 L2130.1,868.5 L2130.8,868.8 L2131.4,866.5 L2132.1,866.2 L2132.8,866.2 L2133.5,866.9 L2134.1,868.6 L2134.8,867.4 L2135.5,870.3 L2136.2,870 L2136.9,866.5 L2137.5,869.7 L2138.2,866.3 L2138.9,867.5 L2139.6,870.3 L2140.2,868.5 L2140.9,867.2 L2141.6,867.2 L2142.3,869 L2143,869.5 L2143.6,870.2 L2144.3,870.6 L2145,870.6 L2145.7,865.9 L2146.3,867.2 L2147,863.8 L2147.7,865.9 L2148.4,865.9 L2149,869.7 L2149.7,872.9 L2150.4,866.4 L2151.1,867 L2151.8,868 L2152.4,864.8 L2153.1,866.5 L2153.8,870.5 L2154.5,870.9 L2155.1,865.1 L2155.8,866.5 L2156.5,864.3 L2157.2,868.4 L2157.8,865.4 L2158.5,870.6 L2159.2,869 L2159.9,870.1 L2160.6,864.4 L2161.2,863 L2161.9,868.3 L2162.6,868.2 L2163.3,866.4 L2163.9,868.1 L2164.6,868 L2165.3,863.6 L2166,864.9 L2166.6,863.2 L2167.3,867.6 L2168,866 L2168.7,867.5 L2169.4,865 L2170,864.6 L2170.7,862.9 L2171.4,863.8 L2172.1,866.7 L2172.7,869.9 L2173.4,865.1 L2174.1,864.8 L2174.8,865.3 L2175.4,862.4 L2176.1,865.9 L2176.8,865.8 L2177.5,864.6 L2178.2,867.8 L2178.8,866.9 L2179.5,864.2 L2180.2,865.9 L2180.9,865.8 L2181.5,866.5 L2182.2,868.2 L2182.9,869.7 L2183.6,865.4 L2184.3,864.4 L2184.9,861.5 L2185.6,861.2 L2186.3,866.1 L2187,865.4 L2187.6,866.6 L2188.3,867.3 L2189,864.5 L2189.7,860.3 L2190.3,863.5 L2191,862.5 L2191.7,868 L2192.4,865.7 L2193.1,862.2 L2193.7,859.6 L2194.4,865.1 L2195.1,862.9 L2195.8,864.9 L2196.4,863.9 L2197.1,868.8 L2197.8,866 L2198.5,860.3 L2199.1,862.7 L2199.8,863.7 L2200.5,861.8 L2201.2,866.9 L2201.9,869.4 L2202.5,865.6 L2203.2,864.6 L2203.9,865.4 L2204.6,863.4 L2205.2,862.3 L2205.9,865.7 L2206.6,866.2 L2207.3,866.4 L2207.9,862.5 L2208.6,861.8 L2209.3,863.6 L2210,863.5 L2210.7,866.2 L2211.3,869.1 L2212,865 L2212.7,863 L2213.4,865.2 L2214,863.3 L2214.7,863 L2215.4,868 L2216.1,866.2 L2216.8,862.9 L2217.4,861.9 L2218.1,862.4 L2218.8,861.9 L2219.5,861.1 L2220.1,860.3 L2220.8,860.5 L2221.5,859.8 L2222.2,850.9 L2222.8,848.1 L2223.5,850.9 L2224.2,847.8 L2224.9,845.7 L2225.6,838.3 L2226.2,831.3 L2226.9,828.7 L2227.6,821.4 L2228.3,816.6 L2228.9,809 L2229.6,800 L2230.3,797.8 L2231,786.8 L2231.6,773.4 L2232.3,764.1 L2233,754 L2233.7,747 L2234.4,740.1 L2235,729.8 L2235.7,714.6 L2236.4,704.2 L2237.1,699.5 L2237.7,688 L2238.4,684.6 L2239.1,676.4 L2239.8,676.2 L2240.4,664.8 L2241.1,663.2 L2241.8,659.7 L2242.5,658.5 L2243.2,661 L2243.8,665.9 L2244.5,669.9 L2245.2,671.4 L2245.9,675.5 L2246.5,681.1 L2247.2,689.5 L2247.9,696.5 L2248.6,706.8 L2249.3,715.2 L2249.9,724.5 L2250.6,733 L2251.3,741.1 L2252,748.9 L2252.6,762.3 L2253.3,771.6 L2254,779 L2254.7,787.5 L2255.3,789.9 L2256,797.3 L2256.7,808.5 L2257.4,813.1 L2258.1,822.7 L2258.7,829.1 L2259.4,830 L2260.1,830.4 L2260.8,832.2 L2261.4,840.7 L2262.1,840.9 L2262.8,845.7 L2263.5,850.4 L2264.1,845.2 L2264.8,845.6 L2265.5,850.3 L2266.2,847.4 L2266.9,853.9 L2267.5,855.6 L2268.2,855.4 L2268.9,850.3 L2269.6,853.4 L2270.2,848.6 L2270.9,851.3 L2271.6,855.7 L2272.3,853.9 L2272.9,855.3 L2273.6,852.8 L2274.3,849.2 L2275,849.8 L2275.7,848.6 L2276.3,854.6 L2277,851.7 L2277.7,854.8 L2278.4,850.7 L2279,847.7 L2279.7,847.7 L2280.4,853.1 L2281.1,853.2 L2281.8,851.7 L2282.4,852.8 L2283.1,854.6 L2283.8,848.9 L2284.5,852.7 L2285.1,853.9 L2285.8,852.9 L2286.5,856 L2287.2,857.2 L2287.8,856 L2288.5,853.4 L2289.2,855.7 L2289.9,857.2 L2290.6,854.4 L2291.2,856.9 L2291.9,857.3 L2292.6,854.9 L2293.3,856 L2293.9,856.6 L2294.6,857.4 L2295.3,858.5 L2296,857.2 L2296.6,860.5 L2297.3,859.2 L2298,855.1 L2298.7,858.3 L2299.4,859.8 L2300,857.6 L2300.7,858.6 L2301.4,862.4 L2302.1,858.8 L2302.7,860.1 L2303.4,858.5 L2304.1,858.5 L2304.8,861.7 L2305.4,862.5 L2306.1,862 L2306.8,860.5 L2307.5,860.8 L2308.2,858.1 L2308.8,862.9 L2309.5,858.9 L2310.2,864.8 L2310.9,865.5 L2311.5,864.3 L2312.2,857.2 L2312.9,862 L2313.6,861.1 L2314.2,860.1 L2314.9,861.7 L2315.6,868.1 L2316.3,863.7 L2317,860.9 L2317.6,860.9 L2318.3,864.1 L2319,865.4 L2319.7,868.7 L2320.3,869.5 L2321,864.9 L2321.7,865.4 L2322.4,865.2 L2323.1,865.4 L2323.7,868.3 L2324.4,869.9 L2325.1,865.6 L2325.8,866.9 L2326.4,866 L2327.1,863.5 L2327.8,868.7 L2328.5,868.6 L2329.1,865.7 L2329.8,867.1 L2330.5,867.1 L2331.2,868 L2331.9,867.2 L2332.5,870 L2333.2,870.1 L2333.9,872.6 L2334.6,873 L2335.2,868.4 L2335.9,869.3 L2336.6,869.5 L2337.3,865.7 L2337.9,870 L2338.6,871 L2339.3,873.1 L2340,867 L2340.7,865 L2341.3,865.9 L2342,866.2 L2342.7,870.1 L2343.4,870.2 L2344,868.9 L2344.7,864.8 L2345.4,862.9 L2346.1,864.1 L2346.7,865.5 L2347.4,869.4 L2348.1,865.2 L2348.8,870.7 L2349.5,868.4 L2350.1,862.4 L2350.8,861.8 L2351.5,862.6 L2352.2,865.5 L2352.8,868.5 L2353.5,870.4 L2354.2,863.9 L2354.9,860.8 L2355.6,865.7 L2356.2,863 L2356.9,867 L2357.6,868.9 L2358.3,868.8 L2358.9,870.1 L2359.6,865.2 L2360.3,867.2 L2361,865.2 L2361.6,867.7 L2362.3,866.9 L2363,867.7 L2363.7,869.5 L2364.4,867.4 L2365,864.1 L2365.7,867.6 L2366.4,871.3 L2367.1,873 L2367.7,868.4 L2368.4,869.2 L2369.1,870 L2369.8,867.8 L2370.4,868.9 L2371.1,870.5 L2371.8,868.8 L2372.5,869.7 L2373.2,873 L2373.8,870.5 L2374.5,869.5 L2375.2,867.9 L2375.9,870.4 L2376.5,871 L2377.2,872.9 L2377.9,873.5 L2378.6,867.5 L2379.2,872.8 L2379.9,869.7 L2380.6,873.9 L2381.3,873.6 L2382,871.5 L2382.6,872.5 L2383.3,873 L2384,871.3 L2384.7,870.9 L2385.3,875.7 L2386,875.8 L2386.7,878.2 L2387.4,873.4 L2388.1,872 L2388.7,871.8 L2389.4,874 L2390.1,873.1 L2390.8,877.3 L2391.4,873.6 L2392.1,871.3 L2392.8,871.5 L2393.5,871.8 L2394.1,870.2 L2394.8,874.5 L2395.5,872.5 L2396.2,876.2 L2396.9,871.7 L2397.5,871.3 L2398.2,869.9 L2398.9,868.7 L2399.6,874.7 L2400.2,871.3 L2400.9,873.5 L2401.6,872.5 L2402.3,870 L2402.9,871.9 L2403.6,871.4 L2404.3,870.1 L2405,874.3 L2405.7,871.5 L2406.3,867.9 L2407,865.1 L2407.7,865.8 L2408.4,867 L2409,871.6 L2409.7,867.9 L2410.4,873.1 L2411.1,867.2 L2411.7,864.5 L2412.4,866.6 L2413.1,868.4 L2413.8,871.6 L2414.5,871.2 L2415.1,873.7 L2415.8,873.2 L2416.5,871 L2417.2,867.6 L2417.8,868 L2418.5,874 L2419.2,876.3 L2419.9,875.9 L2420.5,875.2 L2421.2,872.6 L2421.9,870.9 L2422.6,873 L2423.3,874.3 L2423.9,877.1 L2424.6,875.5 L2425.3,876.3 L2426,873.4 L2426.6,873.7 L2427.3,872.2 L2428,877.5 L2428.7,876.1 L2429.4,879.5 L2430,874.3 L2430.7,874.8 L2431.4,874.6 L2432.1,873.3 L2432.7,875.6 L2433.4,880.3 L2434.1,880.9 L2434.8,874.1 L2435.4,877.4 L2436.1,876.2 L2436.8,873.2 L2437.5,880 L2438.2,880.4 L2438.8,881.2 L2439.5,880.6 L2440.2,876.2 L2440.9,876.2 L2441.5,879 L2442.2,881.7 L2442.9,879 L2443.6,880.3 L2444.2,880.3 L2444.9,880.7 L2445.6,879 L2446.3,879.7 L2447,882.3 L2447.6,881.2 L2448.3,885.3 L2449,883.1 L2449.7,883.3 L2450.3,881.4 L2451,881.4 L2451.7,883 L2452.4,887.4 L2453,884.2 L2453.7,884.4 L2454.4,884 L2455.1,884.8 L2455.8,883.2 L2456.4,887.6 L2457.1,885.8 L2457.8,885.9 L2458.5,885 L2459.1,880.1 L2459.8,882.6 L2460.5,883.1 L2461.2,884.8 L2461.9,881.8 L2462.5,885.7 L2463.2,881.2 L2463.9,879.7 L2464.6,876.2 L2465.2,876.1 L2465.9,881.8 L2466.6,876.3 L2467.3,878.2 L2467.9,878.2 L2468.6,871.5 L2469.3,872.5 L2470,868.1 L2470.7,868.6 L2471.3,865.6 L2472,863.3 L2472.7,855.7 L2473.4,847.3 L2474,841.9 L2474.7,840.7 L2475.4,834.1 L2476.1,831.8 L2476.7,823.2 L2477.4,810 L2478.1,804.2 L2478.8,791.3 L2479.5,784.3 L2480.1,778.1 L2480.8,766.9 L2481.5,761 L2482.2,746 L2482.8,739 L2483.5,730.1 L2484.2,718.6 L2484.9,713.5 L2485.5,709.3 L2486.2,701.6 L2486.9,695.7 L2487.6,687.4 L2488.3,683.5 L2488.9,681.7 L2489.6,686.9 L2490.3,685.5 L2491,685.9 L2491.6,690.3 L2492.3,690.2 L2493,699.9 L2493.7,702.5 L2494.4,712.4 L2495,719.7 L2495.7,729.7 L2496.4,736.4 L2497.1,748.1 L2497.7,754.1 L2498.4,767.6 L2499.1,777.8 L2499.8,788 L2500.4,796.3 L2501.1,803 L2501.8,807 L2502.5,820.6 L2503.2,827.7 L2503.8,834.5 L2504.5,839.2 L2505.2,847.2 L2505.9,850.7 L2506.5,851.3 L2507.2,856.3 L2507.9,862.8 L2508.6,868.1 L2509.2,869.7 L2509.9,870.4 L2510.6,872.2 L2511.3,874.6 L2512,874 L2512.6,876.4 L2513.3,876.8 L2514,878.4 L2514.7,877.4 L2515.3,879.4 L2516,876.6 L2516.7,875.7 L2517.4,874.8 L2518,876.8 L2518.7,879.2 L2519.4,877.7 L2520.1,877.6 L2520.8,872 L2521.4,876.1 L2522.1,877.5 L2522.8,874.1 L2523.5,878.1 L2524.1,875.3 L2524.8,874.6 L2525.5,872.4 L2526.2,875.5 L2526.8,872.5 L2527.5,878.1 L2528.2,874.3 L2528.9,875.9 L2529.6,877.8 L2530.2,876.7 L2530.9,872.8 L2531.6,876.4 L2532.3,879.8 L2532.9,879.1 L2533.6,881.7 L2534.3,879.2 L2535,875.7 L2535.7,874.7 L2536.3,876.5 L2537,881.6 L2537.7,881.2 L2538.4,882.3 L2539,877.8 L2539.7,881 L2540.4,879.1 L2541.1,877.8 L2541.7,882.2 L2542.4,884.5 L2543.1,883.9 L2543.8,883.8 L2544.5,877.9 L2545.1,883.4 L2545.8,883.7 L2546.5,885.7 L2547.2,883.4 L2547.8,886.9 L2548.5,881.7 L2549.2,879.4 L2549.9,879.7 L2550.5,884.7 L2551.2,887.5 L2551.9,886.6 L2552.6,884.2 L2553.3,883.7 L2553.9,885.6 L2554.6,882.3 L2555.3,882.1 L2556,883 L2556.6,885.9 L2557.3,886 L2558,884.6 L2558.7,885.1 L2559.3,887.2 L2560,884.5 L2560.7,889.2 L2561.4,889.1 L2562.1,886.5 L2562.7,887.5 L2563.4,885.4 L2564.1,883.4 L2564.8,888.4 L2565.4,885.4 L2566.1,887.3 L2566.8,891.6 L2567.5,890.2 L2568.2,889.1 L2568.8,884.9 L2569.5,890.3 L2570.2,892.6 L2570.9,888.7 L2571.5,891.4 L2572.2,889.4 L2572.9,886.7 L2573.6,891.4 L2574.2,892.1 L2574.9,890.9 L2575.6,895 L2576.3,893.3 L2577,890.3 L2577.6,888.5 L2578.3,889.2 L2579,893.6 L2579.7,893.8 L2580.3,891.2 L2581,896.8 L2581.7,892.8 L2582.4,892.9 L2583,887.8 L2583.7,892.9 L2584.4,892.4 L2585.1,892.5 L2585.8,892.1 L2586.4,888.8 L2587.1,887.3 L2587.8,889.7 L2588.5,891.9 L2589.1,889 L2589.8,888.4 L2590.5,894.7 L2591.2,888.2 L2591.8,889 L2592.5,887.5 L2593.2,887.7 L2593.9,888 L2594.6,886.7 L2595.2,889.1 L2595.9,888.9 L2596.6,884.2 L2597.3,885.8 L2597.9,887.1 L2598.6,888.6 L2599.3,889.2 L2600,891.4 L2600.7,890 L2601.3,888.1 L2602,886.9 L2602.7,888.7 L2603.4,886.7 L2604,887.9 L2604.7,891.9 L2605.4,888.6 L2606.1,884.5 L2606.7,888.3 L2607.4,888.1 L2608.1,889.9 L2608.8,890 L2609.5,889.1 L2610.1,892.3 L2610.8,885.1 L2611.5,887.3 L2612.2,887.5 L2612.8,889.7 L2613.5,889.6 L2614.2,893.8 L2614.9,889.8 L2615.5,890.1 L2616.2,889.1 L2616.9,889.1 L2617.6,893.1 L2618.3,895.3 L2618.9,891.9 L2619.6,890.1 L2620.3,888.6 L2621,891.1 L2621.6,890.1 L2622.3,894.7 L2623,892.6 L2623.7,894.1 L2624.3,892.2 L2625,890.8 L2625.7,892.6 L2626.4,890.6 L2627.1,893.3 L2627.7,893 L2628.4,896.2 L2629.1,896.2 L2629.8,891.1 L2630.4,891.1 L2631.1,890.3 L2631.8,891.7 L2632.5,898 L2633.1,894.7 L2633.8,896 L2634.5,891.1 L2635.2,893.4 L2635.9,894.7 L2636.5,895 L2636.5,970.5 L2635.9,970.7 L2635.2,972.6 L2634.5,970.9 L2633.8,969.8 L2633.1,976.5 L2632.5,975.2 L2631.8,972.4 L2631.1,967.7 L2630.4,969 L2629.8,969.4 L2629.1,971.9 L2628.4,971.3 L2627.7,971.7 L2627.1,968.8 L2626.4,971.8 L2625.7,965.2 L2625,968.9 L2624.3,972.6 L2623.7,971.6 L2623,970.1 L2622.3,969.4 L2621.6,968.2 L2621,967.9 L2620.3,968 L2619.6,971.6 L2618.9,971.9 L2618.3,969.3 L2617.6,965.3 L2616.9,967.7 L2616.2,962.7 L2615.5,966.7 L2614.9,970.4 L2614.2,968.3 L2613.5,967.4 L2612.8,966.9 L2612.2,963.9 L2611.5,963.9 L2610.8,966.1 L2610.1,969.1 L2609.5,970.6 L2608.8,964.7 L2608.1,965.8 L2607.4,964.3 L2606.7,965 L2606.1,964.4 L2605.4,965.8 L2604.7,964 L2604,967.5 L2603.4,961.9 L2602.7,963.2 L2602,962.8 L2601.3,959.4 L2600.7,966.7 L2600,967.5 L2599.3,962 L2598.6,963.5 L2597.9,959.4 L2597.3,961.8 L2596.6,963.5 L2595.9,960.9 L2595.2,964 L2594.6,963.1 L2593.9,963.2 L2593.2,960.4 L2592.5,962.6 L2591.8,963.3 L2591.2,963.9 L2590.5,969.6 L2589.8,968.7 L2589.1,967.1 L2588.5,964.9 L2587.8,964.2 L2587.1,964.3 L2586.4,965.3 L2585.8,969.5 L2585.1,969.9 L2584.4,966.6 L2583.7,963.3 L2583,964.7 L2582.4,963.2 L2581.7,965.4 L2581,967.2 L2580.3,968.6 L2579.7,964.8 L2579,962.8 L2578.3,963.9 L2577.6,964 L2577,965.9 L2576.3,968.8 L2575.6,965.9 L2574.9,967 L2574.2,963.4 L2573.6,959.8 L2572.9,960.8 L2572.2,962.9 L2571.5,963.9 L2570.9,966.9 L2570.2,964.6 L2569.5,961.5 L2568.8,960.5 L2568.2,958.5 L2567.5,964.6 L2566.8,964.9 L2566.1,965.2 L2565.4,960.1 L2564.8,962.1 L2564.1,958.9 L2563.4,960.7 L2562.7,958.6 L2562.1,965 L2561.4,962.2 L2560.7,958.2 L2560,956.4 L2559.3,956 L2558.7,955.3 L2558,959.3 L2557.3,961.3 L2556.6,961.8 L2556,961.4 L2555.3,959.3 L2554.6,954.6 L2553.9,957.8 L2553.3,961.2 L2552.6,961.3 L2551.9,958.5 L2551.2,956.2 L2550.5,955.1 L2549.9,956.5 L2549.2,953.2 L2548.5,957.1 L2547.8,957.5 L2547.2,955 L2546.5,953.5 L2545.8,957.2 L2545.1,951 L2544.5,952.1 L2543.8,952.5 L2543.1,955.4 L2542.4,957.8 L2541.7,956.8 L2541.1,951 L2540.4,950.6 L2539.7,947.8 L2539,953.3 L2538.4,952.5 L2537.7,951.9 L2537,953.1 L2536.3,949 L2535.7,950.8 L2535,947.4 L2534.3,950.9 L2533.6,953.6 L2532.9,948.5 L2532.3,948.8 L2531.6,946.1 L2530.9,946.2 L2530.2,944 L2529.6,945.6 L2528.9,952.7 L2528.2,950.5 L2527.5,944.4 L2526.8,943.6 L2526.2,945.2 L2525.5,945.3 L2524.8,946 L2524.1,947.8 L2523.5,947.5 L2522.8,945.5 L2522.1,945.7 L2521.4,947.3 L2520.8,946.5 L2520.1,951.4 L2519.4,950.6 L2518.7,950.5 L2518,950.7 L2517.4,948.1 L2516.7,948.1 L2516,947.4 L2515.3,948.7 L2514.7,949.7 L2514,947.3 L2513.3,947.3 L2512.6,943.9 L2512,942.3 L2511.3,945.4 L2510.6,945.1 L2509.9,942.2 L2509.2,939.5 L2508.6,934.8 L2507.9,933.2 L2507.2,927.7 L2506.5,925.9 L2505.9,922.1 L2505.2,920.1 L2504.5,911.2 L2503.8,908.5 L2503.2,899.5 L2502.5,890.4 L2501.8,879.9 L2501.1,879.6 L2500.4,869.1 L2499.8,859.2 L2499.1,852.5 L2498.4,837.9 L2497.7,828.7 L2497.1,822.7 L2496.4,814.1 L2495.7,808.1 L2495,796.6 L2494.4,787.3 L2493.7,779.1 L2493,775.3 L2492.3,767.2 L2491.6,766.7 L2491,766 L2490.3,761.8 L2489.6,763.7 L2488.9,759.7 L2488.3,760.7 L2487.6,763.9 L2486.9,771.8 L2486.2,780.5 L2485.5,782.6 L2484.9,789 L2484.2,793.8 L2483.5,805.4 L2482.8,809.7 L2482.2,820.5 L2481.5,833.4 L2480.8,841.7 L2480.1,850.5 L2479.5,860 L2478.8,864.9 L2478.1,874 L2477.4,886.1 L2476.7,891.8 L2476.1,902 L2475.4,904.8 L2474.7,911.2 L2474,915.7 L2473.4,920.2 L2472.7,927.3 L2472,930.9 L2471.3,934.1 L2470.7,936.3 L2470,934.9 L2469.3,939.3 L2468.6,937.5 L2467.9,941.9 L2467.3,948.7 L2466.6,948.7 L2465.9,947.8 L2465.2,944.8 L2464.6,945.1 L2463.9,945 L2463.2,951.7 L2462.5,953.1 L2461.9,949.8 L2461.2,949.2 L2460.5,947.9 L2459.8,949.5 L2459.1,951.8 L2458.5,952.9 L2457.8,952.2 L2457.1,953.6 L2456.4,954.8 L2455.8,954.4 L2455.1,949.7 L2454.4,949.8 L2453.7,951.5 L2453,957.3 L2452.4,954.5 L2451.7,951.9 L2451,950.4 L2450.3,949.6 L2449.7,947.3 L2449,951.5 L2448.3,948.7 L2447.6,947.9 L2447,947.2 L2446.3,947.7 L2445.6,943.2 L2444.9,943 L2444.2,948.3 L2443.6,950.7 L2442.9,946.2 L2442.2,945 L2441.5,942.2 L2440.9,941.2 L2440.2,943.8 L2439.5,947.5 L2438.8,948.3 L2438.2,946.1 L2437.5,942.2 L2436.8,943.1 L2436.1,940.2 L2435.4,943.5 L2434.8,941.6 L2434.1,942.2 L2433.4,945.5 L2432.7,945 L2432.1,941.9 L2431.4,939.1 L2430.7,937.5 L2430,944.1 L2429.4,946 L2428.7,941.8 L2428,943.8 L2427.3,943.3 L2426.6,937.1 L2426,940.5 L2425.3,942.3 L2424.6,942.9 L2423.9,942.5 L2423.3,942.3 L2422.6,935.8 L2421.9,934.5 L2421.2,935.4 L2420.5,936.4 L2419.9,939.3 L2419.2,936.8 L2418.5,935.6 L2417.8,934.7 L2417.2,935.6 L2416.5,932.7 L2415.8,939.1 L2415.1,940.2 L2414.5,935.8 L2413.8,937 L2413.1,932.7 L2412.4,933.6 L2411.7,931.5 L2411.1,932.4 L2410.4,933.7 L2409.7,932.9 L2409,931.7 L2408.4,935.5 L2407.7,932.7 L2407,931.1 L2406.3,937.5 L2405.7,937.7 L2405,935.8 L2404.3,933 L2403.6,937.4 L2402.9,935.8 L2402.3,933.8 L2401.6,938.7 L2400.9,939.6 L2400.2,935.6 L2399.6,935.2 L2398.9,934.6 L2398.2,934.7 L2397.5,932 L2396.9,938.8 L2396.2,940.2 L2395.5,938.5 L2394.8,939.1 L2394.1,935.1 L2393.5,938.2 L2392.8,937.3 L2392.1,941 L2391.4,939.4 L2390.8,940 L2390.1,939.4 L2389.4,935.6 L2388.7,938.6 L2388.1,932.7 L2387.4,939.1 L2386.7,936.9 L2386,939.3 L2385.3,935.1 L2384.7,937 L2384,934 L2383.3,931.8 L2382.6,938.5 L2382,938.2 L2381.3,935.9 L2380.6,938.6 L2379.9,935.1 L2379.2,936.5 L2378.6,931.8 L2377.9,936.9 L2377.2,936.1 L2376.5,939.1 L2375.9,935.1 L2375.2,937 L2374.5,934.5 L2373.8,932 L2373.2,933.4 L2372.5,939.1 L2371.8,938.2 L2371.1,933 L2370.4,931.6 L2369.8,930.6 L2369.1,930.6 L2368.4,936.7 L2367.7,932.6 L2367.1,933.3 L2366.4,932 L2365.7,929.8 L2365,931.8 L2364.4,932.8 L2363.7,930.6 L2363,936.1 L2362.3,934 L2361.6,934.5 L2361,929.1 L2360.3,931.5 L2359.6,931.4 L2358.9,931.2 L2358.3,935.4 L2357.6,929.2 L2356.9,931.9 L2356.2,927.1 L2355.6,927.5 L2354.9,925.2 L2354.2,931.5 L2353.5,930.7 L2352.8,930.4 L2352.2,927.2 L2351.5,925.7 L2350.8,927.9 L2350.1,926.3 L2349.5,929.2 L2348.8,931.4 L2348.1,933.4 L2347.4,930.1 L2346.7,930.4 L2346.1,927.4 L2345.4,927.6 L2344.7,934.6 L2344,930.9 L2343.4,934.4 L2342.7,934.6 L2342,932.3 L2341.3,931.9 L2340.7,931.1 L2340,933 L2339.3,933.7 L2338.6,934 L2337.9,934.9 L2337.3,932.3 L2336.6,928.8 L2335.9,928.8 L2335.2,936 L2334.6,935.7 L2333.9,931.8 L2333.2,930.1 L2332.5,931.5 L2331.9,932.3 L2331.2,930.1 L2330.5,930.5 L2329.8,935.6 L2329.1,930.6 L2328.5,928.3 L2327.8,927.6 L2327.1,930.2 L2326.4,931.1 L2325.8,930.1 L2325.1,932.4 L2324.4,934.1 L2323.7,928.3 L2323.1,929.7 L2322.4,930 L2321.7,928.6 L2321,930.7 L2320.3,930.5 L2319.7,931.7 L2319,930.4 L2318.3,928.6 L2317.6,924.7 L2317,927.7 L2316.3,925.6 L2315.6,927.4 L2314.9,929.4 L2314.2,927.2 L2313.6,925.7 L2312.9,922.9 L2312.2,923.2 L2311.5,925.5 L2310.9,926.1 L2310.2,929.3 L2309.5,923.4 L2308.8,922 L2308.2,924.8 L2307.5,920.4 L2306.8,926.1 L2306.1,924.4 L2305.4,924.2 L2304.8,923.6 L2304.1,925.6 L2303.4,924.5 L2302.7,922.3 L2302.1,923.9 L2301.4,923.9 L2300.7,921.4 L2300,923.9 L2299.4,918.9 L2298.7,922.7 L2298,918.5 L2297.3,921.9 L2296.6,925.5 L2296,925 L2295.3,919.7 L2294.6,917.3 L2293.9,921.4 L2293.3,917.3 L2292.6,920.7 L2291.9,920.5 L2291.2,920.5 L2290.6,917.7 L2289.9,915.9 L2289.2,918.4 L2288.5,915.2 L2287.8,920.4 L2287.2,919.7 L2286.5,918.7 L2285.8,916.1 L2285.1,917.5 L2284.5,917 L2283.8,914.2 L2283.1,919.5 L2282.4,919.2 L2281.8,919.6 L2281.1,916 L2280.4,917.3 L2279.7,915.8 L2279,914.4 L2278.4,915.8 L2277.7,920.6 L2277,918.5 L2276.3,915.9 L2275.7,915.7 L2275,912.9 L2274.3,915 L2273.6,919.8 L2272.9,919.6 L2272.3,917 L2271.6,916 L2270.9,914.1 L2270.2,917.2 L2269.6,917.3 L2268.9,920 L2268.2,920.4 L2267.5,916.5 L2266.9,916 L2266.2,914.1 L2265.5,913.5 L2264.8,909.7 L2264.1,912.2 L2263.5,912.3 L2262.8,909.7 L2262.1,904.8 L2261.4,901.9 L2260.8,897.6 L2260.1,898.3 L2259.4,897.4 L2258.7,892.3 L2258.1,885.9 L2257.4,877.4 L2256.7,873.3 L2256,867.1 L2255.3,857.7 L2254.7,853.8 L2254,850 L2253.3,837.5 L2252.6,827.4 L2252,821.5 L2251.3,807.3 L2250.6,797.4 L2249.9,795.7 L2249.3,785.9 L2248.6,778.8 L2247.9,764.9 L2247.2,757.8 L2246.5,752.2 L2245.9,743.8 L2245.2,740.2 L2244.5,738.6 L2243.8,737.2 L2243.2,730.6 L2242.5,729.6 L2241.8,734.7 L2241.1,731 L2240.4,738.8 L2239.8,745.2 L2239.1,751.6 L2238.4,755.6 L2237.7,761.8 L2237.1,766.7 L2236.4,775.3 L2235.7,789.9 L2235,800.9 L2234.4,807.5 L2233.7,816.9 L2233,826.1 L2232.3,831.1 L2231.6,842.7 L2231,851.4 L2230.3,860.7 L2229.6,868.1 L2228.9,875.1 L2228.3,879.2 L2227.6,888.1 L2226.9,893.9 L2226.2,898.2 L2225.6,907.8 L2224.9,909.2 L2224.2,912.9 L2223.5,911.2 L2222.8,916.4 L2222.2,916.3 L2221.5,920.5 L2220.8,927.8 L2220.1,928.6 L2219.5,924.7 L2218.8,923.8 L2218.1,928.3 L2217.4,923.5 L2216.8,929.6 L2216.1,932.6 L2215.4,931.7 L2214.7,930 L2214,927.9 L2213.4,924.6 L2212.7,925.2 L2212,932.5 L2211.3,929.8 L2210.7,931.3 L2210,931.2 L2209.3,930.1 L2208.6,927.5 L2207.9,928.2 L2207.3,926.6 L2206.6,934.2 L2205.9,932.7 L2205.2,927.6 L2204.6,929.5 L2203.9,927.3 L2203.2,928.9 L2202.5,931.7 L2201.9,931.8 L2201.2,929.4 L2200.5,930.8 L2199.8,926.6 L2199.1,926 L2198.5,924.4 L2197.8,928.5 L2197.1,929.9 L2196.4,927.1 L2195.8,929.1 L2195.1,924.8 L2194.4,929 L2193.7,924.3 L2193.1,927.8 L2192.4,928.8 L2191.7,931.4 L2191,931 L2190.3,928.5 L2189.7,926 L2189,925.3 L2188.3,928.9 L2187.6,930.5 L2187,928.7 L2186.3,926.3 L2185.6,928 L2184.9,928.8 L2184.3,929.5 L2183.6,931.7 L2182.9,929.2 L2182.2,932.2 L2181.5,930.1 L2180.9,926.7 L2180.2,926.4 L2179.5,926.8 L2178.8,931 L2178.2,934.5 L2177.5,928.3 L2176.8,931.2 L2176.1,930.7 L2175.4,929.6 L2174.8,930.6 L2174.1,928.3 L2173.4,933.2 L2172.7,929.6 L2172.1,930.2 L2171.4,928.6 L2170.7,925.6 L2170,928 L2169.4,932 L2168.7,930.7 L2168,932.1 L2167.3,928.3 L2166.6,928.8 L2166,926.5 L2165.3,925.7 L2164.6,930.2 L2163.9,931.8 L2163.3,932.3 L2162.6,933.6 L2161.9,930.7 L2161.2,931.3 L2160.6,930.6 L2159.9,931.5 L2159.2,935.3 L2158.5,932.9 L2157.8,932.2 L2157.2,930.4 L2156.5,927.5 L2155.8,926.9 L2155.1,930.1 L2154.5,935.2 L2153.8,935.1 L2153.1,930.4 L2152.4,929.3 L2151.8,932.2 L2151.1,929.8 L2150.4,931.8 L2149.7,935.3 L2149,931.8 L2148.4,934.2 L2147.7,933.4 L2147,927.9 L2146.3,930.2 L2145.7,930.3 L2145,932.8 L2144.3,934.3 L2143.6,931.7 L2143,930 L2142.3,932.2 L2141.6,928.1 L2140.9,930.7 L2140.2,933.9 L2139.6,933.7 L2138.9,934 L2138.2,933.3 L2137.5,929.1 L2136.9,932.1 L2136.2,931.2 L2135.5,935.2 L2134.8,935.6 L2134.1,935.9 L2133.5,930.2 L2132.8,931.6 L2132.1,932.3 L2131.4,932.1 L2130.8,935.7 L2130.1,933.1 L2129.4,936.1 L2128.7,930 L2128.1,930.3 L2127.4,929.5 L2126.7,931.5 L2126,935.5 L2125.3,934.6 L2124.7,934.5 L2124,932.2 L2123.3,931.2 L2122.6,929.3 L2122,932.8 L2121.3,935.9 L2120.6,937.8 L2119.9,931.7 L2119.3,932.3 L2118.6,930.4 L2117.9,930.3 L2117.2,935.8 L2116.5,936.1 L2115.9,932.5 L2115.2,936.5 L2114.5,931.8 L2113.8,932 L2113.2,933.1 L2112.5,931.8 L2111.8,935.6 L2111.1,935.5 L2110.5,933.3 L2109.8,932.9 L2109.1,930.4 L2108.4,932.3 L2107.7,935.3 L2107.1,935.3 L2106.4,935.3 L2105.7,932.1 L2105,934.9 L2104.4,932.7 L2103.7,932.9 L2103,936.8 L2102.3,936.6 L2101.6,935.3 L2101,934.4 L2100.3,930.2 L2099.6,929.9 L2098.9,932.6 L2098.3,931.2 L2097.6,934.3 L2096.9,932.6 L2096.2,936 L2095.6,932 L2094.9,929.5 L2094.2,929.8 L2093.5,933.9 L2092.8,933.3 L2092.2,936.6 L2091.5,933 L2090.8,929.4 L2090.1,934 L2089.5,928.1 L2088.8,930.4 L2088.1,937.4 L2087.4,934 L2086.8,932.4 L2086.1,931.7 L2085.4,932 L2084.7,929.8 L2084,931.6 L2083.4,935.5 L2082.7,931.6 L2082,932.9 L2081.3,929.9 L2080.7,928.9 L2080,931.2 L2079.3,930.8 L2078.6,934.7 L2078,934.6 L2077.3,931 L2076.6,928.9 L2075.9,928.4 L2075.2,931.2 L2074.6,933.9 L2073.9,931.5 L2073.2,936.2 L2072.5,930.4 L2071.9,929.6 L2071.2,930.4 L2070.5,932.1 L2069.8,933.8 L2069.1,933.7 L2068.5,934.3 L2067.8,928.9 L2067.1,929.3 L2066.4,926.9 L2065.8,927.3 L2065.1,929.9 L2064.4,932.1 L2063.7,934.9 L2063.1,929.5 L2062.4,931.5 L2061.7,926.7 L2061,928.5 L2060.3,932.4 L2059.7,930.4 L2059,933.2 L2058.3,932.3 L2057.6,930 L2057,927.9 L2056.3,929.5 L2055.6,928.8 L2054.9,930.4 L2054.3,933.9 L2053.6,931.9 L2052.9,931.1 L2052.2,929.4 L2051.5,929.6 L2050.9,929.8 L2050.2,932.5 L2049.5,931.5 L2048.8,933.1 L2048.2,928 L2047.5,926.7 L2046.8,931.3 L2046.1,929.6 L2045.5,934.6 L2044.8,935.5 L2044.1,928.7 L2043.4,930.7 L2042.7,931.4 L2042.1,926.5 L2041.4,932.9 L2040.7,936.6 L2040,934.9 L2039.4,932.9 L2038.7,928.5 L2038,931.4 L2037.3,929.5 L2036.7,934.1 L2036,933.4 L2035.3,931.4 L2034.6,934.9 L2033.9,932.4 L2033.3,928.1 L2032.6,928 L2031.9,933.8 L2031.2,934.1 L2030.6,931.5 L2029.9,930.8 L2029.2,932.9 L2028.5,929.3 L2027.8,928.7 L2027.2,934 L2026.5,933.9 L2025.8,931.7 L2025.1,935.4 L2024.5,931.7 L2023.8,933.5 L2023.1,931.8 L2022.4,933.3 L2021.8,936.6 L2021.1,929.6 L2020.4,933.2 L2019.7,929.1 L2019,929.8 L2018.4,927.2 L2017.7,924.9 L2017,924.7 L2016.3,921.9 L2015.7,918.9 L2015,918.4 L2014.3,916.4 L2013.6,908.2 L2013,911.8 L2012.3,906.5 L2011.6,902.1 L2010.9,892.7 L2010.2,890 L2009.6,881.2 L2008.9,873.8 L2008.2,872 L2007.5,867.1 L2006.9,853.1 L2006.2,847.9 L2005.5,837.3 L2004.8,827.5 L2004.2,818.5 L2003.5,809.7 L2002.8,802.1 L2002.1,794.6 L2001.4,786.3 L2000.8,778.4 L2000.1,771.3 L1999.4,764.2 L1998.7,759.8 L1998.1,758.9 L1997.4,754.9 L1996.7,747.1 L1996,747.6 L1995.3,746.3 L1994.7,746.4 L1994,751.6 L1993.3,754.8 L1992.6,757.6 L1992,761.2 L1991.3,765.9 L1990.6,771.9 L1989.9,776.9 L1989.3,789.1 L1988.6,799.2 L1987.9,806.6 L1987.2,817.3 L1986.5,824.3 L1985.9,829 L1985.2,838.3 L1984.5,852.7 L1983.8,859 L1983.2,870.6 L1982.5,873.9 L1981.8,883.2 L1981.1,885.4 L1980.5,895.5 L1979.8,900.9 L1979.1,909.5 L1978.4,915.7 L1977.7,917.8 L1977.1,916.1 L1976.4,922.9 L1975.7,925.8 L1975,932.4 L1974.4,931.7 L1973.7,935.3 L1973,936.2 L1972.3,934.8 L1971.7,936.4 L1971,938.8 L1970.3,943.3 L1969.6,941.7 L1968.9,940.8 L1968.3,939.8 L1967.6,939.7 L1966.9,942 L1966.2,940.5 L1965.6,942.8 L1964.9,946 L1964.2,940.7 L1963.5,939.7 L1962.8,943.6 L1962.2,940.9 L1961.5,939.4 L1960.8,943.3 L1960.1,940.9 L1959.5,945.7 L1958.8,943.3 L1958.1,940.6 L1957.4,942.1 L1956.8,939.3 L1956.1,939.7 L1955.4,943.9 L1954.7,943.5 L1954,942.3 L1953.4,939.6 L1952.7,938.6 L1952,938.7 L1951.3,942.1 L1950.7,941.9 L1950,938.8 L1949.3,942.7 L1948.6,937.7 L1948,936.7 L1947.3,936.4 L1946.6,941.5 L1945.9,940.6 L1945.2,940.6 L1944.6,938.6 L1943.9,939.3 L1943.2,937.2 L1942.5,938.9 L1941.9,939.6 L1941.2,942.4 L1940.5,942 L1939.8,941.6 L1939.2,935.7 L1938.5,935.9 L1937.8,938.5 L1937.1,937.1 L1936.4,938.9 L1935.8,938.5 L1935.1,941 L1934.4,937.6 L1933.7,938.3 L1933.1,937.1 L1932.4,939.5 L1931.7,938.5 L1931,940.8 L1930.4,936.2 L1929.7,935.3 L1929,933.6 L1928.3,932.9 L1927.6,935.9 L1927,937.8 L1926.3,938.4 L1925.6,936.8 L1924.9,933.9 L1924.3,936.6 L1923.6,934.3 L1922.9,936 L1922.2,939.2 L1921.5,938.6 L1920.9,937.1 L1920.2,936.5 L1919.5,934.7 L1918.8,934.5 L1918.2,939 L1917.5,939.2 L1916.8,938 L1916.1,937.7 L1915.5,936.9 L1914.8,934 L1914.1,932.1 L1913.4,933.9 L1912.7,939.5 L1912.1,936.6 L1911.4,934.9 L1910.7,932.5 L1910,931.4 L1909.4,934.9 L1908.7,938.7 L1908,936.2 L1907.3,937.7 L1906.7,936.5 L1906,936.8 L1905.3,934.7 L1904.6,931 L1903.9,938.4 L1903.3,937.9 L1902.6,937.6 L1901.9,934 L1901.2,932.6 L1900.6,930.3 L1899.9,930 L1899.2,932.4 L1898.5,937 L1897.9,936.6 L1897.2,936.7 L1896.5,935.7 L1895.8,930.7 L1895.1,930.7 L1894.5,935.7 L1893.8,936.6 L1893.1,937 L1892.4,934.6 L1891.8,931.2 L1891.1,932.4 L1890.4,929.8 L1889.7,932.6 L1889,934 L1888.4,934.3 L1887.7,935.2 L1887,930.6 L1886.3,934.9 L1885.7,932.7 L1885,932.2 L1884.3,933.7 L1883.6,936.6 L1883,933.5 L1882.3,934 L1881.6,932.1 L1880.9,931.1 L1880.2,931.9 L1879.6,937.8 L1878.9,937.5 L1878.2,931.5 L1877.5,933.1 L1876.9,932.4 L1876.2,931.5 L1875.5,935.2 L1874.8,937 L1874.2,936.9 L1873.5,934.6 L1872.8,934.4 L1872.1,930.8 L1871.4,929.3 L1870.8,933.3 L1870.1,932.1 L1869.4,935.8 L1868.7,933 L1868.1,930.5 L1867.4,929.9 L1866.7,930.9 L1866,935.3 L1865.4,933.5 L1864.7,931.9 L1864,933.2 L1863.3,933.8 L1862.6,927.5 L1862,929.2 L1861.3,930.3 L1860.6,936.3 L1859.9,936.2 L1859.3,933.9 L1858.6,931.9 L1857.9,927.9 L1857.2,928.8 L1856.5,933 L1855.9,934.7 L1855.2,932.5 L1854.5,929.5 L1853.8,929.2 L1853.2,931.5 L1852.5,932.8 L1851.8,931.5 L1851.1,931.6 L1850.5,932.2 L1849.8,934 L1849.1,932.8 L1848.4,932.8 L1847.7,933 L1847.1,931.9 L1846.4,934.3 L1845.7,933.4 L1845,933.5 L1844.4,933.7 L1843.7,934.1 L1843,929.7 L1842.3,934.4 L1841.7,937.1 L1841,935.4 L1840.3,934.6 L1839.6,934.1 L1838.9,931.1 L1838.3,929.9 L1837.6,933.2 L1836.9,933.8 L1836.2,937.2 L1835.6,936.5 L1834.9,936 L1834.2,934.5 L1833.5,932.7 L1832.9,937.8 L1832.2,935.4 L1831.5,933.5 L1830.8,934.3 L1830.1,934.6 L1829.5,933.4 L1828.8,933.4 L1828.1,934.3 L1827.4,939.3 L1826.8,935.8 L1826.1,938.9 L1825.4,935.2 L1824.7,933.4 L1824.1,936.4 L1823.4,938.5 L1822.7,939.5 L1822,935.1 L1821.3,939.4 L1820.7,937.7 L1820,934.6 L1819.3,936.7 L1818.6,935.8 L1818,936.1 L1817.3,938 L1816.6,934.6 L1815.9,936.7 L1815.2,936.3 L1814.6,937.4 L1813.9,940 L1813.2,941.3 L1812.5,939.2 L1811.9,936.8 L1811.2,934.5 L1810.5,933.1 L1809.8,937.7 L1809.2,935.5 L1808.5,941.6 L1807.8,940.2 L1807.1,935.2 L1806.4,938.3 L1805.8,937.5 L1805.1,937.9 L1804.4,938.6 L1803.7,941.4 L1803.1,940.1 L1802.4,936.9 L1801.7,937.6 L1801,934.7 L1800.4,935.1 L1799.7,941.6 L1799,938.3 L1798.3,940.9 L1797.6,941.6 L1797,938.1 L1796.3,939 L1795.6,934.2 L1794.9,938.6 L1794.3,940.4 L1793.6,938.7 L1792.9,940.1 L1792.2,939.4 L1791.6,937.9 L1790.9,939.6 L1790.2,941.2 L1789.5,943 L1788.8,941.1 L1788.2,939.1 L1787.5,940.6 L1786.8,936.9 L1786.1,937.7 L1785.5,940.2 L1784.8,942.4 L1784.1,941.3 L1783.4,944.2 L1782.7,940.7 L1782.1,939.1 L1781.4,938.4 L1780.7,941.9 L1780,944.1 L1779.4,946.9 L1778.7,944.6 L1778,946 L1777.3,944.8 L1776.7,941.3 L1776,946 L1775.3,949.1 L1774.6,946.7 L1773.9,944.2 L1773.3,943.1 L1772.6,944 L1771.9,939.3 L1771.2,942.8 L1770.6,941.8 L1769.9,943.5 L1769.2,938.4 L1768.5,936 L1767.9,929.2 L1767.2,928 L1766.5,929.1 L1765.8,928.5 L1765.1,921.4 L1764.5,915.5 L1763.8,908.3 L1763.1,903.1 L1762.4,898.7 L1761.8,892.9 L1761.1,889.1 L1760.4,884.7 L1759.7,877.3 L1759.1,865.1 L1758.4,856 L1757.7,850.8 L1757,844.2 L1756.3,836.9 L1755.7,830.5 L1755,817.4 L1754.3,811.1 L1753.6,799.3 L1753,793.7 L1752.3,792.7 L1751.6,788.8 L1750.9,784.5 L1750.2,777.4 L1749.6,774.5 L1748.9,773.4 L1748.2,767.9 L1747.5,775.5 L1746.9,775.9 L1746.2,780.8 L1745.5,781.7 L1744.8,782 L1744.2,787.9 L1743.5,797.1 L1742.8,804.5 L1742.1,814.5 L1741.4,819.7 L1740.8,829.4 L1740.1,833.2 L1739.4,841.1 L1738.7,848 L1738.1,860.1 L1737.4,867.6 L1736.7,876 L1736,880.1 L1735.4,886 L1734.7,891.1 L1734,897.4Z" fill="rgba(161,105,235,0.5)"/>
</g>
<text x="1678" y="579.9" text-anchor="end" font-family="Liberation Sans,sans-serif" font-size="24" fill="#2a3f5f">30k</text>
<text x="1678" y="698.7" text-anchor="end" font-family="Liberation Sans,sans-serif" font-size="24" fill="#2a3f5f">20k</text>
<text x="1678" y="817.5" text-anchor="end" font-family="Liberation Sans,sans-serif" font-size="24" fill="#2a3f5f">10k</text>
<text x="1678" y="936.5" text-anchor="end" font-family="Liberation Sans,sans-serif" font-size="24" fill="#2a3f5f">0</text>
<text x="1773.4" y="1025" text-anchor="middle" font-family="Liberation Sans,sans-serif" font-size="24" fill="#2a3f5f">2023</text>
<text x="2020.6" y="1025" text-anchor="middle" font-family="Liberation Sans,sans-serif" font-size="24" fill="#2a3f5f">2024</text>
<text x="2268.6" y="1025" text-anchor="middle" font-family="Liberation Sans,sans-serif" font-size="24" fill="#2a3f5f">2025</text>
<text x="2515.7" y="1025" text-anchor="middle" font-family="Liberation Sans,sans-serif" font-size="24" fill="#2a3f5f">2026</text>
<text x="2159" y="1074" text-anchor="middle" font-family="Liberation Sans,sans-serif" font-size="26" fill="#2a3f5f">日期</text>
<text transform="translate(1604,756) rotate(-90)" text-anchor="middle" font-family="Liberation Sans,sans-serif" font-size="26" fill="#2a3f5f">销售额</text>
<rect x="2666" y="537" width="54" height="12" fill="rgba(161,105,235,0.5)"/>
<line x1="2666" y1="575.1" x2="2720" y2="575.1" stroke="#e8301f" stroke-width="3.6"/>
<circle cx="2692.5" cy="609.3" r="5.6" fill="#0000ff"/>
<text x="2729" y="551" font-family="Liberation Sans,sans-serif" font-size="22" fill="#2a3f5f">置信区间</text>
<text x="2729" y="585" font-family="Liberation Sans,sans-serif" font-size="22" fill="#2a3f5f">预测值</text>
<text x="2729" y="619" font-family="Liberation Sans,sans-serif" font-size="22" fill="#2a3f5f">实际销售额</text>
</svg>

<div class="t" style="left:1536px;top:1218px;font-size:26px;letter-spacing:-0.15px;color:#1f1f1f">已完成Prophet模型训练与预测，并生成了未来一年（2025-11-05至2026-11-04）的销售额预测结果及可视化图表。</div>

<svg class="abs" style="left:2900px;top:1070px" width="36" height="52" viewBox="2900 1070 36 52">
  <circle cx="2932" cy="1096" r="21.6" fill="#2254d6"/>
  <path d="M2932 1090 L2926 1096 L2932 1102" fill="none" stroke="#fff" stroke-width="2.4"/>
</svg>

<svg class="abs" style="left:0;top:1314px" width="24" height="24" viewBox="0 0 24 24"><path d="M0 12 A12 12 0 0 0 12 24 H0Z" fill="#10180c"/></svg>
<svg class="abs" style="left:2920px;top:1322px" width="16" height="16" viewBox="0 0 16 16"><path d="M16 4 A12 12 0 0 1 4 16 H16Z" fill="#111"/></svg>

</body></html>
